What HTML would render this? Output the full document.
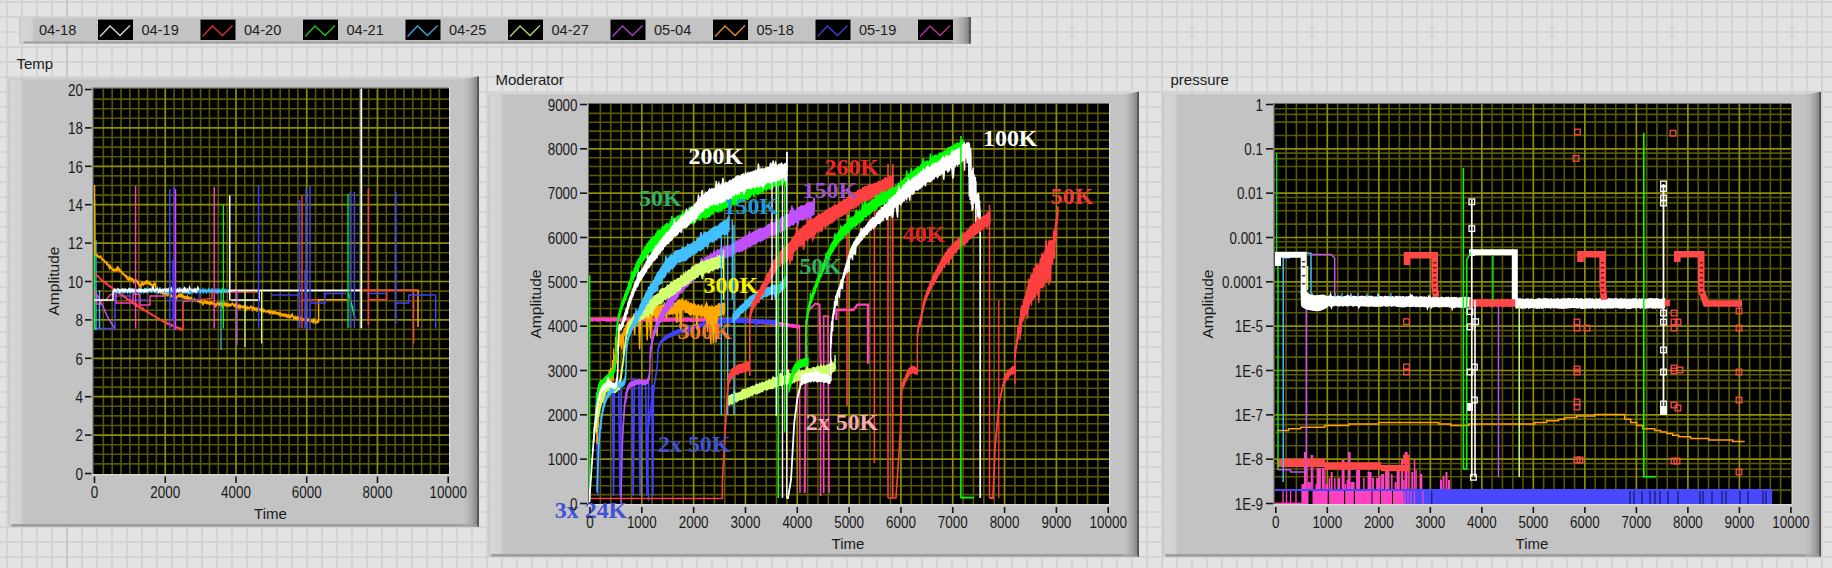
<!DOCTYPE html>
<html><head><meta charset="utf-8"><style>
html,body{margin:0;padding:0;}
body{width:1832px;height:568px;overflow:hidden;position:relative;
background-color:#e3e3e3;
background-image:linear-gradient(to right, #d4d4d4 0, #d4d4d4 2px, transparent 2px),
 linear-gradient(to bottom, #d4d4d4 0, #d4d4d4 2px, transparent 2px);
background-size:15px 15px;background-position:6px 1px;}
.dk{position:absolute;left:66px;top:0;width:2px;height:568px;background:#c9c9c9;}
svg{position:absolute;left:0;top:0;}
text{white-space:pre;}
</style></head><body><div class="dk"></div>
<svg width="1832" height="568" viewBox="0 0 1832 568"><defs>
<clipPath id="clipT"><rect x="93.5" y="88.5" width="355.5" height="385.5"/></clipPath>
<clipPath id="clipM"><rect x="589" y="104" width="520" height="400"/></clipPath>
<clipPath id="clipP"><rect x="1274.5" y="104" width="517" height="400"/></clipPath>
<linearGradient id="gl" x1="0" x2="1" y1="0" y2="0">
  <stop offset="0" stop-color="#c9c9c9"/><stop offset="0.2" stop-color="#d5d5d5"/><stop offset="0.85" stop-color="#d1d1d1"/><stop offset="1" stop-color="#c3c3c3"/>
</linearGradient>
<linearGradient id="gr" x1="0" x2="1" y1="0" y2="0">
  <stop offset="0" stop-color="#c3c3c3"/><stop offset="0.3" stop-color="#b9b9b9"/><stop offset="0.6" stop-color="#a3a3a3"/><stop offset="0.85" stop-color="#888888"/><stop offset="1" stop-color="#6a6a6a"/>
</linearGradient>
</defs>
<rect x="19.40" y="17.40" width="951.60" height="26.10" fill="#c3c3c3" />
<rect x="19.40" y="17.40" width="15.00" height="26.10" fill="url(#gl)" />
<rect x="19.40" y="17.40" width="951.60" height="1.20" fill="#cdcdcd" />
<rect x="23.40" y="41.50" width="947.60" height="2.00" fill="#9d9d9d" />
<polygon points="953,18.0 959,17.599999999999998 967,17.0 971,17.0 971,43.5 953,43.5" fill="url(#gr)"/>
<rect x="968.80" y="17.00" width="2.20" height="26.50" fill="#5a5a5a" />
<text transform="translate(39.00 35.3) scale(0.94 1)" font-family="Liberation Sans" font-size="15.5" fill="#202020">04-18</text>
<rect x="98.00" y="19.60" width="35.00" height="20.40" fill="#000" />
<polyline points="100.0,36.5 110.0,26 120.0,35.5 130.0,25.5" fill="none" stroke="#d8d8d8" stroke-width="1.3"/>
<text transform="translate(141.50 35.3) scale(0.94 1)" font-family="Liberation Sans" font-size="15.5" fill="#202020">04-19</text>
<rect x="200.50" y="19.60" width="35.00" height="20.40" fill="#000" />
<polyline points="202.5,36.5 212.5,26 222.5,35.5 232.5,25.5" fill="none" stroke="#e03030" stroke-width="1.3"/>
<text transform="translate(244.00 35.3) scale(0.94 1)" font-family="Liberation Sans" font-size="15.5" fill="#202020">04-20</text>
<rect x="303.00" y="19.60" width="35.00" height="20.40" fill="#000" />
<polyline points="305.0,36.5 315.0,26 325.0,35.5 335.0,25.5" fill="none" stroke="#20c020" stroke-width="1.3"/>
<text transform="translate(346.50 35.3) scale(0.94 1)" font-family="Liberation Sans" font-size="15.5" fill="#202020">04-21</text>
<rect x="405.50" y="19.60" width="35.00" height="20.40" fill="#000" />
<polyline points="407.5,36.5 417.5,26 427.5,35.5 437.5,25.5" fill="none" stroke="#40a8e0" stroke-width="1.3"/>
<text transform="translate(449.00 35.3) scale(0.94 1)" font-family="Liberation Sans" font-size="15.5" fill="#202020">04-25</text>
<rect x="508.00" y="19.60" width="35.00" height="20.40" fill="#000" />
<polyline points="510.0,36.5 520.0,26 530.0,35.5 540.0,25.5" fill="none" stroke="#b0d870" stroke-width="1.3"/>
<text transform="translate(551.50 35.3) scale(0.94 1)" font-family="Liberation Sans" font-size="15.5" fill="#202020">04-27</text>
<rect x="610.50" y="19.60" width="35.00" height="20.40" fill="#000" />
<polyline points="612.5,36.5 622.5,26 632.5,35.5 642.5,25.5" fill="none" stroke="#b040d0" stroke-width="1.3"/>
<text transform="translate(654.00 35.3) scale(0.94 1)" font-family="Liberation Sans" font-size="15.5" fill="#202020">05-04</text>
<rect x="713.00" y="19.60" width="35.00" height="20.40" fill="#000" />
<polyline points="715.0,36.5 725.0,26 735.0,35.5 745.0,25.5" fill="none" stroke="#e09020" stroke-width="1.3"/>
<text transform="translate(756.50 35.3) scale(0.94 1)" font-family="Liberation Sans" font-size="15.5" fill="#202020">05-18</text>
<rect x="815.50" y="19.60" width="35.00" height="20.40" fill="#000" />
<polyline points="817.5,36.5 827.5,26 837.5,35.5 847.5,25.5" fill="none" stroke="#4040d0" stroke-width="1.3"/>
<text transform="translate(859.00 35.3) scale(0.94 1)" font-family="Liberation Sans" font-size="15.5" fill="#202020">05-19</text>
<rect x="918.00" y="19.60" width="35.00" height="20.40" fill="#000" />
<polyline points="920.0,36.5 930.0,26 940.0,35.5 950.0,25.5" fill="none" stroke="#c0309a" stroke-width="1.3"/>
<text transform="translate(16.50 69.00) scale(1.0 1)" font-family="Liberation Sans" font-size="15" font-weight="normal" text-anchor="start" fill="#202020">Temp</text>
<rect x="8.30" y="78.50" width="470.70" height="448.00" fill="#c3c3c3" />
<rect x="8.30" y="78.50" width="15.00" height="448.00" fill="url(#gl)" />
<rect x="8.30" y="78.50" width="470.70" height="1.00" fill="#cccccc" />
<rect x="11.30" y="524.00" width="467.70" height="2.50" fill="#9d9d9d" />
<polygon points="463,78.5 469,78.5 475,77.1 478,76.5 479,76.5 479,526.5 463,526.5" fill="url(#gr)"/>
<rect x="477.40" y="76.70" width="1.60" height="449.80" fill="#505050" />
<rect x="11.30" y="524.00" width="466.10" height="2.50" fill="#9d9d9d" opacity="0.6"/>
<rect x="92.50" y="87.50" width="356.50" height="1.00" fill="#6a6a6a" />
<rect x="92.50" y="87.50" width="1.00" height="386.50" fill="#6a6a6a" />
<rect x="92.50" y="474.00" width="357.50" height="1.30" fill="#dadada" />
<rect x="449.00" y="87.50" width="1.30" height="387.50" fill="#dadada" />
<rect x="93.50" y="88.50" width="355.50" height="385.50" fill="#000" />
<line x1="103.34" y1="88.50" x2="103.34" y2="474.00" stroke="#585800" stroke-width="1.6" />
<line x1="112.19" y1="88.50" x2="112.19" y2="474.00" stroke="#585800" stroke-width="1.6" />
<line x1="121.03" y1="88.50" x2="121.03" y2="474.00" stroke="#585800" stroke-width="1.6" />
<line x1="129.87" y1="88.50" x2="129.87" y2="474.00" stroke="#585800" stroke-width="1.6" />
<line x1="138.71" y1="88.50" x2="138.71" y2="474.00" stroke="#585800" stroke-width="1.6" />
<line x1="147.56" y1="88.50" x2="147.56" y2="474.00" stroke="#585800" stroke-width="1.6" />
<line x1="156.40" y1="88.50" x2="156.40" y2="474.00" stroke="#585800" stroke-width="1.6" />
<line x1="174.08" y1="88.50" x2="174.08" y2="474.00" stroke="#585800" stroke-width="1.6" />
<line x1="182.93" y1="88.50" x2="182.93" y2="474.00" stroke="#585800" stroke-width="1.6" />
<line x1="191.77" y1="88.50" x2="191.77" y2="474.00" stroke="#585800" stroke-width="1.6" />
<line x1="200.61" y1="88.50" x2="200.61" y2="474.00" stroke="#585800" stroke-width="1.6" />
<line x1="209.45" y1="88.50" x2="209.45" y2="474.00" stroke="#585800" stroke-width="1.6" />
<line x1="218.29" y1="88.50" x2="218.29" y2="474.00" stroke="#585800" stroke-width="1.6" />
<line x1="227.14" y1="88.50" x2="227.14" y2="474.00" stroke="#585800" stroke-width="1.6" />
<line x1="244.82" y1="88.50" x2="244.82" y2="474.00" stroke="#585800" stroke-width="1.6" />
<line x1="253.66" y1="88.50" x2="253.66" y2="474.00" stroke="#585800" stroke-width="1.6" />
<line x1="262.51" y1="88.50" x2="262.51" y2="474.00" stroke="#585800" stroke-width="1.6" />
<line x1="271.35" y1="88.50" x2="271.35" y2="474.00" stroke="#585800" stroke-width="1.6" />
<line x1="280.19" y1="88.50" x2="280.19" y2="474.00" stroke="#585800" stroke-width="1.6" />
<line x1="289.03" y1="88.50" x2="289.03" y2="474.00" stroke="#585800" stroke-width="1.6" />
<line x1="297.88" y1="88.50" x2="297.88" y2="474.00" stroke="#585800" stroke-width="1.6" />
<line x1="315.56" y1="88.50" x2="315.56" y2="474.00" stroke="#585800" stroke-width="1.6" />
<line x1="324.40" y1="88.50" x2="324.40" y2="474.00" stroke="#585800" stroke-width="1.6" />
<line x1="333.25" y1="88.50" x2="333.25" y2="474.00" stroke="#585800" stroke-width="1.6" />
<line x1="342.09" y1="88.50" x2="342.09" y2="474.00" stroke="#585800" stroke-width="1.6" />
<line x1="350.93" y1="88.50" x2="350.93" y2="474.00" stroke="#585800" stroke-width="1.6" />
<line x1="359.77" y1="88.50" x2="359.77" y2="474.00" stroke="#585800" stroke-width="1.6" />
<line x1="368.62" y1="88.50" x2="368.62" y2="474.00" stroke="#585800" stroke-width="1.6" />
<line x1="386.30" y1="88.50" x2="386.30" y2="474.00" stroke="#585800" stroke-width="1.6" />
<line x1="395.14" y1="88.50" x2="395.14" y2="474.00" stroke="#585800" stroke-width="1.6" />
<line x1="403.99" y1="88.50" x2="403.99" y2="474.00" stroke="#585800" stroke-width="1.6" />
<line x1="412.83" y1="88.50" x2="412.83" y2="474.00" stroke="#585800" stroke-width="1.6" />
<line x1="421.67" y1="88.50" x2="421.67" y2="474.00" stroke="#585800" stroke-width="1.6" />
<line x1="430.51" y1="88.50" x2="430.51" y2="474.00" stroke="#585800" stroke-width="1.6" />
<line x1="439.36" y1="88.50" x2="439.36" y2="474.00" stroke="#585800" stroke-width="1.6" />
<line x1="93.50" y1="463.90" x2="449.00" y2="463.90" stroke="#585800" stroke-width="1.6" />
<line x1="93.50" y1="454.30" x2="449.00" y2="454.30" stroke="#585800" stroke-width="1.6" />
<line x1="93.50" y1="444.70" x2="449.00" y2="444.70" stroke="#585800" stroke-width="1.6" />
<line x1="93.50" y1="425.50" x2="449.00" y2="425.50" stroke="#585800" stroke-width="1.6" />
<line x1="93.50" y1="415.90" x2="449.00" y2="415.90" stroke="#585800" stroke-width="1.6" />
<line x1="93.50" y1="406.30" x2="449.00" y2="406.30" stroke="#585800" stroke-width="1.6" />
<line x1="93.50" y1="387.10" x2="449.00" y2="387.10" stroke="#585800" stroke-width="1.6" />
<line x1="93.50" y1="377.50" x2="449.00" y2="377.50" stroke="#585800" stroke-width="1.6" />
<line x1="93.50" y1="367.90" x2="449.00" y2="367.90" stroke="#585800" stroke-width="1.6" />
<line x1="93.50" y1="348.70" x2="449.00" y2="348.70" stroke="#585800" stroke-width="1.6" />
<line x1="93.50" y1="339.10" x2="449.00" y2="339.10" stroke="#585800" stroke-width="1.6" />
<line x1="93.50" y1="329.50" x2="449.00" y2="329.50" stroke="#585800" stroke-width="1.6" />
<line x1="93.50" y1="310.30" x2="449.00" y2="310.30" stroke="#585800" stroke-width="1.6" />
<line x1="93.50" y1="300.70" x2="449.00" y2="300.70" stroke="#585800" stroke-width="1.6" />
<line x1="93.50" y1="291.10" x2="449.00" y2="291.10" stroke="#585800" stroke-width="1.6" />
<line x1="93.50" y1="271.90" x2="449.00" y2="271.90" stroke="#585800" stroke-width="1.6" />
<line x1="93.50" y1="262.30" x2="449.00" y2="262.30" stroke="#585800" stroke-width="1.6" />
<line x1="93.50" y1="252.70" x2="449.00" y2="252.70" stroke="#585800" stroke-width="1.6" />
<line x1="93.50" y1="233.50" x2="449.00" y2="233.50" stroke="#585800" stroke-width="1.6" />
<line x1="93.50" y1="223.90" x2="449.00" y2="223.90" stroke="#585800" stroke-width="1.6" />
<line x1="93.50" y1="214.30" x2="449.00" y2="214.30" stroke="#585800" stroke-width="1.6" />
<line x1="93.50" y1="195.10" x2="449.00" y2="195.10" stroke="#585800" stroke-width="1.6" />
<line x1="93.50" y1="185.50" x2="449.00" y2="185.50" stroke="#585800" stroke-width="1.6" />
<line x1="93.50" y1="175.90" x2="449.00" y2="175.90" stroke="#585800" stroke-width="1.6" />
<line x1="93.50" y1="156.70" x2="449.00" y2="156.70" stroke="#585800" stroke-width="1.6" />
<line x1="93.50" y1="147.10" x2="449.00" y2="147.10" stroke="#585800" stroke-width="1.6" />
<line x1="93.50" y1="137.50" x2="449.00" y2="137.50" stroke="#585800" stroke-width="1.6" />
<line x1="93.50" y1="118.30" x2="449.00" y2="118.30" stroke="#585800" stroke-width="1.6" />
<line x1="93.50" y1="108.70" x2="449.00" y2="108.70" stroke="#585800" stroke-width="1.6" />
<line x1="93.50" y1="99.10" x2="449.00" y2="99.10" stroke="#585800" stroke-width="1.6" />
<line x1="165.24" y1="88.50" x2="165.24" y2="474.00" stroke="#8e8e00" stroke-width="1.7" />
<line x1="235.98" y1="88.50" x2="235.98" y2="474.00" stroke="#8e8e00" stroke-width="1.7" />
<line x1="306.72" y1="88.50" x2="306.72" y2="474.00" stroke="#8e8e00" stroke-width="1.7" />
<line x1="377.46" y1="88.50" x2="377.46" y2="474.00" stroke="#8e8e00" stroke-width="1.7" />
<line x1="93.50" y1="435.10" x2="449.00" y2="435.10" stroke="#8e8e00" stroke-width="1.7" />
<line x1="93.50" y1="396.70" x2="449.00" y2="396.70" stroke="#8e8e00" stroke-width="1.7" />
<line x1="93.50" y1="358.30" x2="449.00" y2="358.30" stroke="#8e8e00" stroke-width="1.7" />
<line x1="93.50" y1="319.90" x2="449.00" y2="319.90" stroke="#8e8e00" stroke-width="1.7" />
<line x1="93.50" y1="281.50" x2="449.00" y2="281.50" stroke="#8e8e00" stroke-width="1.7" />
<line x1="93.50" y1="243.10" x2="449.00" y2="243.10" stroke="#8e8e00" stroke-width="1.7" />
<line x1="93.50" y1="204.70" x2="449.00" y2="204.70" stroke="#8e8e00" stroke-width="1.7" />
<line x1="93.50" y1="166.30" x2="449.00" y2="166.30" stroke="#8e8e00" stroke-width="1.7" />
<line x1="93.50" y1="127.90" x2="449.00" y2="127.90" stroke="#8e8e00" stroke-width="1.7" />
<g clip-path="url(#clipT)">
<polyline points="94.3,290.5 100.0,300.0 108.0,318.0 115.0,328.5" fill="none" stroke="#c050ff" stroke-width="1.5" stroke-linejoin="miter" />
<polyline points="94.3,328.5 115.0,328.5 115.0,296.0 130.0,296.0 130.0,300.0 150.0,300.0" fill="none" stroke="#4040ff" stroke-width="1.5" stroke-linejoin="miter" />
<line x1="94.5" y1="200.0" x2="94.5" y2="330.0" stroke="#00ff00" stroke-width="1.5"/>
<line x1="96.0" y1="240.0" x2="96.0" y2="330.0" stroke="#40c0ff" stroke-width="1.3"/>
<polyline points="94.5,185.0 95.0,254.0" fill="none" stroke="#ffa800" stroke-width="1.5" stroke-linejoin="miter" />
<polyline points="95.0,253.1 96.3,255.5 97.0,254.7 97.8,256.5 98.5,256.0 99.2,257.7 99.9,256.8 100.7,256.1 101.4,258.2 102.1,259.7 102.8,259.2 103.6,260.8 104.3,260.5 105.0,262.3 105.8,261.7 106.5,263.9 107.2,263.0 108.0,265.5 108.7,265.0 109.4,268.1 110.1,266.0 110.9,268.0 111.6,267.6 112.3,269.9 113.1,269.2 113.8,271.1 114.6,269.6 115.4,270.5 116.2,269.1 116.9,270.3 117.7,266.2 118.5,269.9 119.2,269.0 120.0,271.2 120.7,270.6 121.4,272.5 122.2,272.2 122.9,274.0 123.6,273.7 124.3,275.5 125.1,275.2 125.8,277.0 126.5,276.1 127.3,278.9 128.0,277.6 128.7,279.6 129.5,277.9 130.2,279.4 130.9,278.3 131.6,279.9 132.4,278.8 133.1,279.9 133.8,282.2 134.5,280.3 135.3,279.3 136.0,280.8 136.8,280.5 137.6,283.1 138.3,282.5 139.1,285.2 139.9,284.5 140.7,287.4 141.4,285.4 142.1,281.7 142.8,284.3 143.5,284.9 144.2,283.1 144.9,283.7 145.6,282.2 146.3,283.1 147.0,280.1 147.7,282.9 148.5,282.3 149.2,284.0 149.9,282.8 150.6,284.8 151.4,284.2 152.1,285.6 152.8,284.8 153.5,286.9 154.3,283.1 155.0,283.4 155.8,287.2 156.5,289.9 157.2,289.4 158.0,291.8 158.7,290.3 159.4,292.0 160.1,290.9 160.8,292.7 161.5,291.6 162.2,293.1 162.9,290.4 163.6,293.5 164.3,292.4 165.0,294.4 165.7,292.3 166.4,294.5 167.2,293.4 167.9,295.5 168.6,294.0 169.3,293.6 170.0,294.9 170.7,296.6 171.4,295.4 172.1,296.8 172.8,296.0 173.5,297.2 174.2,296.5 174.9,297.9 175.6,297.0 176.3,299.0 177.1,296.1 177.8,296.7 178.5,295.0 179.3,296.2 180.0,294.0 180.7,296.3 181.4,294.8 182.1,297.0 182.9,295.6 183.6,297.4 184.3,296.7 185.0,298.5 185.7,297.2 186.4,298.4 187.2,296.2 187.9,299.0 188.6,297.6 189.3,299.2 190.0,297.8 190.8,299.6 191.5,298.2 192.2,300.0 192.9,301.1 193.6,300.1 194.3,299.1 195.1,300.6 195.8,299.6 196.5,300.7 197.2,299.9 197.9,301.4 198.7,300.3 199.4,301.9 200.1,300.6 200.8,302.1 201.5,300.6 202.2,302.4 203.0,304.5 203.7,302.9 204.4,301.2 205.1,302.7 205.8,301.8 206.6,303.2 207.3,301.9 208.0,303.4 208.7,302.4 209.4,304.0 210.2,302.2 210.9,303.7 211.6,302.4 212.3,303.8 213.0,302.6 213.8,304.2 214.5,303.0 215.2,304.2 215.9,306.2 216.6,304.3 217.3,302.9 218.1,304.3 218.8,303.1 219.5,304.7 220.2,303.2 220.9,304.9 221.7,303.3 222.4,306.2 223.1,303.8 223.8,305.0 224.5,303.4 225.2,305.2 226.0,303.6 226.7,305.5 227.4,304.1 228.1,305.6 228.8,304.3 229.6,305.8 230.3,304.4 231.0,305.5 231.7,304.2 232.4,303.3 233.1,304.7 233.9,305.9 234.6,304.6 235.3,306.1 236.0,305.1 236.7,306.9 237.4,305.7 238.1,307.1 238.9,305.4 239.6,309.1 240.3,306.0 241.0,307.4 241.7,306.3 242.4,307.3 243.1,306.3 243.9,307.8 244.6,306.7 245.3,305.7 246.0,309.8 246.7,308.4 247.4,307.1 248.1,308.5 248.9,307.6 249.6,308.6 250.3,307.2 251.0,306.3 251.7,307.7 252.4,309.5 253.1,307.3 253.9,309.2 254.6,308.2 255.3,309.7 256.0,308.4 256.7,310.3 257.4,308.7 258.1,310.3 258.9,308.6 259.6,310.1 260.3,309.3 261.0,310.5 261.7,309.7 262.4,310.9 263.1,309.7 263.8,311.5 264.5,310.3 265.2,311.5 265.9,312.2 266.6,311.5 267.3,310.9 268.0,312.0 268.7,311.0 269.4,312.8 270.1,311.0 270.9,312.7 271.6,311.6 272.3,313.1 273.0,311.6 273.7,313.2 274.4,312.1 275.1,313.4 275.8,312.1 276.5,313.6 277.2,312.9 277.9,314.0 278.6,312.9 279.3,314.7 280.0,313.2 280.7,315.1 281.4,314.0 282.2,315.5 282.9,314.3 283.6,315.6 284.3,314.5 285.0,316.1 285.8,314.5 286.5,316.5 287.2,315.3 287.9,316.9 288.6,315.4 289.4,317.2 290.1,315.6 290.8,317.2 291.5,315.9 292.2,314.3 293.0,316.6 293.7,318.2 294.4,317.1 295.1,318.6 295.8,317.0 296.6,318.9 297.3,317.4 298.0,319.4 298.7,317.8 299.4,319.7 300.1,318.0 300.8,319.9 301.6,318.4 302.3,320.2 303.0,318.9 303.7,319.9 304.4,319.2 305.1,320.6 305.8,319.1 306.5,320.7 307.2,319.5 307.9,320.7 308.7,319.3 309.4,320.9 310.1,319.9 310.8,321.4 311.5,320.2 312.2,321.8 312.9,320.1 313.6,321.8 314.3,318.3 315.0,322.0 315.8,323.1 316.5,322.2 317.2,321.3 317.9,322.4 318.6,322.0" fill="none" stroke="#ffa800" stroke-width="1.6" stroke-linejoin="miter" />
<polyline points="96.0,304.0 101.0,304.0 101.0,300.0 106.0,300.0 110.6,294.4 116.0,294.4 116.0,303.0 133.0,303.0 133.0,294.4 140.0,294.4 140.0,305.0 150.0,305.0 150.0,296.0 165.0,296.0" fill="none" stroke="#ff40c0" stroke-width="1.4" stroke-linejoin="miter" />
<polyline points="94.5,290.0 96.0,294.0 97.0,300.0 96.0,304.0" fill="none" stroke="#ff40c0" stroke-width="1.6" stroke-linejoin="miter" />
<line x1="99.5" y1="290.0" x2="99.5" y2="328.4" stroke="#40c0ff" stroke-width="1.4"/>
<polyline points="318.6,322.0 318.6,299.8 347.0,299.8" fill="none" stroke="#ffa800" stroke-width="1.5" stroke-linejoin="miter" />
<polyline points="364.0,290.3 418.0,290.3 418.0,327.0" fill="none" stroke="#ffa800" stroke-width="1.5" stroke-linejoin="miter" />
<polyline points="95.0,272.7 95.7,274.5 96.4,274.2 97.1,276.1 97.8,275.7 98.6,277.5 99.3,277.4 100.0,278.9 100.7,278.7 101.4,280.4 102.1,280.2 102.8,281.6 103.5,281.1 104.2,282.6 104.9,282.0 105.6,283.6 106.3,282.8 107.0,284.7 107.7,284.2 108.4,285.8 109.1,285.3 109.8,286.7 110.6,286.4 111.3,287.8 112.0,287.4 112.7,288.9 113.4,288.5 114.1,289.8 114.8,289.5 115.5,290.7 116.2,290.4 116.9,291.9 117.6,291.3 118.3,293.2 119.0,292.5 119.7,293.9 120.4,293.7 121.1,295.3 121.9,294.7 122.6,296.2 123.3,295.6 124.0,297.2 124.8,296.6 125.5,297.9 126.2,297.6 126.9,299.3 127.7,298.8 128.4,300.2 129.1,299.8 129.8,301.0 130.5,300.6 131.3,302.0 132.0,301.4 132.7,303.2 133.4,302.6 134.2,304.4 134.9,303.4 135.6,305.4 136.3,304.4 137.0,306.4 137.8,305.3 138.5,306.8 139.2,306.4 139.9,307.9 140.6,307.0 141.3,308.7 142.1,308.0 142.8,309.8 143.5,308.8 144.2,310.4 144.9,310.1 145.7,311.4 146.4,310.7 147.1,312.2 147.8,311.5 148.5,312.9 149.2,312.6 150.0,313.8 150.7,313.5 151.4,314.9 152.1,314.4 152.9,315.6 153.6,315.2 154.4,316.5 155.1,316.1 155.8,317.5 156.6,317.2 157.3,318.5 158.1,318.0 158.8,319.4 159.6,318.7 160.3,320.1 161.0,319.7 161.8,321.1 162.5,320.7 163.3,322.0 164.0,321.5 164.7,322.6 165.4,322.0 166.1,323.4 166.8,322.4 167.5,324.1 168.2,323.2 168.9,324.5 169.6,323.8 170.3,325.4 171.0,324.2 171.7,326.0 172.4,325.1 173.1,326.2 173.9,325.7 174.6,326.9 175.3,326.2 176.0,327.5 176.7,326.9 177.4,328.1 178.1,327.4 178.8,328.7 179.5,328.2 180.2,329.6 180.9,328.3 181.6,329.8 182.3,329.3 183.0,330.0" fill="none" stroke="#ff4040" stroke-width="1.5" stroke-linejoin="miter" />
<polyline points="183.0,330.0 183.0,301.6 212.0,298.4 212.0,292.0 259.0,292.0" fill="none" stroke="#ff4040" stroke-width="1.5" stroke-linejoin="miter" />
<polyline points="302.7,299.8 318.6,299.8" fill="none" stroke="#ff4040" stroke-width="1.4" stroke-linejoin="miter" />
<polyline points="345.0,290.3 418.0,290.3" fill="none" stroke="#ff4040" stroke-width="1.4" stroke-linejoin="miter" />
<polyline points="369.0,299.8 386.7,299.8 386.7,290.3" fill="none" stroke="#ff4040" stroke-width="1.4" stroke-linejoin="miter" />
<polyline points="113.0,289.9 113.7,292.4 114.4,290.4 115.1,292.2 115.8,290.1 116.5,292.5 117.2,290.4 117.9,292.4 118.6,290.4 119.3,292.3 120.0,290.1 120.7,292.0 121.4,289.8 122.1,292.5 122.8,289.8 123.5,291.8 124.2,289.5 124.9,292.4 125.6,290.2 126.3,291.8 127.0,290.2 127.7,292.3 128.4,289.7 129.1,292.0 129.8,290.1 130.5,292.0 131.2,289.8 131.9,292.2 132.6,289.9 133.3,292.0 134.0,289.6 134.7,292.3 135.4,289.9 136.1,292.0 136.8,290.0 137.5,291.6 138.2,289.9 138.9,292.5 139.6,290.2 140.3,291.9 141.0,289.5 141.8,292.0 142.5,290.3 143.2,292.5 143.9,289.7 144.6,288.7 145.3,289.6 146.0,291.8 146.7,289.4 147.4,291.7 148.1,289.2 148.8,291.6 149.5,289.7 150.2,291.7 150.9,290.2 151.6,292.4 152.3,285.9 153.0,292.2 153.7,289.9 154.4,291.8 155.1,290.4 155.8,291.6 156.5,290.3 157.2,292.5 157.9,290.1 158.6,292.6 159.3,290.4 160.0,287.5 160.7,290.4 161.4,292.0 162.1,290.1 162.8,292.6 163.5,289.5 164.2,292.4 164.9,290.3 165.6,291.6 166.3,289.7 167.0,293.9 167.7,290.2 168.4,291.9 169.1,289.4 169.8,292.0 170.5,289.5 171.2,292.1 171.9,289.7 172.6,291.6 173.3,290.1 174.0,292.1 174.7,290.1 175.4,292.6 176.1,289.7 176.8,291.9 177.5,290.3 178.2,291.6 178.9,290.0 179.6,287.1 180.3,289.8 181.0,291.7 181.7,289.6 182.4,292.0 183.1,290.3 183.8,292.0 184.5,290.3 185.2,292.5 185.9,289.7 186.6,291.8 187.3,289.8 188.0,292.6 188.7,290.4 189.4,294.3 190.1,290.4 190.8,292.4 191.5,289.6 192.2,292.3 192.9,289.8 193.6,291.7 194.3,290.3 195.0,292.3 195.7,290.3 196.4,292.3 197.1,289.4 197.8,291.7 198.5,290.2 199.2,291.9 200.0,289.7 200.7,292.3 201.4,290.3 202.1,291.9 202.8,289.4 203.5,291.9 204.2,289.7 204.9,291.7 205.6,290.0 206.3,292.4 207.0,290.2 207.7,291.6 208.4,289.4 209.1,291.8 209.8,289.7 210.5,291.6 211.2,289.7 211.9,291.9 212.6,289.6 213.3,291.6 214.0,290.4 214.7,292.2 215.4,290.0 216.1,292.4 216.8,289.8 217.5,292.2 218.2,289.5 218.9,291.8 219.6,290.0 220.3,291.8 221.0,289.8 221.7,291.8 222.4,289.4 223.1,292.5 223.8,288.8 224.5,292.5 225.2,289.9 225.9,291.9 226.6,290.3 227.3,291.6 228.0,291.0" fill="none" stroke="#40c0ff" stroke-width="1.3" stroke-linejoin="miter" />
<polyline points="113.0,289.4 113.7,290.9 114.4,289.6 115.1,291.3 115.8,289.8 116.5,291.2 117.2,289.6 117.9,288.6 118.6,289.5 119.3,291.7 120.0,289.9 120.7,291.5 121.4,289.9 122.1,291.1 122.8,289.3 123.5,291.2 124.2,289.7 124.9,291.3 125.6,289.5 126.3,291.0 127.0,289.9 127.7,291.6 128.4,289.6 129.1,291.0 129.8,287.9 130.5,291.2 131.2,289.7 131.9,291.2 132.6,289.6 133.3,291.5 134.0,289.7 134.8,291.1 135.5,289.3 136.2,291.0 136.9,290.0 137.6,291.1 138.3,289.7 139.0,291.4 139.7,289.3 140.4,291.2 141.1,289.5 141.8,291.4 142.5,289.9 143.2,291.1 143.9,290.0 144.6,291.7 145.3,289.7 146.0,291.6 146.7,289.8 147.4,291.2 148.1,289.7 148.8,290.9 149.5,289.9 150.2,288.6 150.9,289.4 151.6,291.1 152.3,289.6 153.0,286.3 153.7,289.9 154.4,291.1 155.1,289.3 155.8,291.3 156.5,289.7 157.2,288.2 157.9,289.9 158.6,291.5 159.3,289.6 160.0,291.5 160.7,289.9 161.4,291.1 162.1,289.5 162.8,291.5 163.5,289.7 164.2,288.8 164.9,289.2 165.6,291.2 166.3,289.4 167.0,291.0 167.7,289.5 168.4,291.6 169.1,287.7 169.8,291.7 170.5,289.8 171.2,287.9 171.9,289.7 172.6,291.4 173.3,289.6 174.0,291.5 174.7,289.4 175.4,291.2 176.1,289.9 176.8,291.6 177.5,289.3 178.2,291.4 179.0,289.5 179.7,291.2 180.4,289.7 181.1,290.9 181.8,289.9 182.5,291.7 183.2,289.5 183.9,291.4 184.6,286.9 185.3,291.0 186.0,289.5 186.7,291.7 187.4,289.6 188.1,291.5 188.8,289.4 189.5,287.1 190.2,289.5 190.9,289.3 191.6,289.6 192.3,291.0 193.0,289.7 193.7,291.3 194.4,289.3 195.1,291.5 195.8,289.4 196.5,291.5 197.2,289.9 197.9,287.1 198.6,288.9 199.3,291.4 200.0,290.5" fill="none" stroke="#ffffff" stroke-width="1.3" stroke-linejoin="miter" />
<polyline points="94.3,300.0 113.0,300.0 113.0,291.0" fill="none" stroke="#ffffff" stroke-width="1.5" stroke-linejoin="miter" />
<polyline points="228.0,290.5 361.3,290.3" fill="none" stroke="#ffffff" stroke-width="1.8" stroke-linejoin="miter" />
<polyline points="230.7,300.0 259.2,300.0 259.2,290.5" fill="none" stroke="#ffffff" stroke-width="1.5" stroke-linejoin="miter" />
<line x1="229.7" y1="195.4" x2="229.7" y2="300.0" stroke="#ffffff" stroke-width="1.6"/>
<line x1="361.3" y1="88.5" x2="361.3" y2="328.3" stroke="#ffffff" stroke-width="1.8"/>
<line x1="223.4" y1="204.9" x2="223.4" y2="328.5" stroke="#00ff00" stroke-width="1.3"/>
<line x1="348.0" y1="193.7" x2="348.0" y2="328.3" stroke="#00ff00" stroke-width="1.3"/>
<polyline points="348.7,293.5 352.0,306.0 355.0,318.8" fill="none" stroke="#00ff00" stroke-width="1.6" stroke-linejoin="miter" />
<line x1="261.6" y1="290.0" x2="261.6" y2="343.5" stroke="#d0ff70" stroke-width="1.3"/>
<line x1="221.0" y1="290.0" x2="221.0" y2="350.0" stroke="#40c0ff" stroke-width="1.2"/>
<line x1="245.0" y1="290.0" x2="245.0" y2="347.0" stroke="#d0ff70" stroke-width="1.2"/>
<line x1="135.6" y1="185.9" x2="135.6" y2="328.5" stroke="#ff40c0" stroke-width="1.4"/>
<line x1="175.5" y1="189.0" x2="175.5" y2="330.0" stroke="#ff40c0" stroke-width="1.5"/>
<line x1="214.2" y1="187.0" x2="214.2" y2="328.5" stroke="#ff40c0" stroke-width="1.5"/>
<line x1="237.0" y1="290.0" x2="237.0" y2="345.0" stroke="#c050ff" stroke-width="1.2"/>
<line x1="302.0" y1="195.3" x2="302.0" y2="328.3" stroke="#ff4040" stroke-width="1.4"/>
<line x1="368.3" y1="188.4" x2="368.3" y2="325.0" stroke="#ff4040" stroke-width="1.5"/>
<line x1="413.6" y1="290.0" x2="413.6" y2="343.5" stroke="#ff4040" stroke-width="1.4"/>
<line x1="169.8" y1="189.0" x2="169.8" y2="328.5" stroke="#4040ff" stroke-width="1.5"/>
<line x1="174.2" y1="185.9" x2="174.2" y2="330.0" stroke="#4040ff" stroke-width="1.5"/>
<line x1="258.6" y1="185.9" x2="258.6" y2="328.5" stroke="#4040ff" stroke-width="1.5"/>
<line x1="299.6" y1="200.0" x2="299.6" y2="328.3" stroke="#4040ff" stroke-width="1.5"/>
<line x1="306.0" y1="189.0" x2="306.0" y2="330.0" stroke="#4040ff" stroke-width="1.5"/>
<line x1="310.0" y1="185.8" x2="310.0" y2="330.0" stroke="#4040ff" stroke-width="1.5"/>
<line x1="350.2" y1="192.0" x2="350.2" y2="328.0" stroke="#4040ff" stroke-width="1.5"/>
<line x1="354.4" y1="192.0" x2="354.4" y2="328.0" stroke="#4040ff" stroke-width="1.5"/>
<line x1="396.0" y1="192.0" x2="396.0" y2="323.6" stroke="#4040ff" stroke-width="1.5"/>
<line x1="435.7" y1="295.0" x2="435.7" y2="328.3" stroke="#4040ff" stroke-width="1.5"/>
<line x1="173.0" y1="260.0" x2="173.0" y2="320.0" stroke="#4040ff" stroke-width="1.5"/>
<line x1="305.0" y1="270.0" x2="305.0" y2="328.0" stroke="#4040ff" stroke-width="1.5"/>
<polyline points="271.0,295.0 299.6,295.0" fill="none" stroke="#4040ff" stroke-width="1.4" stroke-linejoin="miter" />
<polyline points="310.7,303.0 325.0,303.0 325.0,293.5 346.0,293.5" fill="none" stroke="#4040ff" stroke-width="1.4" stroke-linejoin="miter" />
<polyline points="369.0,293.5 386.7,293.5" fill="none" stroke="#4040ff" stroke-width="1.4" stroke-linejoin="miter" />
<polyline points="396.0,303.0 408.8,303.0 408.8,295.0 435.7,295.0" fill="none" stroke="#4040ff" stroke-width="1.4" stroke-linejoin="miter" />
<polyline points="165.0,300.0 199.0,300.0 199.0,290.0" fill="none" stroke="#4040ff" stroke-width="1.2" stroke-linejoin="miter" />
</g>
<text transform="translate(83.00 479.70) scale(0.86 1)" font-family="Liberation Sans" font-size="15.6" font-weight="normal" text-anchor="end" fill="#1a1a1a">0</text>
<line x1="85.00" y1="473.50" x2="91.50" y2="473.50" stroke="#141414" stroke-width="1.6" />
<text transform="translate(83.00 441.30) scale(0.86 1)" font-family="Liberation Sans" font-size="15.6" font-weight="normal" text-anchor="end" fill="#1a1a1a">2</text>
<line x1="85.00" y1="435.10" x2="91.50" y2="435.10" stroke="#141414" stroke-width="1.6" />
<text transform="translate(83.00 402.90) scale(0.86 1)" font-family="Liberation Sans" font-size="15.6" font-weight="normal" text-anchor="end" fill="#1a1a1a">4</text>
<line x1="85.00" y1="396.70" x2="91.50" y2="396.70" stroke="#141414" stroke-width="1.6" />
<text transform="translate(83.00 364.50) scale(0.86 1)" font-family="Liberation Sans" font-size="15.6" font-weight="normal" text-anchor="end" fill="#1a1a1a">6</text>
<line x1="85.00" y1="358.30" x2="91.50" y2="358.30" stroke="#141414" stroke-width="1.6" />
<text transform="translate(83.00 326.10) scale(0.86 1)" font-family="Liberation Sans" font-size="15.6" font-weight="normal" text-anchor="end" fill="#1a1a1a">8</text>
<line x1="85.00" y1="319.90" x2="91.50" y2="319.90" stroke="#141414" stroke-width="1.6" />
<text transform="translate(83.00 287.70) scale(0.86 1)" font-family="Liberation Sans" font-size="15.6" font-weight="normal" text-anchor="end" fill="#1a1a1a">10</text>
<line x1="85.00" y1="281.50" x2="91.50" y2="281.50" stroke="#141414" stroke-width="1.6" />
<text transform="translate(83.00 249.30) scale(0.86 1)" font-family="Liberation Sans" font-size="15.6" font-weight="normal" text-anchor="end" fill="#1a1a1a">12</text>
<line x1="85.00" y1="243.10" x2="91.50" y2="243.10" stroke="#141414" stroke-width="1.6" />
<text transform="translate(83.00 210.90) scale(0.86 1)" font-family="Liberation Sans" font-size="15.6" font-weight="normal" text-anchor="end" fill="#1a1a1a">14</text>
<line x1="85.00" y1="204.70" x2="91.50" y2="204.70" stroke="#141414" stroke-width="1.6" />
<text transform="translate(83.00 172.50) scale(0.86 1)" font-family="Liberation Sans" font-size="15.6" font-weight="normal" text-anchor="end" fill="#1a1a1a">16</text>
<line x1="85.00" y1="166.30" x2="91.50" y2="166.30" stroke="#141414" stroke-width="1.6" />
<text transform="translate(83.00 134.10) scale(0.86 1)" font-family="Liberation Sans" font-size="15.6" font-weight="normal" text-anchor="end" fill="#1a1a1a">18</text>
<line x1="85.00" y1="127.90" x2="91.50" y2="127.90" stroke="#141414" stroke-width="1.6" />
<text transform="translate(83.00 95.70) scale(0.86 1)" font-family="Liberation Sans" font-size="15.6" font-weight="normal" text-anchor="end" fill="#1a1a1a">20</text>
<line x1="85.00" y1="89.50" x2="91.50" y2="89.50" stroke="#141414" stroke-width="1.6" />
<line x1="94.50" y1="476.50" x2="94.50" y2="483.00" stroke="#141414" stroke-width="1.6" />
<text transform="translate(94.50 497.80) scale(0.86 1)" font-family="Liberation Sans" font-size="15.6" font-weight="normal" text-anchor="middle" fill="#1a1a1a">0</text>
<line x1="165.24" y1="476.50" x2="165.24" y2="483.00" stroke="#141414" stroke-width="1.6" />
<text transform="translate(165.24 497.80) scale(0.86 1)" font-family="Liberation Sans" font-size="15.6" font-weight="normal" text-anchor="middle" fill="#1a1a1a">2000</text>
<line x1="235.98" y1="476.50" x2="235.98" y2="483.00" stroke="#141414" stroke-width="1.6" />
<text transform="translate(235.98 497.80) scale(0.86 1)" font-family="Liberation Sans" font-size="15.6" font-weight="normal" text-anchor="middle" fill="#1a1a1a">4000</text>
<line x1="306.72" y1="476.50" x2="306.72" y2="483.00" stroke="#141414" stroke-width="1.6" />
<text transform="translate(306.72 497.80) scale(0.86 1)" font-family="Liberation Sans" font-size="15.6" font-weight="normal" text-anchor="middle" fill="#1a1a1a">6000</text>
<line x1="377.46" y1="476.50" x2="377.46" y2="483.00" stroke="#141414" stroke-width="1.6" />
<text transform="translate(377.46 497.80) scale(0.86 1)" font-family="Liberation Sans" font-size="15.6" font-weight="normal" text-anchor="middle" fill="#1a1a1a">8000</text>
<line x1="448.20" y1="476.50" x2="448.20" y2="483.00" stroke="#141414" stroke-width="1.6" />
<text transform="translate(448.20 497.80) scale(0.86 1)" font-family="Liberation Sans" font-size="15.6" font-weight="normal" text-anchor="middle" fill="#1a1a1a">10000</text>
<text transform="translate(270.50 519.00) scale(1.0 1)" font-family="Liberation Sans" font-size="15" font-weight="normal" text-anchor="middle" fill="#1a1a1a">Time</text>
<text x="58.50" y="281.00" font-family="Liberation Sans" font-size="15.5" font-weight="normal" text-anchor="middle" fill="#1a1a1a" transform="rotate(-90 58.5 281)">Amplitude</text>
<text transform="translate(495.50 84.50) scale(1.0 1)" font-family="Liberation Sans" font-size="15" font-weight="normal" text-anchor="start" fill="#202020">Moderator</text>
<rect x="488.30" y="93.80" width="650.70" height="462.70" fill="#c3c3c3" />
<rect x="488.30" y="93.80" width="15.00" height="462.70" fill="url(#gl)" />
<rect x="488.30" y="93.80" width="650.70" height="1.00" fill="#cccccc" />
<rect x="491.30" y="554.00" width="647.70" height="2.50" fill="#9d9d9d" />
<polygon points="1123,93.8 1129,93.8 1135,92.39999999999999 1138,91.8 1139,91.8 1139,556.5 1123,556.5" fill="url(#gr)"/>
<rect x="1137.40" y="92.00" width="1.60" height="464.50" fill="#505050" />
<rect x="491.30" y="554.00" width="646.10" height="2.50" fill="#9d9d9d" opacity="0.6"/>
<rect x="588.00" y="103.00" width="521.00" height="1.00" fill="#6a6a6a" />
<rect x="588.00" y="103.00" width="1.00" height="401.00" fill="#6a6a6a" />
<rect x="588.00" y="504.00" width="522.00" height="1.30" fill="#dadada" />
<rect x="1109.00" y="103.00" width="1.30" height="402.00" fill="#dadada" />
<rect x="589.00" y="104.00" width="520.00" height="400.00" fill="#000" />
<line x1="600.36" y1="104.00" x2="600.36" y2="504.00" stroke="#585800" stroke-width="1.6" />
<line x1="610.73" y1="104.00" x2="610.73" y2="504.00" stroke="#585800" stroke-width="1.6" />
<line x1="621.09" y1="104.00" x2="621.09" y2="504.00" stroke="#585800" stroke-width="1.6" />
<line x1="631.46" y1="104.00" x2="631.46" y2="504.00" stroke="#585800" stroke-width="1.6" />
<line x1="652.18" y1="104.00" x2="652.18" y2="504.00" stroke="#585800" stroke-width="1.6" />
<line x1="662.55" y1="104.00" x2="662.55" y2="504.00" stroke="#585800" stroke-width="1.6" />
<line x1="672.91" y1="104.00" x2="672.91" y2="504.00" stroke="#585800" stroke-width="1.6" />
<line x1="683.28" y1="104.00" x2="683.28" y2="504.00" stroke="#585800" stroke-width="1.6" />
<line x1="704.00" y1="104.00" x2="704.00" y2="504.00" stroke="#585800" stroke-width="1.6" />
<line x1="714.37" y1="104.00" x2="714.37" y2="504.00" stroke="#585800" stroke-width="1.6" />
<line x1="724.73" y1="104.00" x2="724.73" y2="504.00" stroke="#585800" stroke-width="1.6" />
<line x1="735.10" y1="104.00" x2="735.10" y2="504.00" stroke="#585800" stroke-width="1.6" />
<line x1="755.82" y1="104.00" x2="755.82" y2="504.00" stroke="#585800" stroke-width="1.6" />
<line x1="766.19" y1="104.00" x2="766.19" y2="504.00" stroke="#585800" stroke-width="1.6" />
<line x1="776.55" y1="104.00" x2="776.55" y2="504.00" stroke="#585800" stroke-width="1.6" />
<line x1="786.92" y1="104.00" x2="786.92" y2="504.00" stroke="#585800" stroke-width="1.6" />
<line x1="807.64" y1="104.00" x2="807.64" y2="504.00" stroke="#585800" stroke-width="1.6" />
<line x1="818.01" y1="104.00" x2="818.01" y2="504.00" stroke="#585800" stroke-width="1.6" />
<line x1="828.37" y1="104.00" x2="828.37" y2="504.00" stroke="#585800" stroke-width="1.6" />
<line x1="838.74" y1="104.00" x2="838.74" y2="504.00" stroke="#585800" stroke-width="1.6" />
<line x1="859.46" y1="104.00" x2="859.46" y2="504.00" stroke="#585800" stroke-width="1.6" />
<line x1="869.83" y1="104.00" x2="869.83" y2="504.00" stroke="#585800" stroke-width="1.6" />
<line x1="880.19" y1="104.00" x2="880.19" y2="504.00" stroke="#585800" stroke-width="1.6" />
<line x1="890.56" y1="104.00" x2="890.56" y2="504.00" stroke="#585800" stroke-width="1.6" />
<line x1="911.28" y1="104.00" x2="911.28" y2="504.00" stroke="#585800" stroke-width="1.6" />
<line x1="921.65" y1="104.00" x2="921.65" y2="504.00" stroke="#585800" stroke-width="1.6" />
<line x1="932.01" y1="104.00" x2="932.01" y2="504.00" stroke="#585800" stroke-width="1.6" />
<line x1="942.38" y1="104.00" x2="942.38" y2="504.00" stroke="#585800" stroke-width="1.6" />
<line x1="963.10" y1="104.00" x2="963.10" y2="504.00" stroke="#585800" stroke-width="1.6" />
<line x1="973.47" y1="104.00" x2="973.47" y2="504.00" stroke="#585800" stroke-width="1.6" />
<line x1="983.83" y1="104.00" x2="983.83" y2="504.00" stroke="#585800" stroke-width="1.6" />
<line x1="994.20" y1="104.00" x2="994.20" y2="504.00" stroke="#585800" stroke-width="1.6" />
<line x1="1014.92" y1="104.00" x2="1014.92" y2="504.00" stroke="#585800" stroke-width="1.6" />
<line x1="1025.29" y1="104.00" x2="1025.29" y2="504.00" stroke="#585800" stroke-width="1.6" />
<line x1="1035.65" y1="104.00" x2="1035.65" y2="504.00" stroke="#585800" stroke-width="1.6" />
<line x1="1046.02" y1="104.00" x2="1046.02" y2="504.00" stroke="#585800" stroke-width="1.6" />
<line x1="1066.74" y1="104.00" x2="1066.74" y2="504.00" stroke="#585800" stroke-width="1.6" />
<line x1="1077.11" y1="104.00" x2="1077.11" y2="504.00" stroke="#585800" stroke-width="1.6" />
<line x1="1087.47" y1="104.00" x2="1087.47" y2="504.00" stroke="#585800" stroke-width="1.6" />
<line x1="1097.84" y1="104.00" x2="1097.84" y2="504.00" stroke="#585800" stroke-width="1.6" />
<line x1="589.00" y1="494.63" x2="1109.00" y2="494.63" stroke="#585800" stroke-width="1.6" />
<line x1="589.00" y1="485.77" x2="1109.00" y2="485.77" stroke="#585800" stroke-width="1.6" />
<line x1="589.00" y1="476.90" x2="1109.00" y2="476.90" stroke="#585800" stroke-width="1.6" />
<line x1="589.00" y1="468.03" x2="1109.00" y2="468.03" stroke="#585800" stroke-width="1.6" />
<line x1="589.00" y1="450.30" x2="1109.00" y2="450.30" stroke="#585800" stroke-width="1.6" />
<line x1="589.00" y1="441.43" x2="1109.00" y2="441.43" stroke="#585800" stroke-width="1.6" />
<line x1="589.00" y1="432.57" x2="1109.00" y2="432.57" stroke="#585800" stroke-width="1.6" />
<line x1="589.00" y1="423.70" x2="1109.00" y2="423.70" stroke="#585800" stroke-width="1.6" />
<line x1="589.00" y1="405.97" x2="1109.00" y2="405.97" stroke="#585800" stroke-width="1.6" />
<line x1="589.00" y1="397.10" x2="1109.00" y2="397.10" stroke="#585800" stroke-width="1.6" />
<line x1="589.00" y1="388.23" x2="1109.00" y2="388.23" stroke="#585800" stroke-width="1.6" />
<line x1="589.00" y1="379.37" x2="1109.00" y2="379.37" stroke="#585800" stroke-width="1.6" />
<line x1="589.00" y1="361.63" x2="1109.00" y2="361.63" stroke="#585800" stroke-width="1.6" />
<line x1="589.00" y1="352.77" x2="1109.00" y2="352.77" stroke="#585800" stroke-width="1.6" />
<line x1="589.00" y1="343.90" x2="1109.00" y2="343.90" stroke="#585800" stroke-width="1.6" />
<line x1="589.00" y1="335.03" x2="1109.00" y2="335.03" stroke="#585800" stroke-width="1.6" />
<line x1="589.00" y1="317.30" x2="1109.00" y2="317.30" stroke="#585800" stroke-width="1.6" />
<line x1="589.00" y1="308.43" x2="1109.00" y2="308.43" stroke="#585800" stroke-width="1.6" />
<line x1="589.00" y1="299.57" x2="1109.00" y2="299.57" stroke="#585800" stroke-width="1.6" />
<line x1="589.00" y1="290.70" x2="1109.00" y2="290.70" stroke="#585800" stroke-width="1.6" />
<line x1="589.00" y1="272.97" x2="1109.00" y2="272.97" stroke="#585800" stroke-width="1.6" />
<line x1="589.00" y1="264.10" x2="1109.00" y2="264.10" stroke="#585800" stroke-width="1.6" />
<line x1="589.00" y1="255.23" x2="1109.00" y2="255.23" stroke="#585800" stroke-width="1.6" />
<line x1="589.00" y1="246.37" x2="1109.00" y2="246.37" stroke="#585800" stroke-width="1.6" />
<line x1="589.00" y1="228.63" x2="1109.00" y2="228.63" stroke="#585800" stroke-width="1.6" />
<line x1="589.00" y1="219.77" x2="1109.00" y2="219.77" stroke="#585800" stroke-width="1.6" />
<line x1="589.00" y1="210.90" x2="1109.00" y2="210.90" stroke="#585800" stroke-width="1.6" />
<line x1="589.00" y1="202.03" x2="1109.00" y2="202.03" stroke="#585800" stroke-width="1.6" />
<line x1="589.00" y1="184.30" x2="1109.00" y2="184.30" stroke="#585800" stroke-width="1.6" />
<line x1="589.00" y1="175.43" x2="1109.00" y2="175.43" stroke="#585800" stroke-width="1.6" />
<line x1="589.00" y1="166.57" x2="1109.00" y2="166.57" stroke="#585800" stroke-width="1.6" />
<line x1="589.00" y1="157.70" x2="1109.00" y2="157.70" stroke="#585800" stroke-width="1.6" />
<line x1="589.00" y1="139.97" x2="1109.00" y2="139.97" stroke="#585800" stroke-width="1.6" />
<line x1="589.00" y1="131.10" x2="1109.00" y2="131.10" stroke="#585800" stroke-width="1.6" />
<line x1="589.00" y1="122.23" x2="1109.00" y2="122.23" stroke="#585800" stroke-width="1.6" />
<line x1="589.00" y1="113.37" x2="1109.00" y2="113.37" stroke="#585800" stroke-width="1.6" />
<line x1="641.82" y1="104.00" x2="641.82" y2="504.00" stroke="#8e8e00" stroke-width="1.7" />
<line x1="693.64" y1="104.00" x2="693.64" y2="504.00" stroke="#8e8e00" stroke-width="1.7" />
<line x1="745.46" y1="104.00" x2="745.46" y2="504.00" stroke="#8e8e00" stroke-width="1.7" />
<line x1="797.28" y1="104.00" x2="797.28" y2="504.00" stroke="#8e8e00" stroke-width="1.7" />
<line x1="849.10" y1="104.00" x2="849.10" y2="504.00" stroke="#8e8e00" stroke-width="1.7" />
<line x1="900.92" y1="104.00" x2="900.92" y2="504.00" stroke="#8e8e00" stroke-width="1.7" />
<line x1="952.74" y1="104.00" x2="952.74" y2="504.00" stroke="#8e8e00" stroke-width="1.7" />
<line x1="1004.56" y1="104.00" x2="1004.56" y2="504.00" stroke="#8e8e00" stroke-width="1.7" />
<line x1="1056.38" y1="104.00" x2="1056.38" y2="504.00" stroke="#8e8e00" stroke-width="1.7" />
<line x1="589.00" y1="459.17" x2="1109.00" y2="459.17" stroke="#8e8e00" stroke-width="1.7" />
<line x1="589.00" y1="414.83" x2="1109.00" y2="414.83" stroke="#8e8e00" stroke-width="1.7" />
<line x1="589.00" y1="370.50" x2="1109.00" y2="370.50" stroke="#8e8e00" stroke-width="1.7" />
<line x1="589.00" y1="326.17" x2="1109.00" y2="326.17" stroke="#8e8e00" stroke-width="1.7" />
<line x1="589.00" y1="281.83" x2="1109.00" y2="281.83" stroke="#8e8e00" stroke-width="1.7" />
<line x1="589.00" y1="237.50" x2="1109.00" y2="237.50" stroke="#8e8e00" stroke-width="1.7" />
<line x1="589.00" y1="193.17" x2="1109.00" y2="193.17" stroke="#8e8e00" stroke-width="1.7" />
<line x1="589.00" y1="148.83" x2="1109.00" y2="148.83" stroke="#8e8e00" stroke-width="1.7" />
<g clip-path="url(#clipM)">
<polygon points="590.0,318.2 590.8,318.1 591.6,318.4 592.4,318.1 593.2,318.6 594.0,318.5 594.8,318.2 595.6,318.6 596.4,318.7 597.2,318.4 598.0,318.4 598.8,317.9 599.6,318.6 600.4,318.7 601.2,318.1 602.0,318.0 602.8,318.2 603.6,318.0 604.5,318.0 605.3,318.6 606.1,318.4 606.9,318.2 607.7,318.3 608.5,318.5 609.3,318.2 610.1,318.7 610.9,318.7 611.7,318.0 612.5,318.6 613.3,318.1 614.1,318.1 614.9,318.3 615.7,318.3 616.5,318.4 617.3,318.0 618.1,318.3 618.9,318.3 619.7,318.6 620.5,318.5 621.3,318.6 622.1,318.6 622.9,318.4 623.7,318.7 624.5,318.8 625.3,318.2 626.1,318.5 626.9,318.2 627.7,318.4 628.5,318.4 629.3,318.5 630.1,318.6 630.9,318.3 631.8,318.2 632.6,318.6 633.4,318.5 634.2,318.4 635.0,318.7 635.8,318.1 636.6,318.8 637.4,318.3 638.2,318.2 639.0,318.4 639.8,318.3 640.6,318.8 641.4,318.3 642.2,318.7 643.0,318.2 643.8,318.3 644.6,318.7 645.4,318.4 646.2,318.1 647.0,318.4 647.8,318.3 648.6,318.8 649.4,318.5 650.2,318.5 651.0,318.8 651.8,318.6 652.6,318.7 653.4,318.4 654.2,318.7 655.0,318.4 655.8,318.1 656.6,318.2 657.4,318.2 658.2,318.5 659.1,318.3 659.9,318.1 660.7,318.8 661.5,318.4 662.3,318.5 663.1,318.1 663.9,318.9 664.7,318.5 665.5,318.7 666.3,318.6 667.1,318.2 667.9,318.4 668.7,318.5 669.5,318.2 670.3,318.6 671.1,318.7 671.9,318.4 672.7,318.8 673.5,318.5 674.3,318.4 675.1,318.8 675.9,318.5 676.7,318.8 677.5,318.4 678.3,318.3 679.1,318.3 679.9,318.4 680.7,318.4 681.5,318.4 682.3,318.8 683.1,318.9 683.9,318.2 684.7,318.2 685.5,318.9 686.4,319.0 687.2,318.4 688.0,318.4 688.8,318.6 689.6,318.6 690.4,318.9 691.2,318.7 692.0,318.5 692.8,318.7 693.6,318.3 694.4,318.7 695.2,318.9 696.0,318.9 696.8,318.6 697.6,318.5 698.4,318.6 699.2,318.2 700.0,318.8 700.8,318.4 701.6,318.4 702.4,318.6 703.2,318.6 704.0,318.9 704.8,318.8 705.6,318.9 706.4,318.6 707.2,318.5 708.0,319.0 708.8,318.5 709.6,319.0 710.4,319.1 711.2,319.0 712.1,319.1 712.9,318.8 713.7,318.9 714.5,318.7 715.3,318.6 716.1,319.0 716.9,319.0 717.7,318.6 718.5,318.9 719.3,318.6 720.1,318.8 720.9,319.0 721.7,319.0 722.5,318.6 723.3,319.0 724.1,318.7 724.9,318.7 725.7,319.3 726.5,319.0 727.3,318.8 728.1,318.7 728.9,319.3 729.7,318.9 730.5,318.9 731.3,319.0 732.1,319.2 732.9,319.2 733.8,319.2 734.6,319.1 735.4,318.9 736.2,319.5 737.0,319.5 737.8,319.0 738.6,319.0 739.4,319.5 740.2,319.2 741.0,319.4 741.8,319.4 742.6,319.3 743.4,319.4 744.2,319.5 745.0,319.6 745.8,319.8 746.6,319.2 747.4,319.4 748.2,319.3 749.0,320.1 749.8,319.8 750.6,319.6 751.4,319.8 752.2,320.3 753.0,319.7 753.8,320.0 754.6,320.1 755.4,320.0 756.2,320.5 757.0,320.8 757.8,320.4 758.6,320.8 759.4,321.0 760.2,321.1 761.0,320.7 761.8,321.1 762.6,321.0 763.4,321.1 764.2,321.0 765.0,321.5 765.8,321.5 766.6,321.5 767.4,321.6 768.2,321.5 769.0,321.8 769.8,321.5 770.6,322.2 771.4,321.8 772.2,321.7 773.0,321.7 773.8,321.9 774.6,322.1 775.4,322.0 776.2,322.2 777.0,322.4 777.8,322.4 778.6,322.9 779.4,322.4 780.2,322.6 781.0,323.0 781.8,322.9 782.6,323.4 783.4,323.8 784.2,323.3 785.0,323.7 785.8,323.9 786.6,323.9 787.4,323.8 788.2,323.9 789.0,324.2 789.8,324.2 790.6,324.6 791.4,324.8 792.2,324.5 793.0,324.6 793.8,325.1 794.6,324.8 795.4,325.2 796.2,325.2 797.0,325.3 797.8,325.3 798.6,325.9 799.4,325.5 799.4,327.8 798.6,327.9 797.8,327.9 797.0,328.0 796.2,327.2 795.4,327.5 794.6,327.1 793.8,327.1 793.0,327.4 792.2,326.6 791.4,327.0 790.6,326.8 789.8,326.4 789.0,326.5 788.2,326.6 787.4,326.1 786.6,326.0 785.8,325.8 785.0,326.2 784.2,325.8 783.4,325.5 782.6,325.4 781.8,325.4 781.0,325.8 780.2,325.4 779.4,325.0 778.6,325.0 777.8,325.2 777.0,325.2 776.2,324.8 775.4,325.1 774.6,324.5 773.8,324.7 773.0,324.2 772.2,324.7 771.4,324.3 770.6,324.1 769.8,324.3 769.0,323.7 768.2,324.0 767.4,324.0 766.6,323.5 765.8,323.5 765.0,324.0 764.2,323.4 763.4,323.8 762.6,323.4 761.8,323.6 761.0,323.5 760.2,322.9 759.4,323.4 758.6,323.1 757.8,323.3 757.0,322.7 756.2,322.9 755.4,322.4 754.6,322.5 753.8,322.5 753.0,322.5 752.2,322.2 751.4,322.7 750.6,322.1 749.8,322.2 749.0,322.3 748.2,322.1 747.4,322.3 746.6,321.7 745.8,321.6 745.0,321.9 744.2,321.7 743.4,321.6 742.6,321.4 741.8,321.3 741.0,321.3 740.2,321.6 739.4,321.4 738.6,321.2 737.8,321.7 737.0,321.5 736.2,321.2 735.4,321.7 734.6,321.7 733.8,321.8 732.9,321.4 732.1,321.2 731.3,321.2 730.5,321.7 729.7,321.5 728.9,321.2 728.1,321.6 727.3,321.2 726.5,321.1 725.7,321.6 724.9,321.4 724.1,321.3 723.3,321.2 722.5,321.7 721.7,321.5 720.9,321.7 720.1,321.7 719.3,321.6 718.5,321.5 717.7,321.4 716.9,321.6 716.1,321.4 715.3,321.6 714.5,321.0 713.7,320.8 712.9,321.6 712.1,321.3 711.2,321.6 710.4,321.5 709.6,321.5 708.8,321.2 708.0,321.1 707.2,320.8 706.4,321.5 705.6,320.8 704.8,320.7 704.0,321.4 703.2,321.4 702.4,320.7 701.6,320.7 700.8,321.3 700.0,320.7 699.2,321.3 698.4,321.0 697.6,321.0 696.8,321.0 696.0,321.2 695.2,320.8 694.4,320.7 693.6,320.8 692.8,321.3 692.0,321.3 691.2,321.3 690.4,321.3 689.6,320.7 688.8,320.7 688.0,320.7 687.2,321.2 686.4,321.0 685.5,320.9 684.7,321.1 683.9,321.0 683.1,321.0 682.3,321.1 681.5,320.6 680.7,321.1 679.9,321.3 679.1,321.3 678.3,320.9 677.5,321.0 676.7,320.8 675.9,321.1 675.1,320.6 674.3,320.9 673.5,320.9 672.7,321.1 671.9,320.9 671.1,320.6 670.3,321.0 669.5,320.8 668.7,321.2 667.9,321.3 667.1,320.9 666.3,320.9 665.5,321.2 664.7,321.1 663.9,320.8 663.1,321.0 662.3,321.1 661.5,321.0 660.7,321.1 659.9,321.0 659.1,321.2 658.2,321.1 657.4,320.9 656.6,320.6 655.8,320.5 655.0,321.2 654.2,321.0 653.4,320.6 652.6,321.2 651.8,320.8 651.0,320.6 650.2,321.1 649.4,321.1 648.6,320.9 647.8,321.2 647.0,321.1 646.2,320.6 645.4,321.2 644.6,320.5 643.8,320.6 643.0,321.2 642.2,320.5 641.4,321.0 640.6,321.0 639.8,320.5 639.0,321.0 638.2,320.6 637.4,321.1 636.6,321.0 635.8,320.6 635.0,320.4 634.2,321.0 633.4,320.5 632.6,321.0 631.8,321.0 630.9,321.1 630.1,320.4 629.3,320.4 628.5,320.9 627.7,320.9 626.9,320.8 626.1,320.4 625.3,321.0 624.5,321.0 623.7,320.5 622.9,320.9 622.1,320.6 621.3,320.7 620.5,321.1 619.7,320.5 618.9,321.0 618.1,320.7 617.3,321.1 616.5,320.5 615.7,320.5 614.9,321.1 614.1,320.7 613.3,320.4 612.5,320.9 611.7,321.0 610.9,320.9 610.1,320.4 609.3,320.9 608.5,320.8 607.7,321.0 606.9,321.0 606.1,321.0 605.3,320.7 604.5,320.4 603.6,320.5 602.8,320.4 602.0,320.4 601.2,320.6 600.4,320.5 599.6,320.6 598.8,320.9 598.0,320.7 597.2,321.1 596.4,320.4 595.6,320.5 594.8,320.4 594.0,320.5 593.2,320.5 592.4,321.1 591.6,320.4 590.8,321.0 590.0,320.6" fill="#ff40c0" stroke="#ff40c0" stroke-width="1.4"/>
<polyline points="799.4,326.8 800.0,493.0" fill="none" stroke="#ff40c0" stroke-width="1.5" stroke-linejoin="miter" />
<polyline points="804.7,493.0 806.0,322.6 809.0,310.0 815.3,303.6 819.5,304.6 820.6,362.8" fill="none" stroke="#ff40c0" stroke-width="2.0" stroke-linejoin="miter" />
<polyline points="823.7,493.0 823.7,316.0 828.0,316.0 829.0,493.0" fill="none" stroke="#ff40c0" stroke-width="1.6" stroke-linejoin="miter" />
<polyline points="836.4,320.0 836.4,310.0 853.3,310.0 857.5,304.6 868.0,304.6 868.1,363.8" fill="none" stroke="#ff40c0" stroke-width="2.4" stroke-linejoin="miter" />
<line x1="820.6" y1="360.0" x2="820.6" y2="496.0" stroke="#ff40c0" stroke-width="1.5"/>
<polyline points="596.5,392.0 597.8,496.0 599.0,392.0" fill="none" stroke="#4040ff" stroke-width="1.7" stroke-linejoin="miter" />
<polyline points="612.5,385.0 613.5,496.0 614.5,385.0" fill="none" stroke="#4040ff" stroke-width="1.7" stroke-linejoin="miter" />
<polyline points="618.5,380.0 620.0,496.0 621.5,380.0" fill="none" stroke="#4040ff" stroke-width="1.7" stroke-linejoin="miter" />
<polyline points="632.0,378.0 633.2,496.0 634.5,378.0" fill="none" stroke="#4040ff" stroke-width="1.7" stroke-linejoin="miter" />
<polyline points="638.8,380.0 640.1,496.0 641.4,380.0" fill="none" stroke="#4040ff" stroke-width="1.7" stroke-linejoin="miter" />
<polyline points="645.5,383.0 647.1,496.0 648.7,383.0" fill="none" stroke="#4040ff" stroke-width="1.7" stroke-linejoin="miter" />
<polyline points="652.0,385.0 652.8,496.0 653.5,385.0" fill="none" stroke="#4040ff" stroke-width="1.7" stroke-linejoin="miter" />
<polygon points="648.4,499.3 648.4,498.4 648.4,497.5 648.4,496.2 648.4,495.7 648.4,494.4 648.3,493.7 648.3,492.8 648.3,491.7 648.3,491.4 648.3,490.2 648.3,489.5 648.2,488.8 648.2,488.0 648.2,487.1 648.2,486.4 648.2,485.5 648.2,484.5 648.2,483.7 648.1,482.7 648.1,481.7 648.1,481.0 648.1,480.1 648.1,479.5 648.0,478.6 648.0,477.7 648.0,476.9 648.0,476.0 648.0,475.0 648.0,474.1 648.0,473.8 648.0,472.9 647.9,471.9 647.9,470.9 647.9,470.6 647.9,469.6 647.9,468.5 647.9,467.7 647.9,466.8 647.9,466.4 647.9,465.2 647.8,464.6 647.8,463.5 647.8,463.1 647.8,462.2 647.8,461.4 647.8,460.3 647.8,459.5 647.8,458.7 647.8,457.9 647.8,456.9 647.8,456.3 647.8,455.3 647.8,454.4 647.8,453.6 647.8,452.6 647.8,451.9 647.8,450.9 647.8,450.2 647.8,449.3 647.8,448.3 647.8,447.4 647.8,446.7 647.8,446.0 647.9,445.3 647.9,444.4 647.9,443.9 647.9,442.9 647.9,442.2 647.9,440.8 648.0,440.2 648.0,439.5 648.0,438.8 648.0,437.9 648.0,437.2 648.1,436.2 648.1,435.7 648.1,434.4 648.2,434.1 648.2,432.9 648.3,432.0 648.3,431.5 648.3,430.8 648.4,429.7 648.4,428.9 648.5,428.5 648.5,427.4 648.6,426.7 648.7,425.7 648.7,424.9 648.8,424.0 648.9,423.4 649.0,422.2 649.0,421.7 649.1,420.7 649.2,420.1 649.3,419.0 649.4,418.0 649.5,417.5 649.6,416.5 649.7,415.7 649.8,414.7 649.9,414.1 650.0,413.3 650.1,412.0 650.2,411.5 650.3,410.5 650.4,409.7 650.5,409.1 650.6,408.1 650.7,407.5 650.9,406.2 651.0,405.3 651.1,404.9 651.2,404.0 651.3,403.2 651.5,402.1 651.6,401.5 651.7,400.5 651.8,399.5 652.0,398.7 652.1,398.2 652.2,397.2 652.3,396.3 652.5,395.5 652.6,394.7 652.7,393.8 652.9,393.1 653.0,391.9 653.2,391.4 653.3,390.2 653.5,389.8 653.6,388.5 653.7,387.6 653.9,387.2 654.0,386.4 654.1,385.5 654.3,384.5 654.4,383.7 654.5,382.9 654.7,382.3 654.8,381.3 654.9,380.7 655.1,379.7 655.2,379.0 655.3,377.8 655.5,377.4 655.6,376.2 655.7,375.4 655.9,374.8 656.0,373.6 656.1,373.2 656.2,372.2 656.3,371.1 656.5,370.3 656.6,369.8 656.7,368.7 656.8,368.1 656.9,367.0 657.0,366.7 657.1,365.5 657.1,364.8 657.2,364.3 657.3,363.3 657.4,362.6 657.5,361.1 657.5,360.1 657.6,359.5 657.6,358.6 657.7,357.4 657.7,356.7 657.7,356.3 657.7,355.0 657.8,354.1 657.8,353.2 657.8,352.5 657.8,351.1 657.9,349.7 658.0,348.9 658.2,347.8 658.4,347.1 658.7,346.2 659.0,345.1 659.4,344.2 659.8,342.8 660.3,342.5 660.8,340.9 661.3,340.8 661.9,340.0 662.5,339.2 663.1,338.8 663.7,338.1 664.4,337.1 665.2,336.4 665.9,336.0 666.8,335.3 667.6,334.8 668.6,334.4 669.5,333.7 670.6,333.6 671.6,332.8 672.4,332.2 673.2,331.5 674.0,331.5 674.9,331.1 675.8,331.1 676.6,330.3 677.5,330.6 678.5,329.6 679.4,329.6 680.3,329.0 681.3,329.4 682.2,329.2 683.2,328.2 684.1,328.5 685.1,328.3 686.0,327.3 686.9,326.9 687.9,327.3 688.8,327.0 689.7,326.9 690.6,326.4 691.5,326.4 692.4,326.4 693.2,325.3 694.1,325.5 695.0,324.7 695.8,325.3 696.7,324.3 697.6,324.3 698.5,324.4 699.3,323.4 700.2,323.4 701.1,323.4 701.9,323.3 702.8,322.9 703.7,322.7 704.6,322.1 705.5,322.7 706.4,321.9 707.3,321.7 708.2,321.8 709.1,321.6 710.0,321.4 710.9,320.9 711.8,320.7 712.7,320.7 713.6,320.6 714.5,321.1 715.3,320.6 716.2,320.1 717.0,319.9 717.9,320.4 718.7,319.9 719.5,319.6 720.4,319.6 721.2,319.3 722.1,319.1 723.0,319.1 723.9,319.3 724.8,319.5 725.8,318.7 726.8,319.6 727.8,319.5 728.7,319.0 729.5,319.5 730.3,319.1 731.2,319.1 732.1,319.0 733.1,319.3 734.0,319.0 735.0,318.9 735.9,318.8 736.9,319.0 737.8,318.9 738.7,318.7 739.6,319.1 740.6,319.1 741.5,318.6 742.4,318.5 743.3,318.8 744.2,319.1 745.2,319.0 746.0,319.2 746.9,319.2 747.8,319.5 748.6,318.8 749.5,319.3 750.4,319.6 751.2,319.8 752.1,319.9 753.0,319.9 753.9,319.5 754.8,319.9 755.7,320.2 756.6,319.9 757.5,320.0 758.3,319.8 759.2,320.3 760.0,320.0 760.9,319.9 761.8,320.2 762.6,319.6 763.5,320.3 764.4,320.4 765.3,320.2 766.3,319.9 767.2,320.7 768.1,320.2 769.0,320.3 769.9,320.0 770.9,320.1 771.8,320.8 772.7,320.4 773.6,320.9 774.5,320.4 775.3,320.3 776.2,320.5 777.0,321.4 777.0,324.7 776.2,323.6 775.3,323.6 774.5,324.5 773.6,324.5 772.7,323.8 771.8,323.4 770.9,323.7 769.9,323.9 769.0,323.2 768.1,323.3 767.2,323.2 766.3,323.7 765.3,323.5 764.4,323.1 763.5,322.9 762.6,323.1 761.8,323.0 760.9,323.2 760.0,322.9 759.2,323.1 758.3,322.9 757.5,322.5 756.6,327.4 755.7,322.9 754.8,323.2 753.9,322.4 753.0,322.5 752.1,323.2 751.2,322.5 750.4,322.4 749.5,322.4 748.6,322.6 747.8,322.5 746.9,322.6 746.0,322.5 745.2,322.8 744.2,322.6 743.3,322.8 742.4,322.1 741.5,322.1 740.6,322.6 739.6,322.3 738.7,322.5 737.8,322.7 736.9,322.0 735.9,321.8 735.0,322.3 734.0,322.7 733.1,322.0 732.1,321.9 731.2,322.5 730.3,321.7 729.5,322.5 728.7,321.9 727.8,322.8 726.8,322.9 725.8,322.4 724.8,322.4 723.9,322.8 723.0,322.4 722.1,325.0 721.2,323.0 720.4,323.3 719.5,327.2 718.7,322.7 717.9,323.3 717.0,323.2 716.2,323.3 715.3,323.9 714.5,323.8 713.6,323.6 712.7,324.0 711.8,324.0 710.9,324.1 710.0,325.0 709.1,324.4 708.2,325.0 707.3,325.2 706.4,325.8 705.5,325.6 704.6,331.7 703.7,326.1 702.8,326.4 701.9,326.7 701.1,326.3 700.2,326.7 699.3,327.5 698.5,327.5 697.6,328.0 696.7,328.2 695.8,327.8 695.0,327.8 694.1,328.1 693.2,328.4 692.4,329.0 691.5,328.9 690.6,329.8 689.7,329.4 688.8,333.0 687.9,330.5 686.9,330.7 686.0,330.7 685.1,331.1 684.1,331.9 683.2,331.8 682.2,332.4 681.3,332.2 680.3,332.8 679.4,332.5 678.5,333.3 677.5,333.6 676.6,333.9 675.8,334.2 674.9,334.5 674.0,334.6 673.2,335.7 672.4,336.0 671.6,336.1 670.6,336.7 669.5,337.4 668.6,337.4 667.6,337.7 666.8,338.8 665.9,339.3 665.2,339.3 664.4,339.9 663.7,340.7 663.1,341.0 662.5,341.8 661.9,342.3 661.3,342.5 660.8,343.3 660.3,344.2 659.8,345.5 659.4,346.3 659.0,347.1 658.7,348.2 658.4,348.9 658.2,350.1 658.0,351.0 657.9,356.6 657.8,352.8 657.8,354.1 657.8,355.1 657.8,356.2 657.7,357.3 657.7,357.7 657.7,359.1 657.7,359.6 657.6,360.5 657.6,361.3 657.5,362.0 657.5,363.5 657.4,364.4 657.3,365.5 657.2,365.7 657.1,366.7 657.1,367.5 657.0,368.3 656.9,368.9 656.8,370.2 656.7,370.5 656.6,371.4 656.5,372.5 656.3,373.2 656.2,373.8 656.1,374.6 656.0,375.7 655.9,376.2 655.7,377.0 655.6,378.3 655.5,379.2 655.3,379.8 655.2,380.5 655.1,381.7 654.9,382.2 654.8,382.9 654.7,383.9 654.5,384.8 654.4,385.7 654.3,386.3 654.1,387.0 654.0,388.2 653.9,389.0 653.7,389.6 653.6,390.2 653.5,391.3 653.3,392.3 653.2,393.1 653.0,393.8 652.9,394.8 652.7,396.0 652.6,396.6 652.5,397.6 652.3,398.0 652.2,399.1 652.1,400.0 652.0,400.5 651.8,401.6 651.7,402.5 651.6,403.1 651.5,403.9 651.3,404.9 651.2,406.0 651.1,406.8 651.0,407.5 650.9,408.3 650.7,408.8 650.6,410.1 650.5,410.7 650.4,411.6 650.3,412.5 650.2,413.0 650.1,414.2 650.0,414.8 649.9,415.9 649.8,416.4 649.7,417.4 649.6,418.6 649.5,419.4 649.4,420.2 649.3,420.8 649.2,422.0 649.1,426.0 649.0,423.7 649.0,424.1 648.9,425.0 648.8,425.9 648.7,426.5 648.7,427.7 648.6,428.7 648.5,429.3 648.5,430.1 648.4,430.7 648.4,431.7 648.3,432.8 648.3,433.4 648.3,434.0 648.2,434.7 648.2,436.0 648.1,436.2 648.1,437.1 648.1,438.4 648.0,439.1 648.0,439.8 648.0,440.5 648.0,441.1 648.0,442.1 647.9,442.9 647.9,443.9 647.9,444.6 647.9,445.6 647.9,446.0 647.9,446.9 647.8,447.9 647.8,448.6 647.8,449.6 647.8,450.2 647.8,451.0 647.8,452.1 647.8,452.8 647.8,453.7 647.8,454.8 647.8,455.3 647.8,456.3 647.8,456.8 647.8,457.7 647.8,458.7 647.8,459.3 647.8,460.4 647.8,461.3 647.8,461.9 647.8,462.9 647.8,464.0 647.8,464.8 647.8,465.6 647.8,466.5 647.9,467.1 647.9,468.2 647.9,469.1 647.9,469.8 647.9,470.3 647.9,471.5 647.9,472.3 647.9,472.9 647.9,473.7 648.0,474.4 648.0,475.6 648.0,476.0 648.0,476.7 648.0,477.6 648.0,478.8 648.0,479.1 648.0,480.1 648.1,481.0 648.1,481.7 648.1,482.7 648.1,483.6 648.1,484.4 648.2,485.7 648.2,486.6 648.2,487.4 648.2,488.1 648.2,488.8 648.2,489.6 648.2,490.3 648.3,491.2 648.3,492.0 648.3,493.7 648.3,494.1 648.3,494.9 648.3,495.5 648.4,496.6 648.4,497.5 648.4,498.1 648.4,499.3 648.4,499.9 648.4,501.2" fill="#4040ff" stroke="#4040ff" stroke-width="1.4"/>
<polygon points="597.0,436.3 597.0,436.5 597.1,425.6 597.1,434.6 597.2,431.2 597.2,430.6 597.3,430.0 597.3,430.0 597.4,416.8 597.4,426.5 597.4,426.0 597.5,412.8 597.5,415.7 597.6,424.2 597.6,424.3 597.6,421.3 597.7,422.1 597.7,409.9 597.8,418.7 597.8,418.7 597.8,418.7 597.9,412.6 597.9,417.4 598.0,407.4 598.0,414.9 598.1,407.1 598.1,412.6 598.2,410.9 598.2,401.1 598.3,409.7 598.3,410.8 598.4,410.0 598.4,406.3 598.5,407.3 598.6,405.3 598.6,394.9 598.7,404.0 598.8,403.3 598.9,402.1 599.0,402.9 599.1,401.9 599.3,385.8 599.4,398.5 599.6,390.2 599.8,396.8 600.1,396.2 600.3,395.0 600.8,379.9 601.3,392.6 601.9,391.2 602.4,384.5 603.0,381.2 603.6,387.2 604.2,387.6 604.8,385.4 605.5,384.2 606.2,383.2 606.8,383.0 607.4,383.4 608.0,381.0 608.5,380.4 609.1,369.9 609.6,373.2 610.1,376.6 610.5,367.9 611.0,374.7 611.3,374.4 611.5,373.5 611.8,371.7 612.0,367.8 612.2,371.1 612.5,360.1 612.6,369.3 612.8,367.6 613.0,367.6 613.1,366.6 613.3,364.7 613.4,364.3 613.5,363.7 613.6,348.5 613.8,359.6 613.9,360.2 614.0,355.5 614.1,358.1 614.2,357.3 614.4,358.3 614.5,355.1 614.7,354.6 614.9,353.9 615.0,353.2 615.2,352.3 615.4,337.2 615.6,351.0 615.8,336.9 616.0,348.5 616.3,346.3 616.7,346.4 617.1,345.7 617.5,343.9 617.9,342.0 618.4,334.5 618.8,341.2 619.2,332.4 619.7,339.5 620.1,334.2 620.5,338.5 620.9,335.5 621.5,334.7 622.0,334.9 622.0,342.9 621.5,348.8 620.9,343.9 620.5,344.2 620.1,345.6 619.7,345.7 619.2,346.8 618.8,346.8 618.4,350.0 617.9,351.3 617.5,351.0 617.1,351.1 616.7,353.1 616.3,363.4 616.0,354.4 615.8,357.7 615.6,360.0 615.4,357.9 615.2,357.8 615.0,359.9 614.9,361.0 614.7,363.0 614.5,365.7 614.4,368.0 614.2,366.1 614.1,364.2 614.0,365.6 613.9,366.1 613.8,366.9 613.6,368.5 613.5,369.8 613.4,369.2 613.3,371.2 613.1,381.7 613.0,372.6 612.8,375.2 612.6,374.4 612.5,377.1 612.2,377.0 612.0,379.4 611.8,379.9 611.5,380.8 611.3,381.6 611.0,390.4 610.5,382.0 610.1,383.2 609.6,385.7 609.1,386.3 608.5,387.3 608.0,388.9 607.4,388.6 606.8,389.6 606.2,392.0 605.5,393.3 604.8,400.6 604.2,392.1 603.6,403.3 603.0,396.0 602.4,398.1 601.9,396.7 601.3,401.3 600.8,400.3 600.3,403.0 600.1,404.0 599.8,402.8 599.6,405.7 599.4,407.3 599.3,406.7 599.1,407.3 599.0,407.9 598.9,416.5 598.8,411.3 598.7,411.5 598.6,410.6 598.6,413.1 598.5,417.6 598.4,415.6 598.4,414.8 598.3,415.2 598.3,416.6 598.2,419.1 598.2,427.5 598.1,421.1 598.1,419.3 598.0,422.3 598.0,421.7 597.9,422.7 597.9,423.5 597.8,425.8 597.8,427.2 597.8,427.1 597.7,428.7 597.7,429.1 597.6,429.1 597.6,430.7 597.6,430.7 597.5,432.9 597.5,431.5 597.4,441.9 597.4,433.7 597.4,435.6 597.3,437.2 597.3,437.5 597.2,438.1 597.2,438.4 597.1,439.1 597.1,441.3 597.0,442.7 597.0,444.2" fill="#ffa800" stroke="#ffa800" stroke-width="1.0"/>
<polygon points="622.0,334.7 622.4,334.2 622.8,333.9 623.4,332.1 623.7,331.8 624.0,329.7 624.3,328.9 624.7,329.0 625.1,328.6 625.5,327.7 625.9,325.7 626.4,324.8 626.8,324.0 627.3,324.6 627.8,322.1 628.3,321.2 628.9,320.7 629.4,320.2 630.0,320.3 630.6,319.4 631.2,318.4 631.8,318.5 632.5,317.3 633.1,317.5 633.9,314.3 634.6,315.3 635.4,313.4 636.1,313.6 637.0,313.6 637.8,311.4 638.7,311.1 639.6,311.7 640.6,310.7 641.7,311.1 642.7,310.8 643.8,310.0 644.9,310.2 646.1,309.5 647.2,310.1 648.3,307.9 649.5,307.2 650.6,306.5 651.7,306.8 652.9,306.5 653.9,306.4 655.0,307.0 656.0,305.5 657.1,305.4 658.1,306.7 659.2,306.1 660.3,305.8 661.3,305.8 662.3,305.7 663.4,305.5 664.4,303.3 665.4,305.2 666.4,304.3 667.4,303.3 668.3,302.5 669.2,305.1 670.1,302.7 671.0,302.7 671.8,304.6 672.6,303.1 674.1,303.1 675.6,303.4 676.9,301.7 678.2,300.8 679.5,300.0 680.8,302.0 682.0,299.0 683.2,302.0 684.3,300.8 685.4,301.5 686.4,300.6 687.5,302.8 688.6,302.0 689.7,305.5 691.0,303.2 692.4,305.7 693.9,303.5 695.4,305.3 696.2,306.4 697.0,306.6 697.8,305.0 698.6,305.0 700.1,308.0 701.6,305.0 703.0,308.1 704.3,307.9 705.4,305.9 706.6,302.7 707.6,306.5 708.7,308.0 709.8,306.6 710.8,308.6 712.0,305.9 713.3,308.0 714.6,307.4 716.0,305.9 717.4,305.8 718.8,303.7 720.0,304.2 721.1,305.3 722.0,303.3 722.7,303.6 723.2,304.3 723.6,303.6 723.9,304.6 724.1,302.8 724.2,304.3 724.4,304.7 724.5,304.6 724.5,312.1 724.4,312.3 724.2,313.9 724.1,313.0 723.9,313.5 723.6,312.8 723.2,314.3 722.7,312.5 722.0,313.9 721.1,315.6 720.0,314.7 718.8,316.1 717.4,315.0 716.0,342.4 714.6,315.2 713.3,343.3 712.0,315.5 710.8,344.1 709.8,317.2 708.7,317.9 707.6,332.5 706.6,317.5 705.4,318.3 704.3,316.3 703.0,315.1 701.6,316.7 700.1,315.3 698.6,314.1 697.8,315.8 697.0,329.7 696.2,316.2 695.4,314.1 693.9,315.0 692.4,313.0 691.0,315.3 689.7,314.4 688.6,313.8 687.5,312.1 686.4,312.4 685.4,312.3 684.3,309.3 683.2,308.9 682.0,310.3 680.8,329.5 679.5,310.6 678.2,310.8 676.9,323.0 675.6,311.3 674.1,313.6 672.6,313.7 671.8,312.3 671.0,313.9 670.1,313.8 669.2,314.5 668.3,312.2 667.4,312.5 666.4,319.2 665.4,313.1 664.4,313.1 663.4,315.3 662.3,313.5 661.3,315.0 660.3,315.2 659.2,315.2 658.1,316.1 657.1,336.2 656.0,314.5 655.0,316.6 653.9,314.4 652.9,315.4 651.7,316.9 650.6,338.4 649.5,317.4 648.3,316.7 647.2,340.5 646.1,316.4 644.9,318.0 643.8,318.7 642.7,319.0 641.7,316.8 640.6,318.5 639.6,349.4 638.7,318.9 637.8,320.0 637.0,319.5 636.1,320.8 635.4,322.0 634.6,334.9 633.9,321.1 633.1,322.1 632.5,322.8 631.8,323.7 631.2,324.3 630.6,324.8 630.0,327.0 629.4,328.1 628.9,327.4 628.3,329.3 627.8,329.9 627.3,330.4 626.8,331.9 626.4,330.9 625.9,332.3 625.5,333.0 625.1,333.5 624.7,335.5 624.3,335.9 624.0,335.5 623.7,336.6 623.4,355.0 622.8,339.8 622.4,339.7 622.0,341.6" fill="#ffa800" stroke="#ffa800" stroke-width="1.4"/>
<polygon points="621.0,497.5 621.0,497.1 621.0,496.3 621.1,495.3 621.1,494.4 621.1,493.6 621.1,492.8 621.1,492.5 621.2,491.9 621.2,490.9 621.2,490.3 621.2,488.8 621.2,487.7 621.2,486.7 621.3,482.8 621.3,485.6 621.3,484.9 621.3,483.7 621.3,482.9 621.4,482.6 621.4,481.3 621.4,481.0 621.4,480.0 621.4,478.8 621.4,478.1 621.5,477.7 621.5,476.1 621.5,476.0 621.5,474.3 621.5,474.3 621.6,472.9 621.6,472.4 621.6,471.6 621.6,470.4 621.6,469.7 621.7,468.4 621.7,468.3 621.7,467.5 621.7,466.6 621.7,465.8 621.8,464.4 621.8,464.2 621.8,463.0 621.8,459.5 621.8,461.3 621.9,460.2 621.9,459.6 621.9,458.5 621.9,457.9 621.9,457.0 622.0,455.7 622.0,454.9 622.0,454.7 622.0,453.9 622.1,449.0 622.1,452.2 622.1,450.6 622.1,449.7 622.2,449.3 622.2,448.7 622.2,447.9 622.2,447.2 622.3,445.9 622.3,445.0 622.3,444.5 622.4,443.8 622.4,442.3 622.4,442.0 622.4,440.4 622.5,440.4 622.5,439.5 622.5,438.8 622.6,438.0 622.6,436.7 622.6,435.3 622.7,434.5 622.7,434.4 622.8,433.5 622.8,432.0 622.8,431.9 622.9,430.4 622.9,429.4 623.0,429.2 623.0,428.4 623.0,426.7 623.1,425.9 623.1,425.7 623.2,424.4 623.2,424.1 623.3,422.9 623.3,422.4 623.4,421.3 623.4,420.9 623.5,419.2 623.5,418.6 623.6,417.6 623.7,416.9 623.7,415.5 623.8,415.2 623.8,414.5 623.9,413.0 623.9,412.9 624.0,412.1 624.1,410.8 624.1,410.2 624.2,409.1 624.2,408.6 624.3,407.3 624.4,407.2 624.5,403.1 624.5,404.6 624.6,404.1 624.7,403.4 624.8,402.5 624.9,401.4 625.0,401.1 625.0,400.3 625.1,399.8 625.3,398.7 625.4,397.4 625.5,396.3 625.6,395.4 625.7,395.2 625.9,394.0 626.1,392.7 626.3,392.6 626.5,391.0 626.7,390.8 626.9,389.7 627.1,388.8 627.3,387.8 627.6,387.3 628.0,386.0 628.3,385.1 628.9,384.5 629.5,383.1 630.1,383.2 630.8,382.5 632.2,381.7 633.6,381.6 635.0,380.5 636.4,380.7 637.8,380.0 639.2,379.6 640.6,380.0 642.1,380.3 643.6,380.7 645.0,380.6 646.3,380.6 647.5,379.4 647.9,378.5 648.4,378.3 648.7,377.3 649.1,375.5 649.2,374.7 649.3,373.4 649.5,373.1 649.5,371.3 649.6,371.1 649.7,370.1 649.7,369.3 649.8,368.4 649.8,366.7 649.8,366.2 649.9,365.2 649.9,364.5 649.9,363.3 649.9,362.9 649.9,361.7 649.9,361.6 650.0,360.5 650.0,359.3 650.0,358.5 650.0,358.3 650.0,356.7 650.1,355.7 650.1,355.1 650.2,354.1 650.2,353.1 650.3,352.0 650.3,351.5 650.4,345.9 650.5,349.4 650.6,348.4 650.8,347.4 650.9,347.1 651.0,346.0 651.1,345.4 651.3,344.3 651.4,342.8 651.5,342.4 651.7,341.2 651.8,340.4 651.9,339.7 652.1,338.2 652.3,338.3 652.4,337.0 652.6,336.6 652.8,335.2 653.0,334.9 653.2,333.2 653.4,332.5 653.6,331.2 653.9,331.5 654.1,330.7 654.4,329.8 654.7,327.8 655.0,327.5 655.3,327.0 655.7,325.7 656.0,324.3 656.4,323.4 656.7,322.3 657.1,322.0 657.5,320.7 657.9,319.2 658.3,319.6 658.8,318.5 659.2,317.1 659.6,315.4 660.1,314.9 660.5,314.6 661.0,312.8 661.5,312.0 662.0,311.4 662.4,311.0 662.9,308.5 663.4,309.0 664.0,307.3 664.5,306.8 665.0,304.6 665.5,304.2 666.1,304.2 666.6,302.4 667.1,302.6 667.7,300.4 668.2,299.7 668.7,298.2 669.1,297.1 669.5,296.6 669.9,296.3 670.4,296.3 670.8,294.6 671.3,294.1 671.7,292.6 672.2,293.7 672.6,291.7 673.1,292.2 673.6,291.6 674.1,288.3 674.6,289.7 675.1,289.8 675.6,288.4 676.1,287.4 676.6,287.3 677.2,287.4 677.7,285.9 678.3,285.8 678.9,284.7 679.4,283.9 680.0,282.1 680.6,281.5 681.3,281.1 681.9,280.4 682.6,279.1 683.1,280.2 683.7,279.7 684.3,277.1 684.8,276.9 685.4,277.3 686.0,277.2 686.6,276.7 687.3,275.4 687.9,275.2 688.5,274.5 689.1,273.3 689.7,272.9 690.4,271.8 691.0,271.8 691.6,266.7 692.3,270.8 692.9,270.1 693.5,268.1 694.1,269.2 694.8,269.3 695.4,267.2 696.0,267.7 696.6,267.0 697.2,265.0 697.8,266.2 698.5,263.6 699.2,264.4 699.9,263.7 700.5,264.2 701.2,257.8 701.8,261.4 702.4,260.3 703.0,262.1 703.7,260.8 704.4,258.9 705.0,258.4 705.9,257.2 706.8,258.3 707.5,256.3 708.3,257.1 708.9,257.3 709.6,255.8 710.3,255.1 711.0,253.7 711.7,255.4 712.4,254.4 713.2,253.6 714.1,251.1 715.0,253.5 716.0,252.6 716.7,250.8 717.5,249.8 718.2,251.1 719.1,250.4 719.9,249.7 720.7,248.4 721.6,249.5 722.4,249.8 723.3,247.1 724.2,247.1 725.1,246.4 726.0,246.0 726.9,245.9 727.8,246.3 728.8,246.3 729.7,245.7 730.6,246.0 731.6,244.4 732.5,245.0 733.4,244.2 734.3,242.9 735.2,243.0 736.1,241.1 737.0,242.8 737.9,241.5 738.8,239.6 739.7,240.2 740.5,240.1 741.4,239.6 742.3,237.7 743.2,237.6 744.1,237.0 745.1,236.4 746.0,235.9 746.9,237.4 747.8,235.0 748.6,234.8 749.5,231.1 750.4,235.7 751.3,234.0 752.2,233.0 753.0,232.8 753.9,231.8 754.7,231.1 755.6,231.1 756.4,230.3 757.2,231.5 758.0,230.0 758.8,231.4 759.5,228.8 760.3,228.3 761.3,228.9 762.4,229.0 763.4,228.4 764.4,228.0 765.4,227.2 766.4,226.4 767.4,226.0 768.4,224.5 769.4,225.0 770.4,223.8 771.2,221.8 771.9,225.1 772.6,223.4 773.4,223.6 774.2,222.8 775.0,221.9 775.9,222.8 776.8,222.6 777.6,219.4 778.3,219.8 779.1,221.0 779.8,219.8 780.5,220.2 781.2,217.7 782.0,217.1 782.7,216.8 783.5,218.1 784.3,217.8 785.0,214.8 785.8,216.1 786.6,215.5 787.3,215.1 788.1,214.6 788.9,214.6 789.6,213.0 790.4,211.6 791.1,212.7 791.9,205.6 792.6,212.8 793.3,209.9 794.0,212.0 794.7,211.8 795.4,210.9 796.3,210.5 797.1,208.9 798.0,207.8 798.8,207.6 799.6,207.5 800.4,206.5 801.3,205.9 802.1,207.8 802.9,205.9 803.7,207.0 804.4,207.0 805.2,205.0 806.0,205.9 806.7,203.6 807.4,203.0 808.5,202.3 809.5,203.0 810.4,202.7 811.3,202.4 812.1,202.3 812.8,202.1 814.0,201.6 814.0,214.1 812.8,215.2 812.1,215.3 811.3,214.1 810.4,221.5 809.5,216.8 808.5,217.2 807.4,216.3 806.7,217.8 806.0,216.9 805.2,218.3 804.4,217.4 803.7,219.2 802.9,218.9 802.1,220.0 801.3,218.9 800.4,219.3 799.6,219.1 798.8,220.5 798.0,224.4 797.1,222.4 796.3,221.8 795.4,222.1 794.7,221.5 794.0,223.9 793.3,225.0 792.6,224.5 791.9,224.3 791.1,223.5 790.4,225.3 789.6,226.3 788.9,225.5 788.1,226.4 787.3,226.6 786.6,226.0 785.8,228.9 785.0,229.6 784.3,229.7 783.5,230.4 782.7,230.6 782.0,230.8 781.2,229.4 780.5,232.4 779.8,231.0 779.1,231.4 778.3,231.1 777.6,232.4 776.8,234.4 775.9,232.9 775.0,233.9 774.2,235.6 773.4,233.8 772.6,234.9 771.9,234.1 771.2,234.6 770.4,235.3 769.4,235.9 768.4,236.9 767.4,237.6 766.4,238.0 765.4,237.0 764.4,239.2 763.4,238.8 762.4,240.5 761.3,239.3 760.3,241.5 759.5,240.0 758.8,240.7 758.0,241.6 757.2,241.6 756.4,243.3 755.6,242.7 754.7,244.0 753.9,244.0 753.0,244.5 752.2,244.9 751.3,244.8 750.4,246.3 749.5,247.1 748.6,245.1 747.8,245.5 746.9,248.4 746.0,247.3 745.1,249.2 744.1,248.8 743.2,249.7 742.3,251.1 741.4,250.5 740.5,250.6 739.7,251.8 738.8,250.8 737.9,251.1 737.0,251.3 736.1,252.3 735.2,252.9 734.3,252.3 733.4,252.8 732.5,254.6 731.6,253.7 730.6,256.2 729.7,255.3 728.8,255.6 727.8,256.8 726.9,256.6 726.0,257.3 725.1,257.4 724.2,258.1 723.3,258.9 722.4,258.1 721.6,260.6 720.7,260.7 719.9,259.5 719.1,260.0 718.2,262.1 717.5,261.6 716.7,260.8 716.0,261.9 715.0,263.3 714.1,263.4 713.2,265.0 712.4,263.5 711.7,264.3 711.0,266.2 710.3,265.9 709.6,266.1 708.9,265.6 708.3,268.2 707.5,267.6 706.8,267.5 705.9,268.8 705.0,269.0 704.4,270.6 703.7,270.4 703.0,271.0 702.4,272.5 701.8,273.4 701.2,272.8 700.5,274.3 699.9,273.6 699.2,273.4 698.5,275.3 697.8,274.9 697.2,276.8 696.6,275.7 696.0,277.0 695.4,278.2 694.8,277.7 694.1,278.0 693.5,278.6 692.9,281.2 692.3,279.7 691.6,282.6 691.0,283.2 690.4,282.5 689.7,283.3 689.1,283.6 688.5,283.8 687.9,285.6 687.3,286.5 686.6,286.3 686.0,285.7 685.4,287.7 684.8,286.9 684.3,287.8 683.7,290.0 683.1,290.5 682.6,291.5 681.9,292.2 681.3,292.9 680.6,292.8 680.0,292.2 679.4,293.2 678.9,293.8 678.3,295.9 677.7,297.2 677.2,297.5 676.6,297.4 676.1,299.3 675.6,297.5 675.1,298.9 674.6,300.9 674.1,300.7 673.6,301.1 673.1,302.5 672.6,306.9 672.2,304.2 671.7,304.4 671.3,304.2 670.8,306.0 670.4,306.8 669.9,306.1 669.5,308.4 669.1,308.3 668.7,309.5 668.2,310.7 667.7,310.5 667.1,310.5 666.6,312.4 666.1,312.7 665.5,313.8 665.0,314.3 664.5,315.0 664.0,316.7 663.4,317.8 662.9,317.0 662.4,317.6 662.0,319.0 661.5,319.2 661.0,320.7 660.5,322.0 660.1,321.6 659.6,322.5 659.2,323.2 658.8,324.7 658.3,325.9 657.9,326.2 657.5,326.9 657.1,327.9 656.7,329.4 656.4,329.0 656.0,330.5 655.7,330.8 655.3,332.5 655.0,332.3 654.7,334.2 654.4,335.2 654.1,335.8 653.9,335.9 653.6,337.1 653.4,338.1 653.2,338.0 653.0,338.9 652.8,340.6 652.6,341.1 652.4,342.2 652.3,342.2 652.1,343.3 651.9,344.8 651.8,345.0 651.7,346.3 651.5,346.4 651.4,348.1 651.3,348.4 651.1,349.7 651.0,350.6 650.9,351.3 650.8,352.2 650.6,353.5 650.5,354.0 650.4,355.4 650.3,355.6 650.3,356.5 650.2,357.6 650.2,358.1 650.1,359.2 650.1,360.2 650.0,361.0 650.0,362.0 650.0,362.6 650.0,366.2 650.0,364.8 649.9,365.1 649.9,365.6 649.9,366.8 649.9,367.4 649.9,367.9 649.9,369.4 649.8,370.5 649.8,371.5 649.8,372.1 649.7,373.4 649.7,373.7 649.6,374.5 649.5,375.3 649.5,376.7 649.3,377.4 649.2,378.3 649.1,379.3 648.7,381.1 648.4,382.2 647.9,383.2 647.5,383.0 646.3,384.0 645.0,384.2 643.6,384.7 642.1,383.7 640.6,383.4 639.2,383.8 637.8,383.7 636.4,384.4 635.0,385.1 633.6,385.5 632.2,385.7 630.8,386.7 630.1,387.0 629.5,387.4 628.9,388.8 628.3,389.8 628.0,390.4 627.6,390.8 627.3,391.9 627.1,392.5 626.9,393.4 626.7,398.9 626.5,395.0 626.3,397.5 626.1,397.6 625.9,402.1 625.7,399.2 625.6,399.9 625.5,401.1 625.4,401.4 625.3,402.3 625.1,403.6 625.0,404.2 625.0,404.8 624.9,405.9 624.8,406.1 624.7,407.5 624.6,407.6 624.5,409.1 624.5,409.8 624.4,410.5 624.3,411.6 624.2,412.7 624.2,413.5 624.1,414.4 624.1,415.1 624.0,415.7 623.9,418.8 623.9,417.5 623.8,418.2 623.8,419.3 623.7,420.1 623.7,420.9 623.6,421.9 623.5,422.6 623.5,423.6 623.4,424.4 623.4,425.1 623.3,425.8 623.3,427.1 623.2,427.8 623.2,429.0 623.1,429.0 623.1,430.5 623.0,431.4 623.0,431.8 623.0,433.2 622.9,433.9 622.9,434.9 622.8,435.5 622.8,436.1 622.8,437.3 622.7,438.3 622.7,439.0 622.6,440.2 622.6,440.4 622.6,441.5 622.5,442.1 622.5,442.9 622.5,444.3 622.4,444.9 622.4,445.3 622.4,446.7 622.4,446.9 622.3,447.8 622.3,448.9 622.3,449.6 622.2,450.6 622.2,451.2 622.2,452.3 622.2,453.0 622.1,454.3 622.1,454.7 622.1,455.8 622.1,457.0 622.0,457.0 622.0,457.9 622.0,459.5 622.0,459.7 621.9,460.8 621.9,461.7 621.9,462.2 621.9,463.1 621.9,464.0 621.8,468.4 621.8,466.2 621.8,467.3 621.8,468.0 621.8,469.0 621.7,469.5 621.7,470.0 621.7,471.3 621.7,472.3 621.7,473.0 621.6,474.0 621.6,474.9 621.6,475.7 621.6,476.1 621.6,477.5 621.5,478.1 621.5,479.2 621.5,479.1 621.5,480.7 621.5,481.6 621.4,481.8 621.4,483.2 621.4,483.7 621.4,484.7 621.4,485.1 621.4,486.0 621.3,487.1 621.3,487.9 621.3,488.6 621.3,489.4 621.3,490.6 621.2,490.8 621.2,492.1 621.2,493.2 621.2,493.7 621.2,495.0 621.2,495.5 621.1,496.4 621.1,497.3 621.1,502.7 621.1,498.7 621.1,499.5 621.0,500.1 621.0,500.8 621.0,502.0" fill="#c050ff" stroke="#c050ff" stroke-width="1.4"/>
<line x1="814.0" y1="198.0" x2="814.0" y2="210.0" stroke="#c050ff" stroke-width="2"/>
<polygon points="596.0,428.4 596.1,426.5 596.2,426.0 596.3,424.5 596.3,424.2 596.4,422.6 596.5,422.4 596.6,420.7 596.7,419.6 596.9,419.3 597.0,417.5 597.2,416.3 597.4,415.7 597.6,415.1 597.8,413.4 598.0,412.7 598.2,411.7 598.5,410.9 598.7,410.5 598.9,409.4 599.1,409.1 599.3,407.9 599.5,406.9 599.7,406.1 599.9,405.0 600.1,404.2 600.3,403.8 600.6,402.4 600.8,397.0 601.1,400.9 601.3,399.6 601.6,398.5 601.9,397.9 602.1,397.3 602.4,395.9 602.7,395.4 603.0,394.9 603.2,394.0 603.5,393.2 603.9,392.5 604.3,391.4 604.7,389.7 605.2,389.5 605.6,389.0 606.0,388.1 606.7,387.0 607.4,387.1 609.0,387.1 609.8,387.5 610.6,386.9 611.5,387.7 612.4,387.7 613.2,387.7 614.1,388.7 614.9,388.5 615.8,388.6 616.6,387.4 617.4,387.1 617.8,385.5 618.3,384.9 618.8,384.5 619.0,383.5 619.2,382.5 619.4,382.0 619.7,380.7 619.9,380.1 620.1,378.8 620.2,378.2 620.4,377.3 620.5,376.6 620.7,375.9 620.8,375.0 621.0,374.5 621.1,373.7 621.3,372.3 621.4,371.8 621.5,370.8 621.6,370.1 621.8,369.3 621.9,368.6 622.0,368.0 622.1,366.3 622.3,365.8 622.4,365.0 622.5,364.4 622.6,363.2 622.7,362.9 622.8,362.3 622.9,360.8 623.0,360.4 623.1,359.0 623.2,358.5 623.3,358.0 623.4,357.4 623.5,356.3 623.6,354.8 623.7,354.3 623.8,353.2 623.9,352.4 624.0,351.7 624.1,351.0 624.2,350.2 624.3,349.1 624.4,348.4 624.5,347.8 624.6,347.2 624.8,345.8 624.9,345.0 625.0,344.7 625.1,343.0 625.2,342.2 625.3,341.4 625.4,341.3 625.5,340.0 625.6,338.8 625.8,337.9 625.9,337.5 626.0,336.4 626.1,336.3 626.2,334.7 626.4,333.7 626.5,333.5 626.7,332.5 626.8,331.2 627.0,330.3 627.1,330.0 627.3,329.3 627.5,328.6 627.8,327.1 628.0,326.0 628.2,325.1 628.5,324.4 628.8,323.6 629.1,322.7 629.5,322.4 629.9,321.7 630.7,320.3 631.5,319.4 632.3,319.2 633.1,318.1 634.0,316.6 634.9,316.4 635.7,314.9 636.5,314.3 637.3,314.5 638.2,314.3 639.3,313.6 640.5,313.1 641.3,311.2 642.0,311.0 642.6,309.9 643.2,308.9 643.8,309.4 644.5,306.9 645.2,308.1 645.9,307.3 646.4,304.8 647.0,305.7 647.6,305.2 648.1,302.3 648.8,302.8 649.4,299.1 650.0,302.1 650.6,302.0 651.2,299.3 651.8,298.6 652.4,298.5 653.0,299.2 653.6,297.0 654.3,296.0 654.9,296.3 655.5,295.7 656.1,295.7 656.7,295.1 657.2,294.2 657.8,294.3 658.6,294.0 659.3,293.1 660.0,290.6 660.7,289.6 661.3,289.0 662.0,289.4 662.9,288.5 663.8,288.9 664.7,288.6 665.6,287.6 666.5,287.4 667.4,285.3 668.3,286.8 669.1,285.1 670.1,284.2 671.0,282.7 671.9,283.0 672.9,282.7 673.6,281.1 674.3,281.2 675.0,280.1 675.8,281.5 676.5,280.6 677.3,278.7 678.1,279.0 679.0,278.8 679.8,278.8 680.4,277.0 681.1,275.6 681.7,277.4 682.4,276.0 683.1,275.8 683.7,273.4 684.4,274.8 685.1,274.8 685.7,271.9 686.4,272.5 687.1,273.5 687.7,271.1 688.4,270.7 689.0,270.1 689.7,271.3 690.3,270.2 691.1,269.3 691.9,268.3 692.8,266.7 693.5,268.3 694.3,266.7 695.0,265.8 696.0,264.4 697.0,264.5 698.0,264.5 698.9,265.4 699.8,263.9 700.7,262.0 701.5,262.4 702.4,261.3 703.2,262.9 704.0,262.7 704.8,261.3 705.6,261.6 706.5,260.5 707.3,261.7 708.1,259.9 709.0,260.9 709.9,260.0 710.8,258.7 711.8,259.4 712.8,258.4 713.8,259.5 714.9,257.8 715.9,257.8 716.9,258.3 717.8,255.9 718.8,257.8 719.6,255.8 720.5,256.3 721.9,256.9 723.0,255.7 723.0,266.3 721.9,268.2 720.5,267.4 719.6,267.4 718.8,266.8 717.8,269.0 716.9,268.2 715.9,267.7 714.9,269.3 713.8,268.5 712.8,270.9 711.8,270.4 710.8,269.9 709.9,272.1 709.0,272.0 708.1,272.7 707.3,271.3 706.5,271.0 705.6,272.4 704.8,271.7 704.0,273.2 703.2,274.8 702.4,279.2 701.5,274.7 700.7,274.5 699.8,274.3 698.9,274.3 698.0,276.7 697.0,277.2 696.0,276.0 695.0,278.6 694.3,278.1 693.5,279.1 692.8,278.1 691.9,279.7 691.1,280.6 690.3,280.3 689.7,282.1 689.0,280.7 688.4,283.2 687.7,282.0 687.1,283.6 686.4,284.4 685.7,285.0 685.1,284.2 684.4,285.3 683.7,284.8 683.1,286.1 682.4,286.3 681.7,286.4 681.1,286.9 680.4,289.5 679.8,289.3 679.0,290.6 678.1,291.3 677.3,289.9 676.5,291.1 675.8,293.2 675.0,292.4 674.3,293.8 673.6,294.0 672.9,295.2 671.9,294.7 671.0,295.8 670.1,296.1 669.1,297.6 668.3,297.8 667.4,297.9 666.5,296.7 665.6,299.6 664.7,298.7 663.8,298.5 662.9,301.7 662.0,300.0 661.3,303.1 660.7,301.4 660.0,303.8 659.3,303.2 658.6,304.4 657.8,304.6 657.2,305.8 656.7,304.8 656.1,305.1 655.5,305.7 654.9,307.4 654.3,308.3 653.6,309.1 653.0,308.7 652.4,314.9 651.8,309.9 651.2,312.6 650.6,311.7 650.0,313.0 649.4,312.2 648.8,313.2 648.1,317.9 647.6,314.6 647.0,314.9 646.4,315.7 645.9,315.7 645.2,315.5 644.5,317.7 643.8,318.1 643.2,318.7 642.6,319.2 642.0,318.3 641.3,318.9 640.5,320.4 639.3,320.4 638.2,321.0 637.3,320.9 636.5,321.8 635.7,321.6 634.9,322.0 634.0,322.5 633.1,322.9 632.3,323.5 631.5,324.4 630.7,324.0 629.9,325.4 629.5,326.3 629.1,327.3 628.8,328.3 628.5,328.3 628.2,330.0 628.0,333.3 627.8,331.6 627.5,332.4 627.3,333.4 627.1,334.1 627.0,334.3 626.8,335.4 626.7,336.3 626.5,337.5 626.4,338.2 626.2,338.7 626.1,339.4 626.0,341.1 625.9,341.4 625.8,342.4 625.6,342.8 625.5,344.3 625.4,345.1 625.3,345.3 625.2,346.4 625.1,347.2 625.0,348.2 624.9,349.6 624.8,350.5 624.6,350.8 624.5,351.4 624.4,352.8 624.3,353.2 624.2,354.1 624.1,355.0 624.0,355.5 623.9,356.6 623.8,357.6 623.7,360.5 623.6,359.3 623.5,360.4 623.4,360.6 623.3,361.4 623.2,362.7 623.1,363.9 623.0,364.5 622.9,365.3 622.8,365.7 622.7,366.8 622.6,367.2 622.5,368.1 622.4,368.7 622.3,369.7 622.1,370.9 622.0,372.0 621.9,372.7 621.8,373.2 621.6,374.4 621.5,375.5 621.4,376.4 621.3,378.4 621.1,377.6 621.0,378.7 620.8,379.0 620.7,380.1 620.5,380.5 620.4,381.4 620.2,382.8 620.1,383.5 619.9,384.3 619.7,385.3 619.4,390.0 619.2,386.1 619.0,387.0 618.8,388.4 618.3,389.1 617.8,389.6 617.4,390.4 616.6,391.1 615.8,392.2 614.9,392.5 614.1,391.8 613.2,392.0 612.4,391.4 611.5,391.8 610.6,391.4 609.8,391.3 609.0,390.5 607.4,391.0 606.7,391.2 606.0,391.6 605.6,393.0 605.2,393.7 604.7,394.0 604.3,395.6 603.9,395.7 603.5,397.1 603.2,398.1 603.0,399.1 602.7,402.7 602.4,400.2 602.1,401.4 601.9,401.8 601.6,402.9 601.3,404.3 601.1,404.5 600.8,405.3 600.6,407.0 600.3,407.8 600.1,407.8 599.9,409.6 599.7,410.6 599.5,410.7 599.3,411.6 599.1,412.9 598.9,413.9 598.7,413.9 598.5,415.6 598.2,415.6 598.0,417.2 597.8,418.1 597.6,418.2 597.4,419.1 597.2,420.4 597.0,421.9 596.9,423.2 596.7,424.0 596.6,425.2 596.5,426.0 596.4,426.7 596.3,427.7 596.3,431.5 596.2,429.7 596.1,431.0 596.0,432.5" fill="#d0ff70" stroke="#d0ff70" stroke-width="1.4"/>
<line x1="723.5" y1="250.0" x2="723.5" y2="300.0" stroke="#d0ff70" stroke-width="1.5"/>
<polygon points="727.7,397.8 729.2,396.1 730.1,395.4 731.1,395.1 731.8,394.5 732.6,394.9 733.3,395.2 734.2,391.2 735.0,393.1 735.9,394.2 736.8,393.4 737.7,393.2 738.6,393.0 739.5,392.7 740.4,392.2 741.4,391.8 742.3,389.9 743.2,389.8 744.1,389.5 745.0,390.2 745.8,389.3 746.7,389.9 747.5,388.8 748.4,387.8 749.2,388.3 750.1,388.2 751.0,386.7 751.8,386.9 752.7,386.1 753.6,386.9 754.5,386.7 755.3,385.4 756.2,384.6 757.1,384.1 758.0,385.3 758.9,384.6 759.8,383.3 760.7,383.9 761.6,383.1 762.5,382.2 763.4,383.0 764.3,382.9 765.1,382.2 766.0,381.1 766.9,381.4 767.8,381.3 768.7,380.3 769.6,379.7 770.4,380.2 771.3,380.5 772.2,379.4 773.1,377.0 774.0,378.5 774.9,377.9 775.8,377.8 776.6,377.6 777.5,377.7 778.4,377.0 779.3,378.1 780.2,372.9 781.1,377.1 781.9,374.0 782.8,377.3 783.7,376.3 784.6,376.2 785.5,375.5 786.4,376.6 787.2,375.8 788.1,369.4 789.0,374.0 789.9,373.9 790.7,374.4 791.6,374.9 792.5,374.5 793.4,373.7 794.2,374.0 795.1,373.4 795.9,373.9 796.8,372.2 797.7,372.8 798.5,366.2 799.4,371.2 800.3,372.0 801.1,371.6 802.0,370.5 802.9,370.4 803.7,371.1 804.6,371.4 805.5,370.0 806.4,369.7 807.3,367.1 808.2,370.1 809.1,368.9 810.0,369.0 811.0,369.4 811.9,368.7 812.9,367.5 813.7,367.9 814.5,367.7 815.3,367.9 816.1,368.6 816.9,367.1 817.8,366.0 818.6,367.3 819.4,367.1 820.2,367.4 821.0,365.0 821.9,367.3 822.7,366.9 823.7,365.5 824.8,366.7 825.8,366.1 826.8,365.0 827.7,365.0 828.7,365.8 829.5,365.1 830.3,363.4 831.1,360.5 832.1,364.2 833.0,363.0 834.3,363.3 835.0,362.2 835.4,360.2 835.4,360.6 835.3,359.2 835.1,357.9 835.0,356.8 835.0,355.1 835.0,365.0 835.0,365.2 835.1,366.2 835.3,366.1 835.4,367.0 835.4,368.6 835.0,369.3 834.3,370.9 833.0,371.2 832.1,372.1 831.1,373.6 830.3,373.7 829.5,373.1 828.7,373.8 827.7,372.9 826.8,373.7 825.8,373.9 824.8,373.3 823.7,375.3 822.7,375.0 821.9,374.9 821.0,375.5 820.2,374.9 819.4,374.7 818.6,375.1 817.8,376.2 816.9,374.9 816.1,376.2 815.3,375.0 814.5,376.7 813.7,376.3 812.9,377.2 811.9,376.4 811.0,377.3 810.0,376.1 809.1,377.6 808.2,377.2 807.3,378.1 806.4,377.0 805.5,379.1 804.6,378.8 803.7,379.3 802.9,379.0 802.0,380.1 801.1,378.5 800.3,380.6 799.4,379.3 798.5,379.7 797.7,380.9 796.8,380.5 795.9,380.3 795.1,381.2 794.2,382.3 793.4,381.1 792.5,382.9 791.6,383.2 790.7,381.6 789.9,382.7 789.0,383.3 788.1,383.7 787.2,384.0 786.4,383.6 785.5,383.2 784.6,384.8 783.7,383.6 782.8,384.0 781.9,384.4 781.1,385.6 780.2,384.7 779.3,385.0 778.4,386.7 777.5,386.1 776.6,386.2 775.8,386.9 774.9,385.9 774.0,387.2 773.1,388.3 772.2,388.3 771.3,388.8 770.4,388.2 769.6,388.5 768.7,388.9 767.8,389.1 766.9,389.8 766.0,389.3 765.1,389.1 764.3,389.9 763.4,389.9 762.5,391.7 761.6,390.9 760.7,391.5 759.8,392.6 758.9,392.8 758.0,392.9 757.1,393.8 756.2,392.3 755.3,393.4 754.5,393.2 753.6,393.5 752.7,395.2 751.8,394.2 751.0,395.4 750.1,395.5 749.2,396.6 748.4,396.2 747.5,397.4 746.7,396.1 745.8,397.4 745.0,398.3 744.1,398.2 743.2,398.6 742.3,399.4 741.4,399.7 740.4,399.2 739.5,399.2 738.6,400.5 737.7,400.0 736.8,401.7 735.9,400.7 735.0,401.3 734.2,402.4 733.3,402.3 732.6,403.6 731.8,402.5 731.1,403.9 730.1,403.6 729.2,404.9 727.7,404.4" fill="#d0ff70" stroke="#d0ff70" stroke-width="1.4"/>
<polygon points="597.0,487.6 597.0,487.3 597.1,486.5 597.1,485.3 597.1,484.7 597.2,483.7 597.2,483.4 597.2,481.9 597.3,481.9 597.3,474.4 597.3,479.7 597.4,479.2 597.4,477.9 597.4,477.0 597.5,476.2 597.5,475.6 597.5,474.9 597.6,473.7 597.6,472.5 597.6,471.9 597.7,471.3 597.7,470.3 597.7,469.7 597.8,468.3 597.8,467.7 597.8,466.8 597.9,466.2 597.9,465.3 597.9,463.9 598.0,463.5 598.0,462.3 598.1,461.9 598.1,460.4 598.1,460.4 598.2,459.5 598.2,458.3 598.2,457.3 598.3,456.3 598.3,455.8 598.3,454.6 598.4,453.8 598.4,453.3 598.5,452.3 598.5,451.5 598.5,450.6 598.6,450.6 598.6,449.0 598.7,447.9 598.7,447.1 598.7,446.8 598.8,446.0 598.8,445.4 598.9,444.5 598.9,443.6 599.0,442.3 599.0,441.1 599.1,441.1 599.1,440.2 599.2,438.5 599.2,437.6 599.3,437.0 599.4,436.6 599.4,435.0 599.5,434.2 599.5,434.0 599.6,432.5 599.7,432.4 599.7,431.3 599.8,430.4 599.9,429.8 599.9,429.3 600.0,428.4 600.1,426.6 600.2,426.3 600.3,424.9 600.4,424.6 600.5,423.9 600.6,422.7 600.7,421.7 600.8,421.3 600.9,420.6 601.0,419.8 601.1,418.2 601.2,417.5 601.3,417.1 601.4,416.0 601.6,415.1 601.7,414.2 601.8,413.5 602.0,412.7 602.2,411.8 602.3,410.8 602.5,409.8 602.7,408.4 602.9,407.5 603.1,407.2 603.3,405.7 603.5,404.9 603.7,404.8 603.9,403.8 604.1,403.0 604.4,401.5 604.7,401.2 605.0,399.6 605.3,399.3 605.7,398.1 606.0,396.8 606.4,396.3 606.8,395.0 607.1,394.8 607.6,393.3 608.0,392.6 608.4,392.0 609.1,391.9 609.8,390.5 610.5,389.5 611.2,388.8 611.9,385.9 612.7,388.0 613.4,387.4 614.1,386.0 614.8,385.4 615.4,384.8 616.1,384.7 616.7,384.0 617.9,382.9 619.1,383.0 620.3,382.6 621.4,382.2 622.4,382.4 623.4,381.1 623.8,380.4 624.3,380.4 624.6,378.7 625.0,377.8 625.1,377.4 625.3,375.8 625.4,375.7 625.5,374.9 625.6,374.1 625.7,372.7 625.7,372.5 625.8,371.7 625.8,370.8 625.9,369.1 625.9,368.2 625.9,368.2 626.0,367.3 626.0,362.8 626.0,365.2 626.0,365.0 626.1,364.0 626.1,362.3 626.1,361.5 626.1,360.5 626.1,360.5 626.1,358.8 626.2,358.0 626.2,357.6 626.2,356.5 626.2,355.5 626.2,354.9 626.3,353.4 626.3,352.8 626.3,351.8 626.4,351.5 626.4,349.8 626.4,348.7 626.5,348.5 626.5,347.2 626.6,347.1 626.6,346.1 626.7,344.6 626.7,344.4 626.9,343.5 627.0,342.3 627.1,341.2 627.2,340.5 627.3,339.8 627.5,338.9 627.7,338.2 627.9,337.5 628.0,336.7 628.3,335.5 628.5,335.2 628.7,334.4 628.9,333.3 629.2,332.4 629.5,331.4 629.9,329.9 630.2,329.4 630.6,328.8 630.9,327.8 631.3,326.2 631.7,326.0 632.1,324.0 632.5,324.1 632.9,322.7 633.3,321.5 633.7,320.3 634.2,320.1 634.6,318.7 635.0,317.8 635.3,312.9 635.7,315.8 636.0,308.7 636.4,315.0 636.7,313.2 637.1,312.3 637.5,312.0 637.8,311.1 638.2,310.7 638.6,310.6 639.0,309.0 639.4,308.7 639.8,306.5 640.2,305.5 640.6,304.6 641.0,303.8 641.4,302.7 641.9,301.8 642.3,301.3 642.7,301.3 643.2,299.0 643.6,298.0 644.1,298.1 644.5,297.7 645.0,295.7 645.5,294.2 646.0,295.2 646.4,293.0 646.9,291.7 647.4,291.2 647.9,291.4 648.3,288.7 648.8,290.0 649.2,287.2 649.6,286.7 650.0,286.6 650.4,287.1 650.9,284.0 651.3,285.1 651.8,285.1 652.2,283.7 652.7,283.0 653.1,282.9 653.6,279.9 654.1,281.6 654.6,280.3 655.0,277.7 655.5,276.8 656.0,277.0 656.5,275.0 657.0,274.9 657.4,273.5 657.9,274.6 658.3,272.6 658.7,273.3 659.1,272.0 659.6,270.6 660.1,269.8 660.6,269.0 661.1,267.6 661.6,268.6 662.2,268.3 662.7,265.4 663.2,264.2 663.7,264.0 664.3,264.8 664.8,262.7 665.3,263.2 665.8,256.1 666.4,259.9 666.9,259.4 667.4,260.5 668.1,258.2 668.7,258.0 669.4,257.3 670.0,256.2 670.6,257.0 671.3,254.9 671.9,256.5 672.6,255.6 673.3,255.4 673.9,253.1 674.6,253.3 675.2,251.2 676.1,251.0 677.0,251.2 677.9,250.4 678.8,251.1 679.7,250.0 680.6,249.7 681.5,249.7 682.4,247.3 683.3,247.5 684.2,248.0 685.1,247.8 685.9,247.6 686.8,247.4 687.7,244.7 688.5,246.4 689.3,244.4 690.2,244.8 691.0,244.1 691.8,244.1 692.6,242.9 693.4,242.2 694.2,241.8 694.9,242.5 695.7,241.7 696.5,241.1 697.2,238.5 698.0,238.6 698.7,238.6 699.4,239.3 700.2,236.5 700.9,232.1 701.7,235.5 702.4,236.9 703.1,236.5 703.8,233.3 704.6,232.9 705.3,234.8 706.0,232.1 706.8,232.6 707.5,232.9 708.3,232.5 709.0,231.0 709.8,231.7 710.6,229.6 711.4,230.0 712.2,228.7 713.0,227.8 713.9,227.5 714.7,228.9 715.6,226.6 716.5,227.6 717.3,226.3 718.2,226.1 719.0,225.4 719.8,224.0 720.6,223.4 721.4,223.0 722.2,222.4 722.9,223.6 723.6,221.2 724.6,222.4 725.5,220.4 726.3,220.5 727.0,221.3 728.0,217.7 728.7,218.4 729.0,218.9 729.1,217.2 729.1,217.4 729.0,214.5 729.0,215.6 729.0,214.2 729.0,226.3 729.0,227.9 729.0,226.8 729.1,227.7 729.1,228.4 729.0,228.8 728.7,230.9 728.0,230.0 727.0,233.1 726.3,233.9 725.5,234.6 724.6,234.9 723.6,233.7 722.9,233.7 722.2,234.4 721.4,234.8 720.6,235.0 719.8,237.5 719.0,237.0 718.2,237.8 717.3,238.0 716.5,239.9 715.6,239.3 714.7,239.9 713.9,241.2 713.0,241.6 712.2,242.2 711.4,240.2 710.6,241.0 709.8,242.0 709.0,241.5 708.3,244.0 707.5,247.2 706.8,244.6 706.0,244.6 705.3,246.5 704.6,246.4 703.8,245.3 703.1,248.3 702.4,248.7 701.7,249.6 700.9,248.4 700.2,250.6 699.4,248.9 698.7,250.5 698.0,250.7 697.2,250.8 696.5,252.9 695.7,252.9 694.9,253.4 694.2,254.3 693.4,252.9 692.6,254.2 691.8,255.5 691.0,255.9 690.2,256.7 689.3,256.5 688.5,257.7 687.7,256.9 686.8,259.4 685.9,259.7 685.1,260.7 684.2,259.1 683.3,260.5 682.4,260.7 681.5,260.7 680.6,261.8 679.7,262.2 678.8,262.0 677.9,261.4 677.0,262.2 676.1,264.0 675.2,265.1 674.6,266.1 673.9,266.8 673.3,267.1 672.6,268.4 671.9,268.3 671.3,267.5 670.6,269.3 670.0,268.5 669.4,271.1 668.7,272.0 668.1,271.0 667.4,270.8 666.9,271.7 666.4,273.0 665.8,275.0 665.3,275.8 664.8,274.4 664.3,277.3 663.7,276.9 663.2,277.8 662.7,277.8 662.2,279.3 661.6,284.0 661.1,279.5 660.6,282.4 660.1,283.5 659.6,282.0 659.1,284.3 658.7,284.0 658.3,283.9 657.9,286.0 657.4,291.8 657.0,286.1 656.5,288.7 656.0,289.8 655.5,291.1 655.0,289.7 654.6,290.2 654.1,292.0 653.6,293.0 653.1,293.4 652.7,293.7 652.2,294.0 651.8,297.1 651.3,296.4 650.9,297.5 650.4,297.3 650.0,298.3 649.6,298.8 649.2,299.2 648.8,299.6 648.3,302.6 647.9,303.3 647.4,302.0 646.9,303.2 646.4,303.2 646.0,304.8 645.5,305.3 645.0,307.2 644.5,308.2 644.1,306.9 643.6,309.9 643.2,310.3 642.7,310.8 642.3,312.0 641.9,311.0 641.4,313.3 641.0,312.2 640.6,314.4 640.2,313.7 639.8,315.5 639.4,315.2 639.0,315.8 638.6,318.5 638.2,317.6 637.8,319.7 637.5,319.2 637.1,326.1 636.7,321.4 636.4,321.7 636.0,321.8 635.7,323.6 635.3,323.7 635.0,323.7 634.6,324.8 634.2,326.2 633.7,327.1 633.3,326.9 632.9,327.9 632.5,329.4 632.1,329.5 631.7,330.8 631.3,331.6 630.9,332.3 630.6,333.7 630.2,333.6 629.9,334.9 629.5,335.6 629.2,336.5 628.9,337.3 628.7,338.4 628.5,339.4 628.3,339.5 628.0,340.6 627.9,341.5 627.7,342.1 627.5,343.1 627.3,343.8 627.2,344.5 627.1,345.7 627.0,347.0 626.9,347.3 626.7,348.8 626.7,349.5 626.6,349.5 626.6,350.6 626.5,351.1 626.5,352.4 626.4,353.6 626.4,354.5 626.4,354.9 626.3,355.9 626.3,357.2 626.3,357.8 626.2,358.2 626.2,359.5 626.2,360.6 626.2,361.0 626.2,361.9 626.1,362.7 626.1,363.6 626.1,365.2 626.1,366.0 626.1,367.2 626.1,367.4 626.0,368.1 626.0,369.0 626.0,370.0 626.0,371.0 625.9,372.2 625.9,372.5 625.9,373.7 625.8,374.2 625.8,375.3 625.7,376.6 625.7,377.2 625.6,377.6 625.5,379.1 625.4,379.8 625.3,380.2 625.1,381.2 625.0,382.0 624.6,383.2 624.3,384.7 623.8,384.8 623.4,385.5 622.4,386.4 621.4,386.6 620.3,386.6 619.1,386.4 617.9,386.9 616.7,387.8 616.1,388.7 615.4,389.6 614.8,389.9 614.1,390.3 613.4,391.2 612.7,391.7 611.9,392.1 611.2,392.8 610.5,394.1 609.8,394.9 609.1,395.7 608.4,396.3 608.0,397.5 607.6,397.6 607.1,398.3 606.8,399.1 606.4,399.8 606.0,400.9 605.7,401.5 605.3,403.3 605.0,403.4 604.7,405.0 604.4,405.8 604.1,406.8 603.9,407.7 603.7,408.3 603.5,409.7 603.3,409.9 603.1,411.1 602.9,411.5 602.7,412.4 602.5,413.5 602.3,414.1 602.2,415.7 602.0,416.6 601.8,417.2 601.7,418.3 601.6,419.5 601.4,420.3 601.3,420.7 601.2,422.1 601.1,422.2 601.0,429.4 600.9,424.5 600.8,425.3 600.7,425.7 600.6,426.5 600.5,427.3 600.4,428.2 600.3,429.7 600.2,430.0 600.1,431.1 600.0,431.8 599.9,432.7 599.9,433.8 599.8,434.5 599.7,435.1 599.7,436.3 599.6,436.5 599.5,437.9 599.5,438.2 599.4,439.2 599.4,440.6 599.3,441.2 599.2,441.8 599.2,443.2 599.1,444.1 599.1,444.3 599.0,445.1 599.0,446.1 598.9,447.2 598.9,447.8 598.8,449.1 598.8,449.6 598.7,451.0 598.7,452.0 598.7,452.8 598.6,453.1 598.6,454.4 598.5,454.5 598.5,456.2 598.5,456.5 598.4,457.8 598.4,457.8 598.3,459.4 598.3,460.3 598.3,460.5 598.2,461.6 598.2,462.0 598.2,463.0 598.1,464.1 598.1,464.9 598.1,465.4 598.0,466.4 598.0,467.7 597.9,468.5 597.9,469.2 597.9,470.2 597.8,470.5 597.8,471.8 597.8,472.3 597.7,473.6 597.7,474.8 597.7,474.9 597.6,476.5 597.6,477.1 597.6,478.0 597.5,479.2 597.5,479.4 597.5,480.8 597.4,481.2 597.4,482.7 597.4,483.2 597.3,483.6 597.3,485.1 597.3,485.1 597.2,486.2 597.2,487.0 597.2,487.9 597.1,489.2 597.1,490.0 597.1,490.8 597.0,491.6 597.0,492.4" fill="#40c0ff" stroke="#40c0ff" stroke-width="1.4"/>
<line x1="721.3" y1="225.0" x2="721.3" y2="415.0" stroke="#40c0ff" stroke-width="1.4"/>
<line x1="727.7" y1="220.0" x2="727.7" y2="415.0" stroke="#40c0ff" stroke-width="1.4"/>
<line x1="732.3" y1="220.0" x2="732.3" y2="300.0" stroke="#40c0ff" stroke-width="1.4"/>
<line x1="734.0" y1="225.0" x2="734.0" y2="415.0" stroke="#40c0ff" stroke-width="1.4"/>
<polygon points="733.0,314.2 733.9,314.0 734.6,312.3 735.2,311.5 735.9,311.7 736.7,310.4 737.5,309.0 738.3,309.3 738.9,308.0 739.5,308.2 740.0,306.6 740.6,307.1 741.2,305.9 741.8,305.2 742.6,304.2 743.5,304.4 744.2,303.4 745.0,301.3 745.7,302.0 746.4,299.9 747.1,300.1 747.8,300.2 748.4,298.9 749.1,299.2 749.7,297.2 750.4,297.9 751.0,296.3 751.7,297.0 752.4,295.6 753.1,294.9 753.8,295.2 754.5,295.0 755.2,293.7 756.0,292.5 756.8,292.2 757.6,291.7 758.5,292.3 759.4,291.5 760.3,290.2 761.2,289.9 762.1,289.2 763.1,290.5 764.0,290.1 764.9,289.5 765.8,289.6 766.7,288.4 767.6,287.5 768.4,287.7 769.2,288.0 770.0,287.5 771.5,286.2 772.9,285.6 774.2,285.1 775.5,285.6 776.7,285.7 777.9,285.9 779.0,284.3 780.0,284.2 781.0,282.6 781.9,283.0 782.7,282.4 783.5,280.5 784.2,279.0 784.8,277.6 785.3,277.4 785.7,277.9 785.7,284.2 785.3,285.6 784.8,286.9 784.2,286.8 783.5,288.2 782.7,289.7 781.9,290.8 781.0,290.6 780.0,292.6 779.0,293.2 777.9,293.1 776.7,292.3 775.5,299.4 774.2,292.9 772.9,293.9 771.5,293.8 770.0,294.2 769.2,294.8 768.4,294.5 767.6,296.1 766.7,295.6 765.8,296.3 764.9,296.0 764.0,296.5 763.1,297.3 762.1,298.4 761.2,297.9 760.3,299.0 759.4,298.9 758.5,300.2 757.6,299.0 756.8,300.6 756.0,301.0 755.2,302.0 754.5,301.6 753.8,302.8 753.1,303.0 752.4,302.7 751.7,303.0 751.0,303.9 750.4,305.2 749.7,306.3 749.1,305.5 748.4,306.8 747.8,306.4 747.1,307.9 746.4,308.7 745.7,310.1 745.0,309.4 744.2,310.0 743.5,311.5 742.6,312.9 741.8,312.1 741.2,312.8 740.6,313.7 740.0,314.1 739.5,316.1 738.9,316.5 738.3,316.4 737.5,318.1 736.7,318.2 735.9,318.8 735.2,319.9 734.6,320.1 733.9,321.7 733.0,321.8" fill="#40c0ff" stroke="#40c0ff" stroke-width="1.4"/>
<polyline points="589.0,498.5 722.4,498.5 722.4,480.0 727.7,387.5" fill="none" stroke="#ff4040" stroke-width="1.6" stroke-linejoin="miter" />
<polygon points="727.7,383.9 727.8,382.6 728.0,381.5 728.2,380.1 728.4,377.8 728.6,377.3 728.9,375.5 729.3,374.1 729.8,373.6 730.3,372.4 730.9,372.0 731.5,370.2 732.2,368.9 733.0,368.4 733.9,368.9 734.9,366.9 736.0,367.5 737.4,365.3 738.2,365.8 739.0,364.6 740.0,364.7 740.9,365.1 741.8,364.2 742.8,363.5 743.7,364.2 744.6,363.2 745.5,363.9 746.3,362.1 747.8,362.1 748.8,363.2 748.8,370.1 747.8,370.4 746.3,371.2 745.5,370.5 744.6,371.7 743.7,370.9 742.8,372.3 741.8,372.8 740.9,372.2 740.0,372.8 739.0,372.5 738.2,374.3 737.4,373.4 736.0,374.3 734.9,374.3 733.9,376.3 733.0,376.1 732.2,378.2 731.5,377.8 730.9,378.4 730.3,380.4 729.8,381.4 729.3,382.1 728.9,382.9 728.6,385.2 728.4,387.5 728.2,387.8 728.0,389.5 727.8,390.2 727.7,392.3" fill="#ff4040" stroke="#ff4040" stroke-width="1.4"/>
<line x1="749.8" y1="318.0" x2="749.8" y2="376.0" stroke="#ff4040" stroke-width="1.6"/>
<polygon points="749.8,315.0 750.0,314.4 750.2,313.1 750.4,312.0 750.7,309.5 751.0,309.2 751.3,307.3 751.7,305.8 752.0,304.4 752.3,304.2 752.6,302.7 752.8,302.3 753.1,301.7 753.5,300.9 753.9,300.4 754.4,299.6 755.0,299.1 755.4,298.0 755.8,297.2 756.3,295.6 756.7,295.7 757.3,294.6 757.8,289.8 758.4,293.0 758.9,291.1 759.5,289.7 760.1,289.8 760.6,288.6 761.2,286.3 761.7,285.4 762.2,286.4 762.6,284.2 763.0,283.9 763.7,283.1 764.2,281.6 764.7,281.3 765.1,279.7 765.5,278.1 765.9,278.1 766.4,275.8 767.0,274.4 767.4,275.3 767.7,274.6 768.2,273.0 768.6,272.7 769.0,272.2 769.5,271.2 770.0,269.5 770.4,269.0 770.9,268.4 771.4,266.3 771.9,266.0 772.3,264.8 772.8,264.6 773.2,263.6 774.0,260.6 774.7,259.9 775.2,260.7 775.8,259.5 776.2,258.6 776.8,256.7 777.4,256.7 778.1,255.7 779.0,255.3 780.1,251.8 780.8,251.5 781.4,250.9 782.1,250.1 782.8,249.5 783.6,245.4 784.3,249.2 785.1,248.8 785.8,246.6 786.6,246.4 787.3,246.1 788.0,244.8 788.7,243.8 789.4,244.8 790.0,242.1 790.5,242.3 791.1,242.3 792.0,239.0 792.8,238.5 793.6,236.8 794.5,238.0 795.0,236.5 795.4,234.1 796.0,234.3 796.6,226.2 797.3,233.4 798.0,230.9 798.8,232.0 799.7,230.6 800.3,229.7 801.0,228.8 801.6,230.3 802.3,229.4 803.0,226.9 803.7,228.6 804.5,226.1 805.2,225.1 806.0,225.0 806.7,225.5 807.5,218.0 808.3,222.9 809.0,221.2 809.8,223.1 810.6,220.1 811.3,220.6 812.1,220.0 812.8,218.8 813.6,220.1 814.3,219.0 815.0,220.2 815.7,217.4 816.4,216.5 817.0,216.7 818.0,215.6 819.0,214.1 819.9,216.3 820.9,214.5 821.8,213.4 822.8,212.9 823.8,214.2 824.7,212.1 825.5,211.0 826.2,210.2 826.9,212.1 827.6,211.6 828.4,209.4 829.2,208.0 830.0,210.3 830.9,208.5 831.7,207.8 832.4,206.7 833.2,208.6 833.9,206.9 834.6,204.5 835.5,205.6 836.3,205.5 837.1,205.0 837.9,205.2 838.6,204.0 839.4,201.7 840.1,202.0 840.8,203.5 841.5,202.3 842.2,201.4 843.0,202.4 843.7,199.7 844.4,201.3 845.1,199.8 845.9,199.8 846.6,199.4 847.3,198.2 848.0,197.3 848.8,196.4 849.5,197.3 850.1,196.9 850.8,195.5 851.5,195.5 852.2,196.2 853.0,193.5 853.8,194.9 854.5,194.6 855.3,192.7 856.2,192.2 857.1,192.2 858.0,190.3 858.7,190.7 859.4,191.1 860.2,190.8 861.0,189.8 861.9,190.4 862.7,187.6 863.4,187.9 864.7,186.9 865.9,186.8 867.1,186.7 868.5,185.3 869.2,184.6 870.0,186.1 870.9,184.7 871.8,184.5 872.7,184.9 873.7,183.9 874.7,183.8 875.7,183.0 876.7,183.6 877.8,182.4 878.8,181.2 879.8,182.3 880.7,181.8 881.7,181.3 882.6,180.0 883.4,180.4 884.2,179.8 885.0,177.9 886.4,178.2 887.7,179.5 888.9,179.2 889.9,176.1 890.9,177.3 891.7,176.6 892.4,177.0 893.0,176.2 893.0,188.1 892.4,188.8 891.7,189.1 890.9,188.2 889.9,190.0 888.9,189.8 887.7,189.6 886.4,189.7 885.0,192.8 884.2,192.4 883.4,191.4 882.6,191.5 881.7,193.1 880.7,192.3 879.8,195.3 878.8,195.0 877.8,195.5 876.7,194.6 875.7,195.1 874.7,197.5 873.7,196.8 872.7,197.0 871.8,197.6 870.9,199.1 870.0,196.7 869.2,197.7 868.5,200.1 867.1,200.2 865.9,200.9 864.7,199.2 863.4,201.3 862.7,200.8 861.9,201.7 861.0,203.3 860.2,202.2 859.4,203.5 858.7,203.5 858.0,205.3 857.1,204.6 856.2,207.2 855.3,206.9 854.5,206.1 853.8,208.6 853.0,207.9 852.2,208.0 851.5,209.1 850.8,209.1 850.1,208.6 849.5,208.6 848.8,210.3 848.0,209.9 847.3,212.0 846.6,212.7 845.9,212.2 845.1,213.6 844.4,212.0 843.7,214.8 843.0,214.6 842.2,215.4 841.5,215.8 840.8,216.2 840.1,215.7 839.4,216.6 838.6,216.4 837.9,218.4 837.1,216.8 836.3,217.4 835.5,219.6 834.6,219.6 833.9,221.1 833.2,221.4 832.4,222.5 831.7,221.3 830.9,222.9 830.0,223.5 829.2,223.9 828.4,224.1 827.6,223.7 826.9,225.6 826.2,225.6 825.5,227.6 824.7,226.2 823.8,225.6 822.8,226.7 821.8,231.3 820.9,230.7 819.9,229.6 819.0,232.1 818.0,231.0 817.0,230.6 816.4,231.1 815.7,234.0 815.0,233.1 814.3,234.6 813.6,238.3 812.8,240.2 812.1,233.9 811.3,237.9 810.6,235.6 809.8,236.7 809.0,238.3 808.3,238.2 807.5,240.5 806.7,239.9 806.0,239.5 805.2,239.1 804.5,242.4 803.7,249.8 803.0,244.3 802.3,243.9 801.6,244.7 801.0,243.3 800.3,245.6 799.7,245.1 798.8,244.8 798.0,246.3 797.3,249.3 796.6,249.1 796.0,248.6 795.4,248.2 795.0,250.4 794.5,249.2 793.6,252.6 792.8,254.4 792.0,260.8 791.1,255.6 790.5,257.3 790.0,264.1 789.4,257.0 788.7,257.3 788.0,258.6 787.3,260.5 786.6,258.8 785.8,258.8 785.1,261.7 784.3,260.9 783.6,261.1 782.8,263.9 782.1,263.8 781.4,262.4 780.8,263.3 780.1,265.9 779.0,266.4 778.1,267.6 777.4,268.7 776.8,269.1 776.2,268.0 775.8,270.4 775.2,269.6 774.7,272.1 774.0,271.4 773.2,274.7 772.8,273.7 772.3,275.2 771.9,277.0 771.4,276.8 770.9,276.3 770.4,278.6 770.0,280.2 769.5,280.2 769.0,281.9 768.6,281.1 768.2,282.8 767.7,284.3 767.4,283.3 767.0,283.5 766.4,284.9 765.9,286.8 765.5,288.3 765.1,287.6 764.7,288.4 764.2,289.6 763.7,295.5 763.0,291.2 762.6,293.4 762.2,293.0 761.7,293.9 761.2,296.0 760.6,297.1 760.1,296.8 759.5,298.6 758.9,302.8 758.4,300.6 757.8,301.7 757.3,302.2 756.7,302.6 756.3,303.4 755.8,304.8 755.4,304.3 755.0,304.9 754.4,306.3 753.9,306.7 753.5,308.7 753.1,309.1 752.8,308.6 752.6,310.2 752.3,311.0 752.0,311.3 751.7,313.0 751.3,312.9 751.0,315.2 750.7,316.0 750.4,317.3 750.2,319.8 750.0,320.2 749.8,321.1" fill="#ff4040" stroke="#ff4040" stroke-width="1.4"/>
<line x1="847.0" y1="205.0" x2="847.0" y2="406.0" stroke="#ff4040" stroke-width="1.6"/>
<line x1="874.4" y1="188.0" x2="874.4" y2="463.0" stroke="#ff4040" stroke-width="1.6"/>
<line x1="888.0" y1="164.0" x2="888.0" y2="498.0" stroke="#ff4040" stroke-width="1.6"/>
<line x1="892.8" y1="164.0" x2="892.8" y2="498.0" stroke="#ff4040" stroke-width="1.6"/>
<line x1="589.6" y1="275.0" x2="589.6" y2="502.0" stroke="#00ff00" stroke-width="1.6"/>
<polygon points="594.0,437.8 594.1,436.7 594.1,435.3 594.2,434.3 594.3,434.2 594.3,429.9 594.4,431.8 594.4,430.8 594.5,429.5 594.5,428.7 594.6,428.4 594.7,426.9 594.7,427.0 594.8,425.7 594.8,424.4 594.9,423.5 594.9,423.5 595.0,422.5 595.0,421.3 595.1,421.1 595.1,419.4 595.2,419.3 595.2,418.3 595.3,416.9 595.3,416.9 595.4,416.0 595.4,414.5 595.5,413.7 595.5,413.1 595.6,412.4 595.6,411.6 595.7,411.6 595.7,410.2 595.8,409.8 595.8,408.8 595.9,407.4 596.0,406.8 596.0,405.8 596.1,404.8 596.2,404.5 596.2,404.1 596.3,402.3 596.4,401.6 596.4,400.7 596.5,400.1 596.6,393.7 596.7,398.1 596.8,397.8 596.8,397.1 596.9,396.0 597.0,395.0 597.1,394.1 597.2,392.9 597.3,392.6 597.5,392.0 597.6,391.0 597.7,389.2 597.9,388.6 598.1,388.1 598.3,387.0 598.7,385.7 599.0,383.9 599.7,382.6 600.4,381.4 601.2,381.4 602.1,380.7 603.0,380.3 604.0,378.9 604.6,377.5 605.2,377.5 605.9,376.3 606.5,376.6 607.3,375.0 608.0,375.3 608.8,374.4 609.6,373.4 610.3,373.5 611.1,372.1 611.8,371.1 612.4,370.8 612.8,370.3 613.3,368.9 613.7,368.6 614.0,367.7 614.3,366.4 614.6,365.9 614.8,364.4 614.9,363.3 615.1,362.3 615.3,361.7 615.3,361.7 615.4,360.6 615.5,359.3 615.6,358.3 615.7,358.0 615.7,356.5 615.8,356.1 615.8,355.6 615.9,354.1 615.9,353.9 616.0,353.2 616.0,351.4 616.0,351.3 616.0,350.2 616.1,348.9 616.1,348.2 616.1,347.9 616.1,347.1 616.1,345.6 616.2,345.4 616.2,344.2 616.2,343.4 616.2,341.8 616.2,341.1 616.2,336.6 616.3,339.8 616.3,339.4 616.3,336.4 616.3,337.2 616.3,336.4 616.4,334.8 616.4,334.6 616.4,332.9 616.4,332.4 616.5,331.9 616.6,330.4 616.6,330.0 616.7,328.6 616.8,328.1 616.9,327.5 616.9,325.7 617.0,325.6 617.1,324.2 617.2,323.0 617.3,323.1 617.4,321.2 617.5,321.4 617.6,319.7 617.8,319.1 618.0,318.3 618.2,316.7 618.3,315.6 618.6,314.4 618.8,314.4 619.0,312.8 619.3,311.6 619.6,310.8 619.9,309.3 620.1,308.7 620.4,308.2 620.6,307.0 620.9,306.9 621.1,305.7 621.4,305.0 621.7,303.3 621.9,302.8 622.2,302.5 622.5,301.3 622.8,300.0 623.1,299.7 623.5,299.3 623.8,297.5 624.1,296.9 624.5,296.6 624.8,293.6 625.1,295.2 625.5,293.5 625.8,292.2 626.2,292.0 626.6,290.3 626.9,289.4 627.3,289.4 627.6,287.5 627.9,287.7 628.2,286.3 628.4,285.7 628.7,282.1 629.0,283.6 629.3,283.5 629.6,281.6 629.9,281.7 630.2,279.9 630.5,279.4 630.8,278.1 631.1,278.1 631.5,271.4 631.8,275.2 632.1,275.1 632.4,274.0 632.7,272.5 633.1,271.6 633.4,271.4 633.8,271.4 634.1,269.1 634.5,268.7 634.8,268.1 635.2,266.6 635.5,266.7 635.9,264.8 636.3,264.2 636.6,263.9 637.0,261.9 637.4,261.4 637.8,261.3 638.2,260.0 638.6,259.8 639.0,258.6 639.4,258.5 639.9,257.5 640.3,256.6 640.7,255.7 641.1,255.1 641.6,254.9 642.0,252.8 642.5,252.3 642.9,250.9 643.4,250.8 643.9,250.8 644.3,248.4 644.8,249.3 645.3,248.1 645.8,247.1 646.2,246.3 646.7,244.9 647.2,243.9 647.7,244.0 648.2,242.9 648.7,242.6 649.3,241.0 650.0,241.6 650.6,240.0 651.3,238.5 651.9,239.5 652.6,238.3 653.3,236.9 653.9,236.7 654.6,236.6 655.3,235.4 655.9,233.8 656.6,234.0 657.3,231.2 657.9,232.6 658.6,231.2 659.3,230.0 660.0,231.2 660.7,230.9 661.4,230.2 662.1,227.1 662.8,226.6 663.5,227.9 664.3,226.6 665.0,225.0 665.7,225.1 666.5,223.5 667.2,223.7 668.0,225.3 668.7,224.3 669.5,223.5 670.3,221.8 671.1,221.1 671.9,216.1 672.8,220.6 673.6,218.7 674.4,220.4 675.3,218.6 676.2,217.8 677.1,217.1 677.9,216.0 678.8,217.2 679.7,215.5 680.6,215.3 681.5,215.5 682.4,212.3 683.2,211.3 684.1,212.8 685.0,213.0 685.9,212.1 686.7,210.4 687.6,211.9 688.4,210.0 689.2,208.0 690.0,207.4 690.8,209.0 691.6,208.9 692.4,209.1 693.1,206.6 693.9,208.1 694.7,208.3 695.4,204.4 696.2,207.0 696.9,206.3 698.0,203.7 699.1,203.9 700.2,199.7 701.3,204.0 702.3,202.7 703.4,204.4 704.4,203.2 705.5,200.4 706.5,200.1 707.5,202.8 708.5,200.8 709.5,200.4 710.4,200.2 711.3,200.8 712.2,197.9 713.1,199.3 714.0,197.7 714.9,195.9 715.8,198.9 716.7,196.2 717.5,197.6 718.4,196.9 719.3,195.8 720.2,196.2 721.1,194.8 722.0,191.8 722.9,193.1 723.8,194.3 724.8,192.3 725.7,193.9 726.6,191.3 727.5,193.3 728.5,192.6 729.4,192.1 730.3,192.9 731.3,191.4 732.2,189.4 733.2,192.6 734.1,190.2 735.1,190.2 736.0,190.3 737.0,190.9 737.9,188.2 738.9,189.4 739.8,188.4 740.7,188.0 741.7,185.2 742.6,185.4 743.5,185.0 744.4,183.5 745.4,185.5 746.4,183.8 747.4,182.7 748.4,184.4 749.1,182.5 749.9,180.6 750.6,180.7 751.4,181.5 752.2,182.4 753.0,181.9 753.9,180.0 754.8,180.5 755.7,178.5 756.5,179.3 757.3,179.2 758.0,177.5 758.8,178.7 759.6,176.5 760.4,176.2 761.3,178.3 762.1,175.6 762.9,177.2 763.8,177.4 764.6,177.2 765.4,174.3 766.3,173.7 767.1,176.3 767.9,173.5 768.7,172.7 769.5,169.1 770.3,175.0 771.1,172.6 771.9,173.4 772.8,171.8 773.7,170.9 774.7,173.0 775.4,170.6 776.2,171.8 777.0,169.3 778.0,171.3 778.9,169.5 779.7,171.4 780.5,168.6 781.9,168.7 783.0,167.2 783.9,166.3 784.7,167.5 785.4,167.3 786.0,166.2 786.0,181.8 785.4,185.8 784.7,180.2 783.9,182.0 783.0,183.8 781.9,184.8 780.5,184.7 779.7,185.1 778.9,185.6 778.0,186.2 777.0,186.5 776.2,185.4 775.4,185.8 774.7,186.1 773.7,185.7 772.8,187.9 771.9,186.3 771.1,187.5 770.3,189.3 769.5,187.8 768.7,188.3 767.9,189.0 767.1,188.8 766.3,190.8 765.4,188.8 764.6,188.5 763.8,190.2 762.9,192.4 762.1,191.1 761.3,191.1 760.4,192.1 759.6,193.5 758.8,193.0 758.0,194.3 757.3,194.0 756.5,193.5 755.7,193.6 754.8,192.2 753.9,196.0 753.0,193.1 752.2,193.5 751.4,194.9 750.6,195.8 749.9,197.2 749.1,196.9 748.4,198.7 747.4,199.5 746.4,197.6 745.4,198.2 744.4,201.1 743.5,201.4 742.6,199.2 741.7,201.3 740.7,200.2 739.8,201.8 738.9,202.3 737.9,202.0 737.0,204.9 736.0,203.4 735.1,204.1 734.1,205.0 733.2,203.9 732.2,203.7 731.3,206.7 730.3,204.8 729.4,205.5 728.5,205.1 727.5,206.3 726.6,207.5 725.7,206.8 724.8,208.5 723.8,206.5 722.9,208.8 722.0,210.1 721.1,208.6 720.2,211.1 719.3,209.4 718.4,211.9 717.5,209.3 716.7,211.6 715.8,211.4 714.9,210.6 714.0,210.8 713.1,213.9 712.2,213.2 711.3,213.9 710.4,215.0 709.5,216.6 708.5,216.5 707.5,217.4 706.5,215.1 705.5,218.1 704.4,215.3 703.4,217.1 702.3,216.5 701.3,218.4 700.2,220.1 699.1,219.6 698.0,219.0 696.9,218.6 696.2,219.3 695.4,222.3 694.7,222.7 693.9,221.0 693.1,223.2 692.4,220.9 691.6,223.7 690.8,223.3 690.0,221.8 689.2,222.9 688.4,224.9 687.6,225.0 686.7,224.9 685.9,226.9 685.0,226.1 684.1,227.6 683.2,226.3 682.4,228.4 681.5,226.7 680.6,228.7 679.7,230.1 678.8,230.7 677.9,230.8 677.1,229.2 676.2,230.4 675.3,230.0 674.4,233.6 673.6,233.1 672.8,232.1 671.9,233.2 671.1,235.5 670.3,235.7 669.5,236.1 668.7,236.5 668.0,235.5 667.2,237.3 666.5,237.1 665.7,237.5 665.0,236.9 664.3,239.7 663.5,238.8 662.8,241.4 662.1,241.3 661.4,240.2 660.7,242.7 660.0,247.0 659.3,241.3 658.6,243.3 657.9,242.5 657.3,248.7 656.6,245.2 655.9,245.6 655.3,249.8 654.6,245.9 653.9,252.8 653.3,247.4 652.6,249.2 651.9,252.8 651.3,249.2 650.6,251.1 650.0,250.2 649.3,252.4 648.7,253.0 648.2,253.7 647.7,255.0 647.2,258.4 646.7,255.2 646.2,256.5 645.8,256.2 645.3,257.6 644.8,258.3 644.3,259.4 643.9,258.9 643.4,260.4 642.9,260.1 642.5,261.4 642.0,261.2 641.6,262.5 641.1,263.2 640.7,263.6 640.3,263.7 639.9,264.5 639.4,265.1 639.0,267.4 638.6,267.5 638.2,272.3 637.8,269.5 637.4,270.4 637.0,271.5 636.6,271.4 636.3,272.1 635.9,273.6 635.5,274.5 635.2,275.3 634.8,274.6 634.5,276.1 634.1,277.0 633.8,278.5 633.4,278.2 633.1,279.2 632.7,279.9 632.4,280.9 632.1,281.9 631.8,282.5 631.5,284.2 631.1,284.0 630.8,285.4 630.5,287.0 630.2,286.5 629.9,288.9 629.6,289.0 629.3,289.8 629.0,290.5 628.7,290.8 628.4,292.5 628.2,292.4 627.9,293.2 627.6,294.5 627.3,295.2 626.9,295.9 626.6,297.1 626.2,298.3 625.8,299.3 625.5,300.2 625.1,300.3 624.8,300.9 624.5,301.7 624.1,303.1 623.8,303.4 623.5,304.7 623.1,305.5 622.8,305.7 622.5,306.7 622.2,307.3 621.9,308.5 621.7,309.5 621.4,309.2 621.1,310.1 620.9,311.4 620.6,311.5 620.4,312.6 620.1,313.8 619.9,314.5 619.6,315.3 619.3,317.2 619.0,318.2 618.8,319.1 618.6,320.0 618.3,320.5 618.2,321.3 618.0,322.4 617.8,324.4 617.6,325.3 617.5,330.4 617.4,327.0 617.3,328.0 617.2,328.9 617.1,329.3 617.0,330.3 616.9,330.4 616.9,331.5 616.8,333.2 616.7,333.1 616.6,334.6 616.6,334.8 616.5,336.8 616.4,336.9 616.4,338.2 616.4,339.4 616.4,340.5 616.3,341.2 616.3,341.8 616.3,342.2 616.3,344.1 616.3,345.1 616.2,344.7 616.2,345.7 616.2,346.7 616.2,347.9 616.2,348.9 616.2,352.6 616.1,350.4 616.1,351.6 616.1,351.7 616.1,352.8 616.1,353.8 616.0,354.3 616.0,355.4 616.0,356.4 616.0,357.1 615.9,358.2 615.9,359.0 615.8,360.1 615.8,360.7 615.7,361.9 615.7,362.2 615.6,363.3 615.5,364.6 615.4,364.5 615.3,365.5 615.3,366.6 615.1,368.2 614.9,368.0 614.8,369.7 614.6,370.2 614.3,371.1 614.0,372.5 613.7,373.0 613.3,373.9 612.8,375.0 612.4,376.0 611.8,375.8 611.1,377.5 610.3,378.0 609.6,378.3 608.8,378.8 608.0,379.8 607.3,379.9 606.5,380.3 605.9,382.0 605.2,382.3 604.6,383.0 604.0,383.9 603.0,385.2 602.1,385.6 601.2,385.9 600.4,387.2 599.7,388.0 599.0,388.6 598.7,390.7 598.3,390.9 598.1,392.0 597.9,393.5 597.7,393.9 597.6,395.2 597.5,395.7 597.3,397.4 597.2,398.2 597.1,399.3 597.0,399.9 596.9,400.1 596.8,401.1 596.8,402.1 596.7,402.7 596.6,404.4 596.5,405.5 596.4,405.9 596.4,406.1 596.3,407.1 596.2,408.4 596.2,408.9 596.1,410.6 596.0,411.5 596.0,412.3 595.9,412.5 595.8,413.6 595.8,414.2 595.7,414.9 595.7,415.6 595.6,416.4 595.6,417.9 595.5,418.7 595.5,418.6 595.4,420.2 595.4,420.7 595.3,421.2 595.3,422.3 595.2,427.5 595.2,424.5 595.1,424.7 595.1,424.9 595.0,426.8 595.0,427.2 594.9,428.1 594.9,428.5 594.8,430.0 594.8,430.6 594.7,434.6 594.7,431.5 594.6,432.8 594.5,433.2 594.5,435.2 594.4,436.2 594.4,436.3 594.3,437.3 594.3,438.6 594.2,439.4 594.1,440.1 594.1,441.2 594.0,442.1" fill="#00ff00" stroke="#00ff00" stroke-width="1.4"/>
<line x1="778.3" y1="180.0" x2="778.3" y2="498.0" stroke="#00ff00" stroke-width="1.6"/>
<line x1="784.7" y1="185.0" x2="784.7" y2="432.0" stroke="#00ff00" stroke-width="1.3"/>
<polygon points="589.5,497.5 589.6,496.5 589.6,496.4 589.7,489.7 589.7,494.6 589.8,493.8 589.8,492.5 589.9,492.1 589.9,491.4 590.0,490.0 590.1,489.1 590.1,488.3 590.2,487.7 590.2,487.3 590.3,485.6 590.3,485.3 590.4,483.1 590.4,483.2 590.5,483.1 590.6,482.2 590.6,480.8 590.7,480.5 590.7,478.8 590.8,478.0 590.8,477.2 590.9,476.6 590.9,476.0 591.0,475.0 591.1,474.3 591.1,473.2 591.2,472.3 591.2,471.6 591.3,470.5 591.3,470.2 591.4,469.3 591.4,468.2 591.5,464.4 591.6,466.2 591.6,466.0 591.7,465.3 591.7,464.4 591.8,462.9 591.8,462.4 591.9,461.7 591.9,458.7 592.0,460.0 592.1,459.1 592.1,458.6 592.2,457.3 592.2,456.5 592.3,455.9 592.3,454.9 592.4,454.3 592.4,453.9 592.5,452.9 592.6,451.7 592.6,450.9 592.7,450.6 592.7,449.2 592.8,448.2 592.9,447.3 592.9,446.8 593.0,446.3 593.1,445.6 593.1,444.3 593.2,443.6 593.2,442.6 593.3,441.4 593.4,440.6 593.4,439.7 593.5,439.3 593.6,438.7 593.6,437.9 593.7,436.5 593.8,436.5 593.8,434.8 593.9,434.8 594.0,433.9 594.1,427.4 594.1,432.3 594.2,430.9 594.3,426.0 594.4,429.6 594.4,428.3 594.5,427.4 594.6,426.7 594.7,426.2 594.8,422.8 594.9,423.7 594.9,423.6 595.0,422.5 595.1,421.4 595.2,420.8 595.3,420.1 595.4,418.7 595.5,417.4 595.6,416.6 595.7,415.9 595.8,414.9 595.9,414.2 596.0,413.1 596.1,412.6 596.2,411.9 596.3,411.4 596.5,409.7 596.6,409.2 596.7,408.0 596.8,407.4 597.0,406.9 597.1,406.2 597.2,404.8 597.3,403.7 597.5,403.3 597.6,402.5 597.8,402.1 597.9,400.3 598.1,399.5 598.3,397.7 598.4,398.4 598.6,397.7 598.8,396.1 599.0,395.6 599.3,395.0 599.5,393.6 599.8,392.5 600.1,392.0 600.4,391.4 600.7,389.7 601.2,389.1 601.6,387.8 602.1,387.6 602.6,386.1 603.2,385.9 603.7,384.9 604.8,383.7 605.8,383.6 606.9,382.3 608.0,377.2 609.1,381.7 610.3,381.5 611.5,382.5 612.7,383.3 613.9,383.5 615.0,383.3 615.9,382.6 616.2,381.1 616.4,380.3 616.7,380.0 616.8,378.5 616.9,378.3 617.0,377.4 617.2,375.8 617.3,375.0 617.3,374.7 617.4,373.4 617.4,373.2 617.5,371.6 617.6,371.2 617.6,369.7 617.7,368.9 617.7,368.5 617.7,367.2 617.8,366.2 617.8,364.9 617.8,364.4 617.9,364.3 617.9,363.5 617.9,362.2 617.9,361.6 618.0,360.6 618.0,359.3 618.0,358.4 618.0,357.6 618.0,356.7 618.1,356.6 618.1,355.8 618.1,354.4 618.1,353.3 618.1,352.5 618.1,352.2 618.2,351.0 618.2,349.4 618.2,349.4 618.2,348.5 618.2,347.9 618.2,346.8 618.2,340.2 618.3,340.5 618.3,344.1 618.3,343.7 618.3,342.9 618.3,341.5 618.3,340.7 618.3,339.9 618.4,339.4 618.4,338.1 618.4,338.1 618.4,336.4 618.5,336.2 618.5,335.5 618.5,334.5 618.5,333.1 618.6,332.6 618.6,331.9 618.7,330.7 618.7,329.2 618.8,328.9 618.9,328.1 619.0,326.9 619.1,325.9 619.3,325.2 619.5,324.7 619.7,325.0 620.0,325.4 620.5,325.8 621.1,325.0 621.6,324.2 622.0,322.6 622.3,322.2 622.6,321.4 622.9,320.0 623.1,319.8 623.4,318.7 623.7,317.5 624.0,316.8 624.2,316.0 624.5,314.6 624.8,314.1 625.0,312.8 625.3,312.2 625.6,311.6 625.8,310.3 626.1,309.5 626.4,309.6 626.6,308.2 626.9,307.7 627.2,306.9 627.5,305.8 627.8,304.3 628.0,303.1 628.3,303.5 628.5,302.6 628.8,301.4 629.0,300.8 629.3,299.6 629.5,298.5 629.8,297.7 630.1,297.5 630.3,296.2 630.6,296.2 630.9,295.4 631.1,294.7 631.4,293.0 631.7,292.8 632.0,291.7 632.3,291.4 632.6,289.7 632.9,289.5 633.2,288.4 633.6,287.6 633.9,286.4 634.3,284.8 634.6,285.3 635.0,283.5 635.4,282.2 635.7,282.0 636.1,280.6 636.4,280.1 636.8,279.9 637.1,279.0 637.5,275.9 637.9,276.8 638.2,277.4 638.6,272.0 639.1,274.6 639.5,274.8 640.0,272.6 640.5,272.2 641.0,271.0 641.4,271.1 641.9,269.7 642.4,269.4 642.9,268.9 643.3,268.1 643.8,267.2 644.3,265.9 644.8,265.8 645.2,264.5 645.7,263.3 646.2,262.0 646.7,261.5 647.2,261.9 647.6,255.2 648.1,259.7 648.6,259.7 649.1,258.6 649.5,256.8 650.0,257.5 650.5,256.3 650.9,254.9 651.4,254.3 651.9,253.5 652.3,253.0 652.8,252.7 653.3,250.8 653.8,250.1 654.2,249.3 654.7,249.4 655.2,247.8 655.6,248.8 656.2,246.2 656.9,246.7 657.5,245.9 658.1,244.0 658.8,244.6 659.4,243.1 660.0,241.3 660.6,242.3 661.2,241.4 661.9,238.8 662.5,238.3 663.1,237.7 663.8,236.3 664.4,235.9 665.0,236.5 665.6,234.3 666.2,233.7 666.9,232.6 667.5,233.2 668.1,232.4 668.8,232.0 669.4,230.6 670.0,230.6 670.6,229.1 671.2,227.4 671.9,228.2 672.5,225.7 673.1,225.9 673.8,226.6 674.4,218.7 675.0,223.1 675.6,224.6 676.2,224.0 676.9,223.0 677.5,221.7 678.1,221.1 678.8,219.7 679.4,219.5 680.0,220.2 680.6,217.9 681.3,216.9 681.9,216.9 682.5,215.9 683.2,217.1 683.8,215.7 684.5,214.6 685.1,214.3 685.8,213.5 686.5,208.7 687.1,212.8 687.8,211.8 688.4,212.4 689.0,211.6 689.7,211.0 690.3,209.0 690.9,209.1 691.5,207.1 692.4,208.0 693.3,207.5 694.2,205.5 695.0,204.1 695.8,203.9 696.5,202.5 697.2,202.1 697.8,200.9 698.5,194.6 699.1,199.8 699.7,198.7 700.2,199.0 700.9,197.1 701.5,195.8 702.1,190.1 702.8,196.2 703.5,195.3 704.3,195.2 705.1,194.0 706.0,192.2 707.0,193.4 708.0,191.8 708.8,190.8 709.6,189.0 710.4,190.2 711.2,189.5 712.0,188.7 712.8,190.5 713.7,188.9 714.6,188.8 715.4,189.1 716.3,181.0 717.2,187.1 718.0,185.7 718.9,183.1 719.7,187.4 720.6,185.7 721.3,184.3 722.1,184.5 722.9,177.9 724.0,185.7 725.0,183.7 725.9,182.4 726.8,182.7 727.6,183.4 728.5,183.4 729.2,181.2 730.0,180.5 730.7,182.3 731.4,181.5 732.7,179.2 734.1,178.9 735.5,177.9 736.2,176.8 737.0,178.9 737.8,176.1 738.5,175.9 739.3,177.6 740.0,176.8 741.5,174.9 742.3,175.3 743.1,174.0 743.9,176.1 744.6,175.7 745.5,173.3 746.3,176.0 747.2,173.7 748.1,172.5 749.0,174.3 750.0,172.8 751.0,172.1 752.1,173.9 753.2,171.4 754.4,172.2 755.2,170.5 755.9,170.9 756.7,170.4 757.6,172.0 758.4,163.5 759.2,169.1 760.0,171.8 760.9,168.9 761.7,171.2 762.5,168.9 763.4,170.9 764.2,168.9 765.0,169.3 765.8,167.8 766.6,169.3 767.4,167.2 768.2,167.3 769.0,168.3 769.8,167.0 770.6,162.6 771.4,165.6 772.3,165.8 773.1,160.7 774.0,165.0 774.8,165.6 775.7,162.5 776.5,165.4 777.4,166.8 778.2,165.4 779.1,164.4 779.9,164.1 780.7,165.9 781.5,163.3 782.6,164.9 783.6,165.2 784.5,164.2 785.4,163.4 786.8,164.3 786.8,175.7 785.4,180.9 784.5,176.3 783.6,177.4 782.6,177.6 781.5,177.7 780.7,179.3 779.9,179.1 779.1,180.5 778.2,179.2 777.4,180.0 776.5,178.5 775.7,180.6 774.8,179.0 774.0,181.5 773.1,180.5 772.3,181.3 771.4,182.0 770.6,182.3 769.8,183.1 769.0,182.2 768.2,181.1 767.4,181.4 766.6,183.0 765.8,183.8 765.0,182.6 764.2,182.9 763.4,188.6 762.5,185.2 761.7,184.2 760.9,185.8 760.0,184.3 759.2,186.1 758.4,187.0 757.6,186.0 756.7,185.9 755.9,186.8 755.2,187.6 754.4,185.8 753.2,187.1 752.1,186.7 751.0,188.5 750.0,187.7 749.0,188.4 748.1,188.0 747.2,188.3 746.3,188.5 745.5,189.3 744.6,191.9 743.9,194.6 743.1,191.4 742.3,191.1 741.5,191.0 740.0,190.8 739.3,193.9 738.5,192.6 737.8,191.6 737.0,194.3 736.2,193.9 735.5,192.4 734.1,195.5 732.7,194.2 731.4,198.0 730.7,196.6 730.0,197.7 729.2,196.7 728.5,199.5 727.6,197.0 726.8,198.5 725.9,197.9 725.0,200.9 724.0,200.7 722.9,201.9 722.1,199.5 721.3,202.9 720.6,202.6 719.7,202.4 718.9,202.3 718.0,204.1 717.2,201.8 716.3,204.5 715.4,204.7 714.6,202.9 713.7,203.0 712.8,204.3 712.0,205.1 711.2,203.9 710.4,203.7 709.6,205.9 708.8,206.9 708.0,207.8 707.0,206.4 706.0,207.8 705.1,206.9 704.3,207.1 703.5,210.4 702.8,210.5 702.1,211.7 701.5,212.0 700.9,212.1 700.2,212.4 699.7,213.1 699.1,214.3 698.5,213.7 697.8,215.4 697.2,217.1 696.5,218.3 695.8,218.5 695.0,218.7 694.2,221.7 693.3,219.6 692.4,219.9 691.5,221.6 690.9,221.0 690.3,222.7 689.7,222.9 689.0,224.6 688.4,223.3 687.8,225.0 687.1,226.5 686.5,226.5 685.8,227.4 685.1,226.2 684.5,226.5 683.8,227.8 683.2,227.3 682.5,227.6 681.9,228.4 681.3,232.9 680.6,229.2 680.0,230.9 679.4,231.6 678.8,231.5 678.1,233.3 677.5,232.6 676.9,235.1 676.2,235.2 675.6,236.0 675.0,235.0 674.4,235.2 673.8,236.6 673.1,237.4 672.5,238.5 671.9,239.2 671.2,240.3 670.6,240.8 670.0,239.6 669.4,240.4 668.8,243.2 668.1,242.6 667.5,242.7 666.9,244.2 666.2,244.2 665.6,244.6 665.0,246.3 664.4,246.2 663.8,246.8 663.1,249.0 662.5,248.7 661.9,250.1 661.2,250.9 660.6,250.9 660.0,253.0 659.4,252.2 658.8,253.8 658.1,254.6 657.5,254.5 656.9,258.3 656.2,256.0 655.6,258.5 655.2,259.2 654.7,258.4 654.2,260.1 653.8,259.4 653.3,260.1 652.8,261.6 652.3,261.6 651.9,262.9 651.4,264.3 650.9,263.9 650.5,264.1 650.0,265.7 649.5,265.3 649.1,267.6 648.6,267.8 648.1,267.6 647.6,268.2 647.2,268.8 646.7,270.5 646.2,271.7 645.7,271.3 645.2,272.4 644.8,273.3 644.3,274.4 643.8,275.0 643.3,275.0 642.9,276.7 642.4,277.2 641.9,277.0 641.4,278.4 641.0,279.7 640.5,279.9 640.0,280.8 639.5,281.0 639.1,282.3 638.6,283.6 638.2,283.2 637.9,285.8 637.5,285.6 637.1,286.4 636.8,287.1 636.4,287.1 636.1,287.7 635.7,289.5 635.4,289.2 635.0,290.0 634.6,290.5 634.3,291.7 633.9,292.2 633.6,293.5 633.2,294.4 632.9,296.0 632.6,296.7 632.3,297.0 632.0,297.5 631.7,298.2 631.4,299.4 631.1,299.6 630.9,300.7 630.6,301.6 630.3,302.2 630.1,302.9 629.8,303.8 629.5,304.5 629.3,305.7 629.0,306.0 628.8,307.0 628.5,307.6 628.3,308.7 628.0,309.2 627.8,309.9 627.5,314.2 627.2,312.3 626.9,312.1 626.6,313.3 626.4,314.5 626.1,315.3 625.8,315.5 625.6,320.0 625.3,317.1 625.0,318.8 624.8,319.5 624.5,319.9 624.2,321.1 624.0,321.6 623.7,322.5 623.4,323.3 623.1,325.2 622.9,324.7 622.6,326.2 622.3,326.7 622.0,327.8 621.6,328.1 621.1,329.6 620.5,329.6 620.0,329.8 619.7,329.3 619.5,328.8 619.3,329.6 619.1,330.8 619.0,331.9 618.9,332.0 618.8,332.8 618.7,333.9 618.7,335.9 618.6,335.7 618.6,336.7 618.5,337.5 618.5,338.4 618.5,339.4 618.5,340.5 618.4,341.7 618.4,342.0 618.4,343.0 618.4,344.5 618.3,344.5 618.3,346.0 618.3,346.3 618.3,349.1 618.3,348.4 618.3,348.6 618.3,349.6 618.2,350.7 618.2,350.9 618.2,352.5 618.2,353.1 618.2,354.3 618.2,354.6 618.2,355.4 618.1,356.0 618.1,357.0 618.1,357.9 618.1,359.4 618.1,359.9 618.1,360.7 618.0,361.8 618.0,362.9 618.0,363.0 618.0,363.9 618.0,365.1 617.9,366.0 617.9,366.7 617.9,367.8 617.9,369.1 617.8,369.3 617.8,370.7 617.8,371.7 617.7,372.3 617.7,372.9 617.7,374.2 617.6,375.0 617.6,375.7 617.5,378.2 617.4,377.4 617.4,378.1 617.3,378.9 617.3,380.0 617.2,380.4 617.0,381.4 616.9,382.6 616.8,383.7 616.7,384.4 616.4,387.9 616.2,385.7 615.9,386.7 615.0,388.4 613.9,388.7 612.7,387.7 611.5,387.2 610.3,386.6 609.1,385.8 608.0,386.2 606.9,387.3 605.8,388.0 604.8,388.8 603.7,390.0 603.2,389.9 602.6,391.1 602.1,392.3 601.6,392.8 601.2,393.7 600.7,394.8 600.4,395.2 600.1,396.6 599.8,397.2 599.5,398.2 599.3,399.6 599.0,400.5 598.8,400.9 598.6,402.1 598.4,402.9 598.3,403.8 598.1,404.7 597.9,405.8 597.8,406.7 597.6,407.2 597.5,407.6 597.3,408.9 597.2,409.1 597.1,409.9 597.0,411.4 596.8,411.9 596.7,412.5 596.6,413.5 596.5,415.2 596.3,415.1 596.2,416.3 596.1,417.5 596.0,417.7 595.9,418.9 595.8,420.0 595.7,420.2 595.6,421.2 595.5,422.4 595.4,423.5 595.3,424.1 595.2,425.2 595.1,426.1 595.0,426.8 594.9,427.9 594.9,428.7 594.8,429.8 594.7,431.0 594.6,431.1 594.5,432.5 594.4,433.4 594.4,434.2 594.3,434.8 594.2,435.5 594.1,436.6 594.1,437.2 594.0,438.6 593.9,438.7 593.8,439.9 593.8,441.0 593.7,441.8 593.6,442.8 593.6,443.1 593.5,443.6 593.4,445.3 593.4,445.4 593.3,446.1 593.2,446.8 593.2,448.5 593.1,450.7 593.1,450.0 593.0,450.8 592.9,451.6 592.9,452.3 592.8,453.1 592.7,454.0 592.7,454.4 592.6,455.5 592.6,456.6 592.5,457.5 592.4,458.3 592.4,459.6 592.3,460.2 592.3,460.5 592.2,461.1 592.2,462.7 592.1,462.7 592.1,463.8 592.0,464.9 591.9,465.7 591.9,466.7 591.8,467.2 591.8,468.1 591.7,468.6 591.7,469.1 591.6,470.5 591.6,471.0 591.5,472.4 591.4,472.6 591.4,473.8 591.3,474.2 591.3,475.7 591.2,476.3 591.2,476.7 591.1,477.9 591.1,479.2 591.0,479.2 590.9,480.4 590.9,481.5 590.8,481.8 590.8,483.0 590.7,483.5 590.7,484.4 590.6,485.6 590.6,486.4 590.5,486.8 590.4,488.3 590.4,489.2 590.3,490.1 590.3,490.5 590.2,491.7 590.2,492.5 590.1,493.0 590.1,494.3 590.0,494.6 589.9,495.8 589.9,497.1 589.8,497.6 589.8,497.9 589.7,498.9 589.7,499.9 589.6,500.5 589.6,501.6 589.5,502.0" fill="#ffffff" stroke="#ffffff" stroke-width="1.4"/>
<polyline points="786.8,170.0 787.0,152.0" fill="none" stroke="#ffffff" stroke-width="1.8" stroke-linejoin="miter" />
<line x1="772.0" y1="165.0" x2="772.0" y2="300.0" stroke="#ffffff" stroke-width="1.4"/>
<line x1="776.3" y1="165.0" x2="776.3" y2="416.0" stroke="#ffffff" stroke-width="1.4"/>
<line x1="782.5" y1="165.0" x2="782.5" y2="498.0" stroke="#ffffff" stroke-width="1.4"/>
<line x1="786.8" y1="165.0" x2="786.8" y2="498.0" stroke="#ffffff" stroke-width="1.4"/>
<polygon points="789.0,384.1 789.2,384.2 789.4,382.4 789.7,382.1 790.0,380.9 790.2,378.7 790.4,377.8 790.6,378.6 790.9,376.3 791.1,375.1 791.4,374.2 791.6,373.5 791.9,372.5 792.2,372.2 792.5,370.3 792.8,369.2 793.1,369.7 793.5,367.4 793.8,367.2 794.2,366.2 794.7,365.4 795.3,364.2 796.0,363.4 796.7,363.8 797.5,362.0 798.3,361.2 799.2,360.9 800.2,360.9 801.1,359.7 802.0,360.1 803.0,359.5 803.9,359.1 804.7,358.9 805.6,358.3 807.0,359.4 808.0,358.6 808.0,365.5 807.0,365.4 805.6,366.2 804.7,365.7 803.9,366.1 803.0,366.3 802.0,367.0 801.1,367.2 800.2,367.3 799.2,368.7 798.3,368.4 797.5,370.3 796.7,369.5 796.0,370.0 795.3,370.9 794.7,372.8 794.2,374.0 793.8,374.7 793.5,374.7 793.1,375.9 792.8,376.9 792.5,378.6 792.2,379.3 791.9,380.3 791.6,381.8 791.4,382.5 791.1,383.8 790.9,384.7 790.6,384.1 790.4,386.0 790.2,386.6 790.0,387.9 789.7,388.5 789.4,389.3 789.2,391.0 789.0,391.3" fill="#00ff00" stroke="#00ff00" stroke-width="1.4"/>
<polygon points="806.8,359.8 806.8,358.9 806.8,357.3 806.8,356.3 806.7,355.3 806.7,354.6 806.7,354.2 806.7,352.8 806.6,352.3 806.6,350.8 806.6,350.3 806.5,348.6 806.5,348.3 806.5,347.3 806.5,346.1 806.4,345.3 806.4,338.6 806.4,344.3 806.4,343.3 806.3,341.8 806.3,340.0 806.3,339.9 806.3,339.3 806.3,338.5 806.2,337.1 806.2,337.2 806.2,335.5 806.2,334.7 806.2,335.0 806.2,333.5 806.2,333.2 806.2,331.5 806.2,331.0 806.2,329.8 806.2,329.4 806.2,328.7 806.2,327.7 806.2,326.2 806.2,326.3 806.3,324.5 806.3,324.8 806.3,322.9 806.3,322.5 806.4,322.1 806.4,320.2 806.5,320.2 806.5,318.7 806.6,318.5 806.7,316.8 806.7,316.5 806.8,315.6 806.9,315.3 807.1,313.3 807.2,313.5 807.3,311.4 807.5,310.8 807.6,310.0 807.8,308.8 808.0,308.9 808.2,308.3 808.3,307.4 808.5,305.8 808.7,305.9 809.0,305.0 809.2,303.1 809.4,303.2 809.7,301.5 809.9,301.5 810.2,300.1 810.5,292.8 810.8,297.4 811.1,297.4 811.4,296.9 811.7,296.0 812.1,295.0 812.4,294.0 812.7,293.0 813.0,291.4 813.3,291.2 813.6,288.3 813.9,287.8 814.2,288.3 814.5,287.7 814.7,287.3 815.0,285.6 815.3,284.6 815.6,284.2 815.8,283.7 816.1,282.2 816.3,282.0 816.7,280.5 817.0,279.8 817.3,278.5 817.6,278.1 818.0,277.6 818.3,275.6 818.6,274.9 818.9,273.7 819.3,272.9 819.6,272.9 819.9,272.3 820.3,271.2 820.6,269.8 821.0,267.7 821.3,268.9 821.7,267.9 822.1,265.9 822.5,265.3 822.9,263.8 823.3,263.3 823.7,263.3 824.0,262.4 824.4,261.2 824.7,259.6 825.0,259.5 825.4,259.2 825.7,257.8 826.1,252.8 826.4,256.0 826.8,255.5 827.2,253.8 827.5,253.3 827.9,252.0 828.3,252.8 828.7,250.6 829.1,249.8 829.4,248.8 829.8,248.5 830.2,247.6 830.6,246.2 831.0,247.0 831.4,244.6 831.8,244.3 832.2,242.8 832.6,242.8 833.1,241.7 833.5,241.6 833.9,240.4 834.3,239.7 834.7,233.5 835.2,235.2 835.6,238.4 836.0,235.9 836.6,235.3 837.1,235.1 837.7,233.4 838.3,233.0 838.9,231.8 839.5,230.6 840.1,231.7 840.7,225.2 841.3,229.3 841.9,227.9 842.5,227.4 843.1,226.7 843.7,227.1 844.3,225.9 845.0,224.5 845.6,225.2 846.3,224.5 846.9,222.7 847.6,223.0 848.2,214.6 848.9,220.6 849.6,219.1 850.3,218.4 851.0,219.8 851.7,218.0 852.5,217.1 853.2,217.9 853.8,217.2 854.4,216.5 855.0,215.0 855.6,214.4 856.2,210.5 856.9,212.3 857.5,213.6 858.1,212.4 858.7,212.3 859.4,210.6 860.0,211.1 860.6,211.0 861.3,211.0 861.9,209.1 862.5,202.8 863.1,207.9 864.0,207.4 864.8,200.8 865.6,203.7 866.3,204.8 867.1,204.3 867.9,205.7 868.6,203.0 869.3,203.6 870.0,204.0 870.6,201.6 871.3,201.9 871.9,200.4 872.8,199.4 873.7,200.5 874.5,199.5 875.4,199.9 876.1,194.5 876.9,198.1 877.7,196.1 878.5,197.5 879.2,195.3 880.0,196.0 880.7,195.7 881.5,192.4 882.2,193.9 883.0,192.6 883.7,194.2 884.5,191.9 885.8,193.3 887.0,191.4 888.2,191.4 889.6,189.3 890.4,190.7 891.1,190.0 892.0,188.1 892.9,187.6 893.6,187.9 894.3,188.1 895.0,187.7 895.8,185.8 896.7,186.7 897.5,185.8 898.2,183.6 898.9,184.8 899.6,183.3 900.3,183.0 901.0,181.8 901.6,180.9 902.2,181.2 902.8,180.6 903.4,180.6 904.1,178.9 904.7,178.2 905.4,177.8 906.0,178.9 906.7,170.5 907.4,175.4 908.0,177.1 908.7,174.5 909.4,175.4 910.1,173.6 910.7,172.9 911.4,167.8 912.1,173.9 912.8,172.7 913.4,171.9 914.1,170.6 914.8,171.6 915.4,169.1 916.1,169.4 916.8,168.2 917.4,167.9 918.1,167.0 918.7,167.1 919.4,167.8 920.0,167.9 920.8,165.1 921.6,166.0 922.4,163.8 923.2,158.0 924.0,164.9 924.8,163.3 925.6,161.8 926.4,163.5 927.2,161.0 928.0,161.8 928.9,162.0 929.7,161.4 930.5,153.5 931.3,159.9 932.1,159.4 932.9,157.0 933.7,158.2 934.5,155.5 935.3,155.7 936.1,154.9 936.9,156.7 937.7,156.3 938.5,155.2 939.2,153.3 940.0,154.2 940.7,153.3 941.5,154.1 942.2,152.7 942.9,153.1 943.6,152.7 944.3,150.7 945.0,151.0 945.9,151.2 946.8,149.8 947.7,148.5 948.6,147.6 949.5,147.6 950.4,147.4 951.3,146.6 952.2,147.0 953.1,146.2 953.9,146.7 954.7,144.2 955.6,145.8 956.3,144.6 957.1,142.8 957.9,143.5 958.9,143.9 959.9,142.7 960.8,142.3 961.7,140.4 963.0,140.3 963.0,150.4 961.7,152.2 960.8,151.9 959.9,154.1 958.9,153.3 957.9,152.8 957.1,154.6 956.3,156.0 955.6,156.3 954.7,156.2 953.9,156.7 953.1,155.6 952.2,156.3 951.3,158.5 950.4,158.5 949.5,159.4 948.6,158.8 947.7,158.6 946.8,160.8 945.9,159.6 945.0,161.1 944.3,161.8 943.6,161.3 942.9,162.6 942.2,162.5 941.5,163.7 940.7,164.6 940.0,164.3 939.2,165.2 938.5,165.4 937.7,166.2 936.9,166.6 936.1,165.9 935.3,168.3 934.5,167.1 933.7,168.8 932.9,168.0 932.1,170.4 931.3,170.3 930.5,169.8 929.7,170.8 928.9,170.7 928.0,171.8 927.2,172.2 926.4,173.7 925.6,172.6 924.8,172.8 924.0,173.2 923.2,175.7 922.4,176.4 921.6,176.6 920.8,176.8 920.0,176.5 919.4,176.5 918.7,177.9 918.1,179.7 917.4,179.3 916.8,179.8 916.1,180.3 915.4,181.0 914.8,179.9 914.1,181.0 913.4,182.3 912.8,183.3 912.1,182.3 911.4,183.6 910.7,185.3 910.1,185.2 909.4,185.8 908.7,186.7 908.0,185.8 907.4,186.3 906.7,188.6 906.0,189.5 905.4,188.9 904.7,190.3 904.1,190.7 903.4,190.8 902.8,189.8 902.2,191.2 901.6,191.5 901.0,192.3 900.3,193.9 899.6,194.2 898.9,194.9 898.2,193.5 897.5,195.6 896.7,196.3 895.8,197.5 895.0,196.9 894.3,197.8 893.6,197.5 892.9,198.8 892.0,198.2 891.1,198.9 890.4,199.7 889.6,200.0 888.2,202.2 887.0,202.7 885.8,202.1 884.5,203.3 883.7,202.9 883.0,204.1 882.2,204.5 881.5,204.6 880.7,205.2 880.0,205.5 879.2,205.4 878.5,206.3 877.7,206.8 876.9,208.5 876.1,209.2 875.4,210.1 874.5,208.6 873.7,209.3 872.8,210.7 871.9,211.7 871.3,212.2 870.6,213.5 870.0,213.8 869.3,213.8 868.6,214.8 867.9,214.3 867.1,215.3 866.3,217.0 865.6,216.8 864.8,216.8 864.0,217.1 863.1,219.8 862.5,220.2 861.9,221.0 861.3,220.8 860.6,220.8 860.0,222.3 859.4,221.1 858.7,222.3 858.1,222.5 857.5,224.2 856.9,224.3 856.2,225.3 855.6,224.6 855.0,226.5 854.4,225.8 853.8,225.4 853.2,226.5 852.5,227.6 851.7,228.3 851.0,229.0 850.3,229.3 849.6,231.2 848.9,232.2 848.2,232.6 847.6,232.3 846.9,232.8 846.3,234.1 845.6,235.2 845.0,233.9 844.3,234.3 843.7,235.7 843.1,237.1 842.5,238.4 841.9,238.2 841.3,239.5 840.7,239.0 840.1,240.7 839.5,240.5 838.9,241.7 838.3,242.6 837.7,243.1 837.1,243.2 836.6,245.0 836.0,244.3 835.6,246.2 835.2,246.1 834.7,248.1 834.3,248.2 833.9,248.8 833.5,249.9 833.1,250.8 832.6,251.3 832.2,252.2 831.8,252.7 831.4,253.4 831.0,253.3 830.6,254.7 830.2,255.4 829.8,255.9 829.4,257.6 829.1,258.3 828.7,259.0 828.3,258.5 827.9,260.3 827.5,260.4 827.2,262.4 826.8,262.3 826.4,264.2 826.1,264.9 825.7,265.5 825.4,265.1 825.0,266.7 824.7,267.0 824.4,268.7 824.0,269.2 823.7,268.7 823.3,270.9 822.9,271.5 822.5,271.5 822.1,272.7 821.7,274.3 821.3,275.3 821.0,276.0 820.6,276.8 820.3,277.1 819.9,278.3 819.6,278.7 819.3,280.1 818.9,280.1 818.6,281.5 818.3,282.1 818.0,283.0 817.6,283.4 817.3,285.5 817.0,286.1 816.7,287.0 816.3,287.5 816.1,288.0 815.8,288.6 815.6,290.2 815.3,290.4 815.0,292.2 814.7,293.1 814.5,293.5 814.2,293.9 813.9,294.8 813.6,295.9 813.3,296.7 813.0,297.2 812.7,298.7 812.4,299.9 812.1,299.9 811.7,301.6 811.4,302.5 811.1,302.7 810.8,303.2 810.5,304.0 810.2,305.3 809.9,306.7 809.7,306.9 809.4,307.9 809.2,309.7 809.0,310.4 808.7,310.5 808.5,311.8 808.3,312.5 808.2,313.0 808.0,314.0 807.8,314.6 807.6,315.3 807.5,317.0 807.3,317.8 807.2,318.8 807.1,320.1 806.9,319.8 806.8,321.6 806.7,321.5 806.7,323.4 806.6,323.7 806.5,325.1 806.5,325.0 806.4,326.4 806.4,327.0 806.3,328.5 806.3,328.3 806.3,330.2 806.3,330.3 806.2,330.8 806.2,332.2 806.2,332.7 806.2,333.5 806.2,334.2 806.2,335.3 806.2,336.5 806.2,337.6 806.2,338.1 806.2,339.4 806.2,340.6 806.2,341.4 806.2,341.4 806.2,342.2 806.2,343.4 806.3,343.6 806.3,344.7 806.3,346.3 806.3,347.2 806.3,348.0 806.4,348.1 806.4,349.3 806.4,350.1 806.4,351.5 806.5,351.8 806.5,353.1 806.5,354.4 806.5,354.7 806.6,356.3 806.6,357.0 806.6,357.1 806.7,359.1 806.7,359.8 806.7,360.0 806.7,360.7 806.8,362.3 806.8,362.7 806.8,363.7 806.8,365.3" fill="#00ff00" stroke="#00ff00" stroke-width="1.4"/>
<polyline points="786.8,498.0 788.0,498.0 791.0,480.0 794.2,423.4 797.4,398.0 801.6,381.0" fill="none" stroke="#ffffff" stroke-width="1.8" stroke-linejoin="miter" />
<polygon points="801.6,378.0 802.2,373.9 802.8,376.4 803.6,375.4 804.6,374.5 805.6,374.0 806.9,373.4 808.3,373.2 809.2,374.3 810.0,373.1 811.0,373.8 812.1,372.6 812.9,373.2 813.8,373.4 814.7,373.5 815.6,368.8 816.6,373.2 817.5,373.1 818.5,372.6 819.5,373.3 820.5,374.9 821.5,374.8 822.5,374.9 823.5,374.9 824.3,374.4 825.2,375.0 826.1,374.6 827.3,374.7 828.4,374.3 829.2,375.6 830.0,376.2 830.0,382.8 829.2,383.3 828.4,383.5 827.3,381.6 826.1,381.7 825.2,382.1 824.3,382.4 823.5,382.3 822.5,381.1 821.5,381.5 820.5,381.1 819.5,381.1 818.5,381.4 817.5,381.8 816.6,381.6 815.6,380.3 814.7,380.3 813.8,381.5 812.9,380.1 812.1,380.3 811.0,381.7 810.0,381.6 809.2,379.9 808.3,381.8 806.9,382.1 805.6,382.9 804.6,383.5 803.6,382.6 802.8,383.1 802.2,384.4 801.6,384.6" fill="#ffffff" stroke="#ffffff" stroke-width="1.4"/>
<polygon points="831.0,377.0 831.0,375.9 831.0,375.2 831.0,373.8 831.0,373.4 830.9,371.9 830.9,371.2 830.9,370.2 830.9,369.5 830.9,368.2 830.9,367.6 830.8,366.1 830.8,366.1 830.8,365.0 830.8,364.0 830.8,362.5 830.8,361.7 830.8,361.8 830.7,360.9 830.7,359.4 830.7,356.7 830.7,355.0 830.7,357.0 830.7,355.4 830.7,355.4 830.7,353.8 830.7,353.8 830.7,353.0 830.6,352.1 830.6,351.2 830.6,349.1 830.6,349.9 830.6,348.2 830.6,347.1 830.6,347.0 830.6,345.3 830.6,345.6 830.6,344.2 830.7,339.2 830.7,342.8 830.7,340.9 830.7,340.0 830.7,340.4 830.7,338.3 830.8,337.9 830.8,337.5 830.8,336.1 830.9,336.0 830.9,334.8 831.0,333.8 831.0,332.5 831.1,331.7 831.1,330.7 831.2,330.1 831.3,329.0 831.3,328.2 831.4,328.4 831.5,326.4 831.5,326.4 831.6,321.4 831.7,325.0 831.8,324.1 831.9,323.0 832.0,322.5 832.1,321.4 832.2,320.4 832.3,319.7 832.5,318.2 832.6,317.8 832.7,316.3 832.9,314.8 833.0,314.3 833.1,313.7 833.3,313.0 833.4,311.7 833.5,311.2 833.7,310.2 833.8,309.1 834.0,308.4 834.1,308.0 834.3,306.1 834.4,306.5 834.6,300.9 834.7,303.7 834.9,303.4 835.1,301.8 835.3,301.0 835.5,300.4 835.6,295.5 835.8,299.0 836.0,297.8 836.2,296.3 836.5,295.9 836.7,294.2 836.9,293.9 837.1,293.7 837.4,291.7 837.7,290.6 838.0,290.3 838.4,289.6 838.8,288.8 839.1,287.6 839.5,286.6 839.9,286.2 840.3,284.1 840.7,283.3 841.1,279.6 841.4,281.0 841.7,280.1 842.0,279.6 842.2,279.5 842.5,277.9 842.7,277.7 843.0,276.2 843.2,275.4 843.5,274.0 843.8,274.1 844.0,272.2 844.3,271.4 844.5,270.4 844.7,270.8 844.9,269.5 845.2,268.1 845.4,268.1 845.6,266.4 845.8,265.9 846.1,265.5 846.3,264.4 846.5,263.6 846.8,263.0 847.0,261.9 847.3,261.0 847.5,261.2 847.8,259.8 848.1,259.0 848.4,256.9 848.7,257.3 849.0,255.5 849.3,254.9 849.6,253.9 849.9,252.2 850.1,252.3 850.4,251.3 850.7,250.0 851.0,250.8 851.4,248.9 851.7,247.5 852.1,246.5 852.5,245.8 852.9,246.3 853.2,244.1 853.8,243.2 854.3,241.6 854.9,241.4 855.4,240.7 856.0,239.4 856.6,240.1 857.1,237.5 857.7,238.4 858.3,236.5 858.8,236.3 859.4,234.1 860.0,235.0 860.6,233.6 861.2,228.2 861.8,232.3 862.5,230.5 863.1,229.4 863.8,228.2 864.4,228.5 865.1,227.7 865.7,226.4 866.4,225.5 867.0,224.9 867.6,224.3 868.2,222.6 868.8,223.7 869.4,221.7 870.0,220.5 871.0,219.7 871.9,218.7 872.7,217.6 873.4,217.9 874.3,218.0 875.3,216.9 875.9,216.2 876.5,213.8 877.2,212.7 878.0,213.9 878.6,212.2 879.2,210.5 879.8,211.0 880.5,211.7 881.1,209.5 881.8,207.4 882.5,207.6 883.2,207.4 884.0,206.6 884.6,205.1 885.1,206.9 885.7,204.8 886.3,204.2 886.9,204.0 887.6,203.7 888.2,204.0 888.8,200.2 889.5,201.3 890.1,199.7 890.8,200.2 891.4,198.0 892.1,198.2 892.8,197.5 893.5,196.3 894.2,196.9 894.9,195.0 895.6,194.9 896.3,196.0 897.0,193.2 897.6,194.1 898.2,191.4 898.9,186.0 899.5,189.5 900.1,192.2 900.8,190.2 901.5,189.2 902.2,188.2 902.9,186.7 903.5,188.2 904.1,185.2 904.8,186.2 905.4,187.4 906.0,182.2 906.6,186.4 907.2,183.1 907.8,183.6 908.4,178.7 909.1,182.3 909.7,182.1 910.3,181.7 910.9,181.0 911.6,180.0 912.2,179.1 912.8,181.6 913.4,178.2 914.0,177.6 914.6,177.3 915.3,178.6 916.0,175.5 916.7,178.0 917.4,177.2 918.1,174.6 918.8,173.8 919.4,176.0 920.0,174.2 920.7,172.7 921.3,171.7 922.0,172.9 922.6,172.2 923.3,169.5 924.0,171.5 924.7,170.6 925.4,169.8 926.1,168.5 927.0,166.9 927.8,165.9 929.1,167.8 930.2,168.0 931.4,166.0 932.6,163.7 933.3,165.9 934.1,164.7 935.0,163.2 936.0,164.0 936.8,163.8 937.6,162.5 938.5,163.8 939.2,161.5 939.9,163.0 940.6,162.1 941.4,159.2 942.2,160.2 943.0,156.6 943.8,157.8 944.6,158.6 945.4,159.0 946.2,155.8 947.0,156.7 947.9,155.7 948.7,157.2 949.5,156.4 950.3,156.5 951.1,154.1 951.9,151.2 952.7,154.5 953.4,154.6 954.2,150.9 955.1,151.4 956.0,150.7 956.9,149.7 957.6,149.4 958.3,148.8 959.0,151.1 959.8,148.4 960.6,149.8 961.7,147.1 962.6,145.1 963.2,144.3 963.6,146.0 964.0,146.0 964.5,143.3 965.0,144.6 965.6,144.7 966.2,145.2 966.7,143.8 967.2,145.4 967.7,143.7 968.2,142.0 968.6,145.2 969.0,143.2 969.4,143.5 969.7,148.0 970.0,148.6 970.2,150.6 970.5,150.1 970.7,149.7 970.9,154.2 971.0,155.2 971.0,164.9 970.9,166.8 970.7,163.0 970.5,163.3 970.2,160.8 970.0,162.9 969.7,158.1 969.4,159.0 969.0,155.9 968.6,156.7 968.2,157.3 967.7,156.3 967.2,163.5 966.7,156.1 966.2,156.9 965.6,157.7 965.0,156.9 964.5,170.8 964.0,156.5 963.6,158.7 963.2,160.8 962.6,158.9 961.7,161.8 960.6,161.2 959.8,163.6 959.0,161.7 958.3,163.4 957.6,165.2 956.9,164.2 956.0,163.5 955.1,166.3 954.2,165.2 953.4,177.3 952.7,177.9 951.9,168.4 951.1,167.4 950.3,166.5 949.5,170.2 948.7,171.0 947.9,171.9 947.0,168.1 946.2,170.0 945.4,169.9 944.6,169.8 943.8,179.8 943.0,172.1 942.2,173.2 941.4,171.8 940.6,174.8 939.9,174.8 939.2,172.9 938.5,175.8 937.6,177.5 936.8,175.5 936.0,176.5 935.0,175.6 934.1,178.2 933.3,176.8 932.6,179.5 931.4,180.6 930.2,181.8 929.1,181.8 927.8,180.9 927.0,181.9 926.1,182.5 925.4,186.5 924.7,182.0 924.0,183.5 923.3,184.8 922.6,184.5 922.0,187.4 921.3,184.3 920.7,186.9 920.0,188.6 919.4,188.6 918.8,187.3 918.1,189.9 917.4,190.1 916.7,189.5 916.0,188.2 915.3,189.9 914.6,189.5 914.0,193.0 913.4,193.7 912.8,192.3 912.2,194.7 911.6,192.4 910.9,193.4 910.3,194.4 909.7,200.7 909.1,195.0 908.4,194.7 907.8,196.7 907.2,197.2 906.6,199.5 906.0,198.6 905.4,197.8 904.8,198.2 904.1,201.1 903.5,198.9 902.9,200.5 902.2,202.4 901.5,202.4 900.8,205.0 900.1,204.3 899.5,202.9 898.9,203.1 898.2,204.2 897.6,217.6 897.0,213.0 896.3,207.2 895.6,206.9 894.9,206.4 894.2,207.6 893.5,209.6 892.8,216.9 892.1,217.3 891.4,209.4 890.8,213.2 890.1,216.2 889.5,213.5 888.8,214.9 888.2,212.5 887.6,219.3 886.9,219.4 886.3,215.3 885.7,215.6 885.1,217.0 884.6,215.7 884.0,216.9 883.2,219.7 882.5,218.0 881.8,221.0 881.1,220.1 880.5,222.0 879.8,223.0 879.2,221.5 878.6,223.4 878.0,223.2 877.2,222.4 876.5,225.1 875.9,224.6 875.3,226.8 874.3,226.6 873.4,228.3 872.7,227.0 871.9,227.5 871.0,230.1 870.0,230.0 869.4,230.5 868.8,231.6 868.2,231.7 867.6,233.1 867.0,234.3 866.4,233.5 865.7,234.3 865.1,235.0 864.4,236.8 863.8,236.7 863.1,236.9 862.5,239.1 861.8,239.5 861.2,240.6 860.6,240.2 860.0,241.4 859.4,242.6 858.8,242.5 858.3,243.8 857.7,244.7 857.1,244.9 856.6,245.8 856.0,246.8 855.4,255.0 854.9,248.1 854.3,249.1 853.8,254.3 853.2,251.2 852.9,253.0 852.5,260.1 852.1,253.5 851.7,257.5 851.4,255.7 851.0,255.3 850.7,257.3 850.4,257.7 850.1,257.7 849.9,258.7 849.6,259.0 849.3,260.8 849.0,272.2 848.7,261.9 848.4,265.4 848.1,263.5 847.8,265.7 847.5,265.3 847.3,267.7 847.0,273.1 846.8,268.0 846.5,268.9 846.3,270.2 846.1,270.1 845.8,271.1 845.6,272.6 845.4,273.7 845.2,274.0 844.9,274.7 844.7,274.9 844.5,276.1 844.3,276.9 844.0,277.5 843.8,278.1 843.5,279.0 843.2,280.4 843.0,281.6 842.7,284.0 842.5,288.6 842.2,288.5 842.0,284.1 841.7,285.1 841.4,286.6 841.1,287.2 840.7,288.3 840.3,289.3 839.9,290.5 839.5,298.0 839.1,291.8 838.8,293.3 838.4,294.2 838.0,294.3 837.7,296.1 837.4,296.7 837.1,306.0 836.9,298.8 836.7,298.8 836.5,299.9 836.2,301.5 836.0,301.7 835.8,303.9 835.6,304.1 835.5,305.0 835.3,306.1 835.1,307.4 834.9,308.1 834.7,308.7 834.6,310.1 834.4,311.2 834.3,311.1 834.1,314.0 834.0,315.0 833.8,313.4 833.7,315.0 833.5,315.3 833.4,317.1 833.3,317.8 833.1,318.6 833.0,319.0 832.9,320.0 832.7,331.6 832.6,322.1 832.5,322.7 832.3,323.3 832.2,325.3 832.1,325.2 832.0,326.8 831.9,327.7 831.8,328.9 831.7,336.4 831.6,330.6 831.5,330.4 831.5,332.1 831.4,344.0 831.3,333.1 831.3,333.4 831.2,335.3 831.1,335.8 831.1,336.5 831.0,336.9 831.0,348.6 830.9,348.0 830.9,339.6 830.8,340.5 830.8,341.5 830.8,342.5 830.7,343.3 830.7,344.0 830.7,353.9 830.7,345.8 830.7,347.0 830.7,347.4 830.6,348.5 830.6,349.0 830.6,350.0 830.6,352.0 830.6,351.7 830.6,355.7 830.6,354.6 830.6,355.0 830.6,356.1 830.6,356.1 830.7,358.1 830.7,358.3 830.7,359.7 830.7,359.4 830.7,360.0 830.7,360.9 830.7,362.1 830.7,363.8 830.7,364.0 830.7,365.4 830.8,366.4 830.8,366.1 830.8,367.6 830.8,371.8 830.8,369.4 830.8,381.1 830.8,371.5 830.9,372.6 830.9,373.1 830.9,373.7 830.9,375.7 830.9,376.4 830.9,377.0 831.0,377.2 831.0,378.5 831.0,378.9 831.0,380.1 831.0,381.2" fill="#ffffff" stroke="#ffffff" stroke-width="1.4"/>
<line x1="975.9" y1="190.4" x2="975.9" y2="228.0" stroke="#ffffff" stroke-width="1.6"/>
<line x1="979.4" y1="207.9" x2="979.4" y2="228.0" stroke="#ffffff" stroke-width="1.6"/>
<line x1="969.3" y1="153.6" x2="969.3" y2="196.6" stroke="#ffffff" stroke-width="1.6"/>
<line x1="976.1" y1="194.2" x2="976.1" y2="208.2" stroke="#ffffff" stroke-width="1.6"/>
<line x1="974.2" y1="174.5" x2="974.2" y2="203.5" stroke="#ffffff" stroke-width="1.6"/>
<line x1="975.3" y1="176.8" x2="975.3" y2="194.3" stroke="#ffffff" stroke-width="1.6"/>
<line x1="972.1" y1="174.1" x2="972.1" y2="210.9" stroke="#ffffff" stroke-width="1.6"/>
<line x1="970.8" y1="165.7" x2="970.8" y2="180.6" stroke="#ffffff" stroke-width="1.6"/>
<line x1="975.8" y1="180.9" x2="975.8" y2="190.9" stroke="#ffffff" stroke-width="1.6"/>
<line x1="978.6" y1="196.1" x2="978.6" y2="213.6" stroke="#ffffff" stroke-width="1.6"/>
<line x1="979.8" y1="212.1" x2="979.8" y2="228.0" stroke="#ffffff" stroke-width="1.6"/>
<line x1="979.6" y1="206.0" x2="979.6" y2="228.0" stroke="#ffffff" stroke-width="1.6"/>
<line x1="971.3" y1="170.4" x2="971.3" y2="204.5" stroke="#ffffff" stroke-width="1.6"/>
<line x1="979.6" y1="211.6" x2="979.6" y2="228.0" stroke="#ffffff" stroke-width="1.6"/>
<line x1="973.0" y1="167.4" x2="973.0" y2="182.5" stroke="#ffffff" stroke-width="1.6"/>
<line x1="969.7" y1="153.1" x2="969.7" y2="184.2" stroke="#ffffff" stroke-width="1.6"/>
<line x1="969.0" y1="155.4" x2="969.0" y2="177.2" stroke="#ffffff" stroke-width="1.6"/>
<line x1="972.4" y1="174.3" x2="972.4" y2="201.2" stroke="#ffffff" stroke-width="1.6"/>
<line x1="972.5" y1="169.6" x2="972.5" y2="204.3" stroke="#ffffff" stroke-width="1.6"/>
<line x1="969.6" y1="162.8" x2="969.6" y2="173.6" stroke="#ffffff" stroke-width="1.6"/>
<line x1="977.2" y1="198.9" x2="977.2" y2="209.5" stroke="#ffffff" stroke-width="1.6"/>
<line x1="977.7" y1="193.8" x2="977.7" y2="224.1" stroke="#ffffff" stroke-width="1.6"/>
<line x1="969.1" y1="146.2" x2="969.1" y2="162.5" stroke="#ffffff" stroke-width="1.6"/>
<line x1="979.5" y1="200.5" x2="979.5" y2="228.0" stroke="#ffffff" stroke-width="1.6"/>
<line x1="979.2" y1="210.3" x2="979.2" y2="228.0" stroke="#ffffff" stroke-width="1.6"/>
<line x1="972.9" y1="172.4" x2="972.9" y2="209.5" stroke="#ffffff" stroke-width="1.6"/>
<line x1="970.2" y1="162.2" x2="970.2" y2="200.1" stroke="#ffffff" stroke-width="1.6"/>
<line x1="978.5" y1="192.8" x2="978.5" y2="228.0" stroke="#ffffff" stroke-width="1.6"/>
<line x1="980.2" y1="221.0" x2="980.2" y2="498.0" stroke="#ffffff" stroke-width="1.7"/>
<polyline points="888.0,498.0 896.0,498.0 900.0,437.0 902.0,387.0" fill="none" stroke="#ff4040" stroke-width="1.6" stroke-linejoin="miter" />
<polygon points="902.0,383.6 902.6,382.5 903.0,382.4 903.5,380.5 903.8,379.6 904.1,379.0 904.5,378.4 904.8,378.0 905.2,377.5 905.6,376.7 905.9,375.6 906.3,374.5 906.7,373.8 907.1,372.6 907.5,372.4 907.9,371.0 908.4,370.0 909.0,368.9 909.5,369.5 910.0,368.2 911.0,366.9 912.0,366.4 913.0,367.1 914.0,366.6 914.9,367.3 915.8,368.0 916.5,368.1 917.0,368.4 917.0,373.9 916.5,373.3 915.8,374.1 914.9,373.2 914.0,373.0 913.0,372.3 912.0,372.9 911.0,373.1 910.0,373.7 909.5,374.6 909.0,375.2 908.4,376.3 907.9,376.9 907.5,378.1 907.1,378.1 906.7,378.7 906.3,380.4 905.9,380.4 905.6,381.9 905.2,382.1 904.8,382.9 904.5,383.7 904.1,385.6 903.8,385.6 903.5,386.1 903.0,387.7 902.6,388.7 902.0,389.5" fill="#ff4040" stroke="#ff4040" stroke-width="1.4"/>
<polygon points="917.5,369.2 917.5,368.1 917.5,367.5 917.5,366.3 917.5,365.2 917.5,364.3 917.4,363.7 917.4,362.4 917.4,362.1 917.4,361.0 917.4,359.9 917.4,359.4 917.4,357.9 917.3,357.0 917.3,356.5 917.3,354.8 917.3,355.2 917.3,353.9 917.3,353.0 917.3,352.2 917.3,351.3 917.3,350.4 917.3,349.4 917.3,348.7 917.2,347.5 917.2,346.8 917.2,345.5 917.2,344.7 917.2,343.9 917.3,342.9 917.3,342.3 917.3,341.6 917.3,340.6 917.3,339.5 917.3,339.0 917.3,337.9 917.3,336.6 917.4,336.3 917.4,334.8 917.5,333.9 917.5,332.7 917.6,332.4 917.7,330.5 917.8,330.5 917.9,329.4 918.0,328.4 918.1,327.8 918.3,326.8 918.5,325.0 918.8,324.0 919.0,323.0 919.2,322.9 919.5,321.6 919.8,320.5 920.0,320.2 920.3,318.4 920.5,317.8 920.8,317.2 921.0,315.4 921.2,315.2 921.5,313.4 921.7,311.9 921.9,310.9 922.1,309.8 922.3,308.7 922.6,308.3 922.8,306.3 923.0,305.3 923.3,304.5 923.5,302.9 923.8,301.5 924.1,300.2 924.4,299.3 924.7,297.9 925.0,297.5 925.4,295.6 925.7,295.5 926.1,293.9 926.5,292.7 926.9,291.9 927.4,290.1 927.8,289.7 928.2,287.6 928.7,287.2 929.2,285.9 929.6,284.6 930.1,283.0 930.6,282.7 931.1,280.8 931.5,281.1 932.0,280.3 932.5,278.7 933.0,276.5 933.4,277.2 933.9,274.6 934.4,273.8 934.9,272.7 935.4,272.5 936.0,270.7 936.5,269.6 937.0,269.6 937.5,269.1 938.0,266.6 938.5,267.2 939.0,265.1 939.5,265.4 940.0,262.9 940.4,262.3 940.9,262.8 941.3,260.6 941.7,261.2 942.4,257.9 943.1,256.8 944.0,256.7 944.5,255.9 945.0,254.1 945.6,252.7 946.2,252.4 946.7,252.7 947.2,252.5 947.7,249.9 948.3,251.3 948.9,249.4 949.5,247.9 950.2,247.7 950.9,247.7 951.6,246.8 952.2,244.4 952.8,244.6 953.3,244.4 953.9,244.0 954.5,243.8 955.2,241.4 955.8,242.9 956.4,241.3 957.0,241.1 957.7,240.5 958.3,238.4 959.0,237.6 959.6,238.7 960.3,236.7 961.0,235.3 961.6,235.9 962.3,235.8 963.0,232.2 963.7,234.8 964.3,234.3 965.0,233.3 965.7,232.7 966.3,231.8 967.0,230.7 967.7,230.3 968.4,229.6 969.1,229.9 969.9,227.3 970.5,226.5 971.1,226.4 971.8,226.4 972.4,226.6 973.0,224.5 973.7,225.5 974.4,224.5 975.0,224.6 975.7,222.7 976.4,223.6 977.0,221.4 977.7,216.9 978.4,220.8 979.0,221.7 979.7,220.1 980.3,220.6 981.0,218.3 981.6,217.6 982.3,217.5 982.9,216.8 983.6,216.2 984.3,217.0 985.1,215.7 985.8,216.4 986.6,214.1 987.4,212.9 988.2,212.4 989.1,212.7 990.0,212.4 990.0,222.3 989.1,223.6 988.2,224.1 987.4,228.7 986.6,224.4 985.8,226.3 985.1,225.6 984.3,226.9 983.6,227.8 982.9,228.8 982.3,227.4 981.6,229.6 981.0,230.4 980.3,231.2 979.7,231.2 979.0,230.7 978.4,231.6 977.7,233.1 977.0,232.6 976.4,232.7 975.7,234.3 975.0,234.2 974.4,235.2 973.7,236.0 973.0,235.6 972.4,235.5 971.8,236.6 971.1,238.1 970.5,237.6 969.9,237.5 969.1,239.1 968.4,238.9 967.7,241.6 967.0,240.3 966.3,242.1 965.7,242.6 965.0,244.1 964.3,245.0 963.7,243.4 963.0,244.2 962.3,245.5 961.6,245.5 961.0,246.9 960.3,247.0 959.6,247.2 959.0,248.7 958.3,249.2 957.7,249.2 957.0,249.8 956.4,252.3 955.8,251.1 955.2,251.7 954.5,253.1 953.9,253.1 953.3,255.3 952.8,255.3 952.2,255.2 951.6,257.8 950.9,256.5 950.2,258.9 949.5,258.2 948.9,264.8 948.3,260.2 947.7,262.1 947.2,262.5 946.7,262.9 946.2,261.9 945.6,264.2 945.0,263.9 944.5,266.6 944.0,265.4 943.1,266.2 942.4,269.1 941.7,269.5 941.3,270.6 940.9,270.9 940.4,272.2 940.0,271.9 939.5,273.8 939.0,274.2 938.5,274.2 938.0,275.4 937.5,277.2 937.0,276.9 936.5,278.8 936.0,279.2 935.4,280.7 934.9,280.4 934.4,281.0 933.9,284.4 933.4,284.1 933.0,283.9 932.5,285.9 932.0,285.9 931.5,287.2 931.1,287.6 930.6,288.9 930.1,290.7 929.6,291.5 929.2,292.6 928.7,293.1 928.2,294.7 927.8,294.9 927.4,295.9 926.9,297.0 926.5,298.6 926.1,299.9 925.7,300.8 925.4,301.6 925.0,302.3 924.7,303.6 924.4,304.3 924.1,305.4 923.8,306.9 923.5,307.7 923.3,309.4 923.0,310.4 922.8,311.6 922.6,312.2 922.3,313.9 922.1,314.3 921.9,315.5 921.7,317.0 921.5,321.3 921.2,319.4 921.0,319.7 920.8,320.7 920.5,321.8 920.3,323.4 920.0,327.0 919.8,324.5 919.5,325.6 919.2,326.6 919.0,327.4 918.8,328.0 918.5,328.8 918.3,330.1 918.1,331.1 918.0,332.6 917.9,332.8 917.8,333.5 917.7,334.9 917.6,335.8 917.5,337.3 917.5,337.9 917.4,338.4 917.4,339.8 917.3,341.2 917.3,341.7 917.3,343.0 917.3,343.5 917.3,344.9 917.3,345.9 917.3,346.2 917.3,346.8 917.2,348.1 917.2,349.3 917.2,349.5 917.2,350.4 917.2,351.8 917.3,352.6 917.3,353.0 917.3,354.7 917.3,355.0 917.3,355.7 917.3,357.1 917.3,358.1 917.3,359.2 917.3,359.8 917.3,360.3 917.3,361.7 917.4,362.1 917.4,362.7 917.4,364.3 917.4,364.8 917.4,365.6 917.4,366.4 917.4,367.4 917.5,369.0 917.5,369.1 917.5,369.8 917.5,371.4 917.5,372.4 917.5,373.1" fill="#ff4040" stroke="#ff4040" stroke-width="1.4"/>
<line x1="989.5" y1="205.0" x2="989.5" y2="498.0" stroke="#ff4040" stroke-width="1.6"/>
<polyline points="989.6,498.0 993.0,498.0 995.0,448.0 999.0,403.0 1004.0,381.0" fill="none" stroke="#ff4040" stroke-width="1.8" stroke-linejoin="miter" />
<polygon points="1004.0,378.3 1004.5,377.7 1005.1,375.9 1005.9,374.0 1006.7,373.4 1007.1,372.5 1007.6,371.9 1008.4,370.8 1009.3,370.2 1010.0,369.1 1010.7,368.5 1011.4,368.4 1012.2,367.2 1012.9,366.8 1013.5,367.7 1014.1,366.9 1014.6,366.4 1015.0,367.4 1015.0,372.9 1014.6,373.7 1014.1,373.3 1013.5,373.2 1012.9,373.2 1012.2,374.4 1011.4,373.5 1010.7,373.9 1010.0,375.3 1009.3,375.7 1008.4,377.4 1007.6,379.1 1007.1,378.7 1006.7,379.7 1005.9,380.4 1005.1,381.8 1004.5,383.1 1004.0,383.6" fill="#ff4040" stroke="#ff4040" stroke-width="1.4"/>
<polygon points="1015.0,367.6 1015.0,366.3 1015.0,366.0 1014.9,366.0 1014.9,364.6 1014.9,363.8 1014.8,362.1 1014.8,361.4 1014.8,362.1 1014.8,361.5 1014.8,356.4 1014.8,360.1 1014.8,358.5 1014.8,358.3 1014.8,358.2 1014.8,356.5 1014.8,355.1 1014.9,354.4 1014.9,353.8 1015.0,348.6 1015.0,351.9 1015.1,347.1 1015.1,351.2 1015.2,351.1 1015.3,349.9 1015.4,349.9 1015.4,348.0 1015.5,347.9 1015.6,346.5 1015.7,347.2 1015.8,345.6 1015.9,344.5 1016.0,345.3 1016.1,343.8 1016.2,342.4 1016.2,341.6 1016.4,342.1 1016.5,340.4 1016.6,341.0 1016.7,339.5 1016.8,338.4 1016.9,339.2 1017.0,338.7 1017.1,336.0 1017.2,337.1 1017.3,336.7 1017.4,333.8 1017.6,333.8 1017.7,332.9 1017.8,326.3 1017.9,331.3 1018.0,331.4 1018.1,331.7 1018.3,330.1 1018.4,327.7 1018.5,327.2 1018.7,328.1 1018.8,328.1 1018.9,324.7 1019.0,324.3 1019.2,325.1 1019.3,323.3 1019.4,323.2 1019.6,318.6 1019.7,320.6 1019.9,318.2 1020.0,319.3 1020.2,317.9 1020.3,317.2 1020.4,317.6 1020.6,316.0 1020.7,315.0 1020.9,308.4 1021.0,314.2 1021.2,315.8 1021.4,311.4 1021.6,305.2 1021.8,309.3 1022.0,311.6 1022.2,307.9 1022.4,306.4 1022.6,308.6 1022.8,306.0 1023.0,306.6 1023.1,305.5 1023.3,302.9 1023.5,299.6 1023.7,303.2 1023.9,305.9 1024.1,301.0 1024.3,301.1 1024.5,303.2 1024.7,301.1 1024.9,297.1 1025.1,296.5 1025.3,298.2 1025.5,295.8 1025.7,295.3 1025.9,298.4 1026.1,296.2 1026.2,295.0 1026.4,290.4 1026.6,291.6 1026.9,290.1 1027.1,294.5 1027.3,287.0 1027.5,292.0 1027.8,286.8 1028.0,285.5 1028.2,287.2 1028.4,283.8 1028.7,278.6 1028.9,286.3 1029.1,286.2 1029.4,281.0 1029.6,285.7 1029.8,282.7 1030.0,279.5 1030.3,282.3 1030.5,278.6 1030.7,280.2 1031.0,274.3 1031.2,277.4 1031.5,278.7 1031.7,278.5 1032.0,274.0 1032.3,276.6 1032.6,275.7 1032.9,273.4 1033.3,275.6 1033.6,268.0 1033.9,276.7 1034.2,271.4 1034.5,270.8 1035.0,273.9 1035.4,264.2 1035.8,265.4 1036.3,266.8 1036.7,267.4 1037.1,263.4 1037.5,265.3 1038.0,266.3 1038.4,266.1 1038.8,268.9 1039.2,268.2 1039.6,265.5 1040.0,262.5 1040.4,258.2 1040.8,263.1 1041.2,264.2 1041.6,257.5 1042.0,253.5 1042.4,253.8 1042.8,261.7 1043.1,256.7 1043.5,260.9 1043.9,255.2 1044.3,252.2 1044.6,252.7 1045.0,254.5 1045.4,251.7 1045.7,240.6 1046.1,255.8 1046.4,241.1 1046.8,246.4 1047.1,249.4 1047.5,252.5 1047.8,245.7 1048.1,252.2 1048.4,251.9 1048.7,243.9 1049.0,241.5 1049.3,241.7 1049.6,239.7 1050.0,241.4 1050.3,241.3 1050.6,244.7 1051.1,246.5 1051.5,240.3 1051.9,243.1 1052.2,242.4 1052.4,244.1 1052.7,239.8 1053.0,244.4 1053.1,241.3 1053.3,242.5 1053.4,240.5 1053.5,230.4 1053.7,238.5 1053.8,240.1 1053.9,233.2 1054.0,237.6 1054.1,238.6 1054.2,234.6 1054.3,230.1 1054.4,237.2 1054.5,233.4 1054.5,232.5 1054.6,232.2 1054.7,232.3 1054.8,232.7 1054.9,233.2 1055.0,229.5 1055.1,232.0 1055.2,228.0 1055.3,228.5 1055.3,228.0 1055.4,225.1 1055.5,227.9 1055.6,226.3 1055.7,221.7 1055.8,225.2 1055.8,224.4 1055.9,222.7 1056.0,224.1 1056.0,224.1 1056.1,221.4 1056.2,220.3 1056.3,220.3 1056.3,222.0 1056.4,218.2 1056.5,219.1 1056.6,218.6 1056.6,218.2 1056.7,218.4 1056.8,217.6 1056.8,215.5 1056.9,214.5 1057.0,216.4 1057.1,216.2 1057.1,213.2 1057.2,212.4 1057.3,212.9 1057.4,211.2 1057.4,211.1 1057.5,209.9 1057.6,211.1 1057.7,209.8 1057.8,208.1 1057.8,207.6 1057.9,208.1 1058.0,206.5 1058.0,211.7 1057.9,214.1 1057.8,215.3 1057.8,214.0 1057.7,217.1 1057.6,217.9 1057.5,217.0 1057.4,218.5 1057.4,220.4 1057.3,219.9 1057.2,220.1 1057.1,221.5 1057.1,223.4 1057.0,224.6 1056.9,222.5 1056.8,224.0 1056.8,223.1 1056.7,224.9 1056.6,238.4 1056.6,228.2 1056.5,228.3 1056.4,228.2 1056.3,229.9 1056.3,230.0 1056.2,228.9 1056.1,230.9 1056.0,230.0 1056.0,232.6 1055.9,234.4 1055.8,235.1 1055.8,232.6 1055.7,235.6 1055.6,235.5 1055.5,237.1 1055.4,236.4 1055.3,238.5 1055.3,240.4 1055.2,241.6 1055.1,240.9 1055.0,243.9 1054.9,240.8 1054.8,241.1 1054.7,246.2 1054.6,246.4 1054.5,258.3 1054.5,246.6 1054.4,258.7 1054.3,247.6 1054.2,254.0 1054.1,253.0 1054.0,254.4 1053.9,252.8 1053.8,252.1 1053.7,254.4 1053.5,258.3 1053.4,256.9 1053.3,256.3 1053.1,255.3 1053.0,256.2 1052.7,262.7 1052.4,263.0 1052.2,264.6 1051.9,262.1 1051.5,262.2 1051.1,261.6 1050.6,281.6 1050.3,278.5 1050.0,272.5 1049.6,276.5 1049.3,268.5 1049.0,285.2 1048.7,268.1 1048.4,276.1 1048.1,274.5 1047.8,275.6 1047.5,278.3 1047.1,280.7 1046.8,279.6 1046.4,277.2 1046.1,281.3 1045.7,278.1 1045.4,279.6 1045.0,282.5 1044.6,279.1 1044.3,282.8 1043.9,286.8 1043.5,282.1 1043.1,281.4 1042.8,288.7 1042.4,281.1 1042.0,281.0 1041.6,287.7 1041.2,286.2 1040.8,285.7 1040.4,288.2 1040.0,284.8 1039.6,292.2 1039.2,291.2 1038.8,303.0 1038.4,292.6 1038.0,295.3 1037.5,293.0 1037.1,287.3 1036.7,288.2 1036.3,291.2 1035.8,294.7 1035.4,294.6 1035.0,296.7 1034.5,296.9 1034.2,298.1 1033.9,291.5 1033.6,295.6 1033.3,299.5 1032.9,292.2 1032.6,292.8 1032.3,299.8 1032.0,301.1 1031.7,293.9 1031.5,305.6 1031.2,302.2 1031.0,301.8 1030.7,296.5 1030.5,297.5 1030.3,297.4 1030.0,299.9 1029.8,303.2 1029.6,300.6 1029.4,301.2 1029.1,306.5 1028.9,304.6 1028.7,303.0 1028.4,308.8 1028.2,309.5 1028.0,306.7 1027.8,316.4 1027.5,303.8 1027.3,309.4 1027.1,318.9 1026.9,307.3 1026.6,312.3 1026.4,313.2 1026.2,313.0 1026.1,308.8 1025.9,313.0 1025.7,312.4 1025.5,314.0 1025.3,311.0 1025.1,314.3 1024.9,311.0 1024.7,316.1 1024.5,311.9 1024.3,312.5 1024.1,316.3 1023.9,316.4 1023.7,318.5 1023.5,314.7 1023.3,316.2 1023.1,321.2 1023.0,320.1 1022.8,318.6 1022.6,320.1 1022.4,318.7 1022.2,322.8 1022.0,319.8 1021.8,322.6 1021.6,320.7 1021.4,325.6 1021.2,326.4 1021.0,333.0 1020.9,325.9 1020.7,324.1 1020.6,327.1 1020.4,333.6 1020.3,325.8 1020.2,340.0 1020.0,327.8 1019.9,330.4 1019.7,329.4 1019.6,331.8 1019.4,331.7 1019.3,330.0 1019.2,331.5 1019.0,334.4 1018.9,332.1 1018.8,335.5 1018.7,333.7 1018.5,335.1 1018.4,335.7 1018.3,338.1 1018.1,337.0 1018.0,338.7 1017.9,339.7 1017.8,339.2 1017.7,341.0 1017.6,340.3 1017.4,340.2 1017.3,342.7 1017.2,341.3 1017.1,343.5 1017.0,343.5 1016.9,344.9 1016.8,344.5 1016.7,344.7 1016.6,347.2 1016.5,347.1 1016.4,347.4 1016.2,347.3 1016.2,349.5 1016.1,349.0 1016.0,348.9 1015.9,351.3 1015.8,351.2 1015.7,351.5 1015.6,352.1 1015.5,353.1 1015.4,353.5 1015.4,353.8 1015.3,355.1 1015.2,357.3 1015.1,356.3 1015.1,355.6 1015.0,357.7 1015.0,357.9 1014.9,359.0 1014.9,360.2 1014.8,359.9 1014.8,360.8 1014.8,362.4 1014.8,362.9 1014.8,362.8 1014.8,364.5 1014.8,363.6 1014.8,365.8 1014.8,368.6 1014.8,366.8 1014.8,367.5 1014.9,374.0 1014.9,368.3 1014.9,369.6 1015.0,370.9 1015.0,370.6 1015.0,383.8" fill="#ff4040" stroke="#ff4040" stroke-width="1.4"/>
<polyline points="960.9,136.0 960.9,497.6 973.7,497.6" fill="none" stroke="#00ff00" stroke-width="1.6" stroke-linejoin="miter" />
<line x1="998.8" y1="300.0" x2="998.8" y2="498.0" stroke="#ff4040" stroke-width="1.3"/>
</g>
<text transform="translate(688.5 164.0) scale(1.04 1)" font-family="Liberation Serif" font-weight="bold" font-size="23" fill="#ffffff">200K</text>
<text transform="translate(639.0 205.5) scale(1.04 1)" font-family="Liberation Serif" font-weight="bold" font-size="23" fill="#30b060">50K</text>
<text transform="translate(723.5 214.0) scale(1.04 1)" font-family="Liberation Serif" font-weight="bold" font-size="23" fill="#2098e0">150K</text>
<text transform="translate(824.5 175.0) scale(1.04 1)" font-family="Liberation Serif" font-weight="bold" font-size="23" fill="#f02828">260K</text>
<text transform="translate(802.6 197.5) scale(1.04 1)" font-family="Liberation Serif" font-weight="bold" font-size="23" fill="#a050d0">150K</text>
<text transform="translate(983.0 146.0) scale(1.04 1)" font-family="Liberation Serif" font-weight="bold" font-size="23" fill="#ffffff">100K</text>
<text transform="translate(1050.8 204.4) scale(1.04 1)" font-family="Liberation Serif" font-weight="bold" font-size="23" fill="#f03838">50K</text>
<text transform="translate(902.7 242.4) scale(1.04 1)" font-family="Liberation Serif" font-weight="bold" font-size="23" fill="#e02828">40K</text>
<text transform="translate(799.4 273.5) scale(1.04 1)" font-family="Liberation Serif" font-weight="bold" font-size="23" fill="#30b060">50K</text>
<text transform="translate(703.6 292.5) scale(1.04 1)" font-family="Liberation Serif" font-weight="bold" font-size="23" fill="#f8f000">300K</text>
<text transform="translate(677.4 339.3) scale(1.04 1)" font-family="Liberation Serif" font-weight="bold" font-size="23" fill="#f07830">300K</text>
<text transform="translate(805.8 429.6) scale(1.04 1)" font-family="Liberation Serif" font-weight="bold" font-size="23" fill="#f8a8b0">2x 50K</text>
<text transform="translate(658.0 452.4) scale(1.04 1)" font-family="Liberation Serif" font-weight="bold" font-size="23" fill="#4050d8">2x 50K</text>
<text transform="translate(554.8 517.7) scale(1.04 1)" font-family="Liberation Serif" font-weight="bold" font-size="23" fill="#4050d8">3x 24K</text>
<text transform="translate(577.50 509.70) scale(0.86 1)" font-family="Liberation Sans" font-size="15.6" font-weight="normal" text-anchor="end" fill="#1a1a1a">0</text>
<line x1="580.00" y1="503.50" x2="587.00" y2="503.50" stroke="#141414" stroke-width="1.6" />
<text transform="translate(577.50 465.37) scale(0.86 1)" font-family="Liberation Sans" font-size="15.6" font-weight="normal" text-anchor="end" fill="#1a1a1a">1000</text>
<line x1="580.00" y1="459.17" x2="587.00" y2="459.17" stroke="#141414" stroke-width="1.6" />
<text transform="translate(577.50 421.03) scale(0.86 1)" font-family="Liberation Sans" font-size="15.6" font-weight="normal" text-anchor="end" fill="#1a1a1a">2000</text>
<line x1="580.00" y1="414.83" x2="587.00" y2="414.83" stroke="#141414" stroke-width="1.6" />
<text transform="translate(577.50 376.70) scale(0.86 1)" font-family="Liberation Sans" font-size="15.6" font-weight="normal" text-anchor="end" fill="#1a1a1a">3000</text>
<line x1="580.00" y1="370.50" x2="587.00" y2="370.50" stroke="#141414" stroke-width="1.6" />
<text transform="translate(577.50 332.37) scale(0.86 1)" font-family="Liberation Sans" font-size="15.6" font-weight="normal" text-anchor="end" fill="#1a1a1a">4000</text>
<line x1="580.00" y1="326.17" x2="587.00" y2="326.17" stroke="#141414" stroke-width="1.6" />
<text transform="translate(577.50 288.03) scale(0.86 1)" font-family="Liberation Sans" font-size="15.6" font-weight="normal" text-anchor="end" fill="#1a1a1a">5000</text>
<line x1="580.00" y1="281.83" x2="587.00" y2="281.83" stroke="#141414" stroke-width="1.6" />
<text transform="translate(577.50 243.70) scale(0.86 1)" font-family="Liberation Sans" font-size="15.6" font-weight="normal" text-anchor="end" fill="#1a1a1a">6000</text>
<line x1="580.00" y1="237.50" x2="587.00" y2="237.50" stroke="#141414" stroke-width="1.6" />
<text transform="translate(577.50 199.37) scale(0.86 1)" font-family="Liberation Sans" font-size="15.6" font-weight="normal" text-anchor="end" fill="#1a1a1a">7000</text>
<line x1="580.00" y1="193.17" x2="587.00" y2="193.17" stroke="#141414" stroke-width="1.6" />
<text transform="translate(577.50 155.03) scale(0.86 1)" font-family="Liberation Sans" font-size="15.6" font-weight="normal" text-anchor="end" fill="#1a1a1a">8000</text>
<line x1="580.00" y1="148.83" x2="587.00" y2="148.83" stroke="#141414" stroke-width="1.6" />
<text transform="translate(577.50 110.70) scale(0.86 1)" font-family="Liberation Sans" font-size="15.6" font-weight="normal" text-anchor="end" fill="#1a1a1a">9000</text>
<line x1="580.00" y1="104.50" x2="587.00" y2="104.50" stroke="#141414" stroke-width="1.6" />
<line x1="590.00" y1="507.00" x2="590.00" y2="513.00" stroke="#141414" stroke-width="1.6" />
<text transform="translate(590.00 528.00) scale(0.86 1)" font-family="Liberation Sans" font-size="15.6" font-weight="normal" text-anchor="middle" fill="#1a1a1a">0</text>
<line x1="641.82" y1="507.00" x2="641.82" y2="513.00" stroke="#141414" stroke-width="1.6" />
<text transform="translate(641.82 528.00) scale(0.86 1)" font-family="Liberation Sans" font-size="15.6" font-weight="normal" text-anchor="middle" fill="#1a1a1a">1000</text>
<line x1="693.64" y1="507.00" x2="693.64" y2="513.00" stroke="#141414" stroke-width="1.6" />
<text transform="translate(693.64 528.00) scale(0.86 1)" font-family="Liberation Sans" font-size="15.6" font-weight="normal" text-anchor="middle" fill="#1a1a1a">2000</text>
<line x1="745.46" y1="507.00" x2="745.46" y2="513.00" stroke="#141414" stroke-width="1.6" />
<text transform="translate(745.46 528.00) scale(0.86 1)" font-family="Liberation Sans" font-size="15.6" font-weight="normal" text-anchor="middle" fill="#1a1a1a">3000</text>
<line x1="797.28" y1="507.00" x2="797.28" y2="513.00" stroke="#141414" stroke-width="1.6" />
<text transform="translate(797.28 528.00) scale(0.86 1)" font-family="Liberation Sans" font-size="15.6" font-weight="normal" text-anchor="middle" fill="#1a1a1a">4000</text>
<line x1="849.10" y1="507.00" x2="849.10" y2="513.00" stroke="#141414" stroke-width="1.6" />
<text transform="translate(849.10 528.00) scale(0.86 1)" font-family="Liberation Sans" font-size="15.6" font-weight="normal" text-anchor="middle" fill="#1a1a1a">5000</text>
<line x1="900.92" y1="507.00" x2="900.92" y2="513.00" stroke="#141414" stroke-width="1.6" />
<text transform="translate(900.92 528.00) scale(0.86 1)" font-family="Liberation Sans" font-size="15.6" font-weight="normal" text-anchor="middle" fill="#1a1a1a">6000</text>
<line x1="952.74" y1="507.00" x2="952.74" y2="513.00" stroke="#141414" stroke-width="1.6" />
<text transform="translate(952.74 528.00) scale(0.86 1)" font-family="Liberation Sans" font-size="15.6" font-weight="normal" text-anchor="middle" fill="#1a1a1a">7000</text>
<line x1="1004.56" y1="507.00" x2="1004.56" y2="513.00" stroke="#141414" stroke-width="1.6" />
<text transform="translate(1004.56 528.00) scale(0.86 1)" font-family="Liberation Sans" font-size="15.6" font-weight="normal" text-anchor="middle" fill="#1a1a1a">8000</text>
<line x1="1056.38" y1="507.00" x2="1056.38" y2="513.00" stroke="#141414" stroke-width="1.6" />
<text transform="translate(1056.38 528.00) scale(0.86 1)" font-family="Liberation Sans" font-size="15.6" font-weight="normal" text-anchor="middle" fill="#1a1a1a">9000</text>
<line x1="1108.20" y1="507.00" x2="1108.20" y2="513.00" stroke="#141414" stroke-width="1.6" />
<text transform="translate(1108.20 528.00) scale(0.86 1)" font-family="Liberation Sans" font-size="15.6" font-weight="normal" text-anchor="middle" fill="#1a1a1a">10000</text>
<text transform="translate(848.00 549.00) scale(1.0 1)" font-family="Liberation Sans" font-size="15" font-weight="normal" text-anchor="middle" fill="#1a1a1a">Time</text>
<text x="540.50" y="304.00" font-family="Liberation Sans" font-size="15.5" font-weight="normal" text-anchor="middle" fill="#1a1a1a" transform="rotate(-90 540.5 304)">Amplitude</text>
<text transform="translate(1170.50 84.50) scale(1.0 1)" font-family="Liberation Sans" font-size="15" font-weight="normal" text-anchor="start" fill="#202020">pressure</text>
<rect x="1162.50" y="93.80" width="658.50" height="462.70" fill="#c3c3c3" />
<rect x="1162.50" y="93.80" width="15.00" height="462.70" fill="url(#gl)" />
<rect x="1162.50" y="93.80" width="658.50" height="1.00" fill="#cccccc" />
<rect x="1165.50" y="554.00" width="655.50" height="2.50" fill="#9d9d9d" />
<polygon points="1805,93.8 1811,93.8 1817,92.39999999999999 1820,91.8 1821,91.8 1821,556.5 1805,556.5" fill="url(#gr)"/>
<rect x="1819.40" y="92.00" width="1.60" height="464.50" fill="#505050" />
<rect x="1165.50" y="554.00" width="653.90" height="2.50" fill="#9d9d9d" opacity="0.6"/>
<rect x="1273.50" y="103.00" width="518.00" height="1.00" fill="#6a6a6a" />
<rect x="1273.50" y="103.00" width="1.00" height="401.00" fill="#6a6a6a" />
<rect x="1273.50" y="504.00" width="519.00" height="1.30" fill="#dadada" />
<rect x="1791.50" y="103.00" width="1.30" height="402.00" fill="#dadada" />
<rect x="1274.50" y="104.00" width="517.00" height="400.00" fill="#000" />
<line x1="1286.10" y1="104.00" x2="1286.10" y2="504.00" stroke="#585800" stroke-width="1.6" />
<line x1="1296.40" y1="104.00" x2="1296.40" y2="504.00" stroke="#585800" stroke-width="1.6" />
<line x1="1306.71" y1="104.00" x2="1306.71" y2="504.00" stroke="#585800" stroke-width="1.6" />
<line x1="1317.01" y1="104.00" x2="1317.01" y2="504.00" stroke="#585800" stroke-width="1.6" />
<line x1="1337.61" y1="104.00" x2="1337.61" y2="504.00" stroke="#585800" stroke-width="1.6" />
<line x1="1347.91" y1="104.00" x2="1347.91" y2="504.00" stroke="#585800" stroke-width="1.6" />
<line x1="1358.22" y1="104.00" x2="1358.22" y2="504.00" stroke="#585800" stroke-width="1.6" />
<line x1="1368.52" y1="104.00" x2="1368.52" y2="504.00" stroke="#585800" stroke-width="1.6" />
<line x1="1389.12" y1="104.00" x2="1389.12" y2="504.00" stroke="#585800" stroke-width="1.6" />
<line x1="1399.42" y1="104.00" x2="1399.42" y2="504.00" stroke="#585800" stroke-width="1.6" />
<line x1="1409.73" y1="104.00" x2="1409.73" y2="504.00" stroke="#585800" stroke-width="1.6" />
<line x1="1420.03" y1="104.00" x2="1420.03" y2="504.00" stroke="#585800" stroke-width="1.6" />
<line x1="1440.63" y1="104.00" x2="1440.63" y2="504.00" stroke="#585800" stroke-width="1.6" />
<line x1="1450.93" y1="104.00" x2="1450.93" y2="504.00" stroke="#585800" stroke-width="1.6" />
<line x1="1461.24" y1="104.00" x2="1461.24" y2="504.00" stroke="#585800" stroke-width="1.6" />
<line x1="1471.54" y1="104.00" x2="1471.54" y2="504.00" stroke="#585800" stroke-width="1.6" />
<line x1="1492.14" y1="104.00" x2="1492.14" y2="504.00" stroke="#585800" stroke-width="1.6" />
<line x1="1502.44" y1="104.00" x2="1502.44" y2="504.00" stroke="#585800" stroke-width="1.6" />
<line x1="1512.75" y1="104.00" x2="1512.75" y2="504.00" stroke="#585800" stroke-width="1.6" />
<line x1="1523.05" y1="104.00" x2="1523.05" y2="504.00" stroke="#585800" stroke-width="1.6" />
<line x1="1543.65" y1="104.00" x2="1543.65" y2="504.00" stroke="#585800" stroke-width="1.6" />
<line x1="1553.95" y1="104.00" x2="1553.95" y2="504.00" stroke="#585800" stroke-width="1.6" />
<line x1="1564.26" y1="104.00" x2="1564.26" y2="504.00" stroke="#585800" stroke-width="1.6" />
<line x1="1574.56" y1="104.00" x2="1574.56" y2="504.00" stroke="#585800" stroke-width="1.6" />
<line x1="1595.16" y1="104.00" x2="1595.16" y2="504.00" stroke="#585800" stroke-width="1.6" />
<line x1="1605.46" y1="104.00" x2="1605.46" y2="504.00" stroke="#585800" stroke-width="1.6" />
<line x1="1615.77" y1="104.00" x2="1615.77" y2="504.00" stroke="#585800" stroke-width="1.6" />
<line x1="1626.07" y1="104.00" x2="1626.07" y2="504.00" stroke="#585800" stroke-width="1.6" />
<line x1="1646.67" y1="104.00" x2="1646.67" y2="504.00" stroke="#585800" stroke-width="1.6" />
<line x1="1656.97" y1="104.00" x2="1656.97" y2="504.00" stroke="#585800" stroke-width="1.6" />
<line x1="1667.28" y1="104.00" x2="1667.28" y2="504.00" stroke="#585800" stroke-width="1.6" />
<line x1="1677.58" y1="104.00" x2="1677.58" y2="504.00" stroke="#585800" stroke-width="1.6" />
<line x1="1698.18" y1="104.00" x2="1698.18" y2="504.00" stroke="#585800" stroke-width="1.6" />
<line x1="1708.48" y1="104.00" x2="1708.48" y2="504.00" stroke="#585800" stroke-width="1.6" />
<line x1="1718.79" y1="104.00" x2="1718.79" y2="504.00" stroke="#585800" stroke-width="1.6" />
<line x1="1729.09" y1="104.00" x2="1729.09" y2="504.00" stroke="#585800" stroke-width="1.6" />
<line x1="1749.69" y1="104.00" x2="1749.69" y2="504.00" stroke="#585800" stroke-width="1.6" />
<line x1="1759.99" y1="104.00" x2="1759.99" y2="504.00" stroke="#585800" stroke-width="1.6" />
<line x1="1770.30" y1="104.00" x2="1770.30" y2="504.00" stroke="#585800" stroke-width="1.6" />
<line x1="1780.60" y1="104.00" x2="1780.60" y2="504.00" stroke="#585800" stroke-width="1.6" />
<line x1="1274.50" y1="490.15" x2="1791.50" y2="490.15" stroke="#585800" stroke-width="1.6" />
<line x1="1274.50" y1="476.81" x2="1791.50" y2="476.81" stroke="#585800" stroke-width="1.6" />
<line x1="1274.50" y1="469.00" x2="1791.50" y2="469.00" stroke="#585800" stroke-width="1.6" />
<line x1="1274.50" y1="463.46" x2="1791.50" y2="463.46" stroke="#585800" stroke-width="1.6" />
<line x1="1274.50" y1="445.82" x2="1791.50" y2="445.82" stroke="#585800" stroke-width="1.6" />
<line x1="1274.50" y1="432.48" x2="1791.50" y2="432.48" stroke="#585800" stroke-width="1.6" />
<line x1="1274.50" y1="424.67" x2="1791.50" y2="424.67" stroke="#585800" stroke-width="1.6" />
<line x1="1274.50" y1="419.13" x2="1791.50" y2="419.13" stroke="#585800" stroke-width="1.6" />
<line x1="1274.50" y1="401.49" x2="1791.50" y2="401.49" stroke="#585800" stroke-width="1.6" />
<line x1="1274.50" y1="388.14" x2="1791.50" y2="388.14" stroke="#585800" stroke-width="1.6" />
<line x1="1274.50" y1="380.34" x2="1791.50" y2="380.34" stroke="#585800" stroke-width="1.6" />
<line x1="1274.50" y1="374.80" x2="1791.50" y2="374.80" stroke="#585800" stroke-width="1.6" />
<line x1="1274.50" y1="357.15" x2="1791.50" y2="357.15" stroke="#585800" stroke-width="1.6" />
<line x1="1274.50" y1="343.81" x2="1791.50" y2="343.81" stroke="#585800" stroke-width="1.6" />
<line x1="1274.50" y1="336.00" x2="1791.50" y2="336.00" stroke="#585800" stroke-width="1.6" />
<line x1="1274.50" y1="330.46" x2="1791.50" y2="330.46" stroke="#585800" stroke-width="1.6" />
<line x1="1274.50" y1="312.82" x2="1791.50" y2="312.82" stroke="#585800" stroke-width="1.6" />
<line x1="1274.50" y1="299.48" x2="1791.50" y2="299.48" stroke="#585800" stroke-width="1.6" />
<line x1="1274.50" y1="291.67" x2="1791.50" y2="291.67" stroke="#585800" stroke-width="1.6" />
<line x1="1274.50" y1="286.13" x2="1791.50" y2="286.13" stroke="#585800" stroke-width="1.6" />
<line x1="1274.50" y1="268.49" x2="1791.50" y2="268.49" stroke="#585800" stroke-width="1.6" />
<line x1="1274.50" y1="255.14" x2="1791.50" y2="255.14" stroke="#585800" stroke-width="1.6" />
<line x1="1274.50" y1="247.34" x2="1791.50" y2="247.34" stroke="#585800" stroke-width="1.6" />
<line x1="1274.50" y1="241.80" x2="1791.50" y2="241.80" stroke="#585800" stroke-width="1.6" />
<line x1="1274.50" y1="224.15" x2="1791.50" y2="224.15" stroke="#585800" stroke-width="1.6" />
<line x1="1274.50" y1="210.81" x2="1791.50" y2="210.81" stroke="#585800" stroke-width="1.6" />
<line x1="1274.50" y1="203.00" x2="1791.50" y2="203.00" stroke="#585800" stroke-width="1.6" />
<line x1="1274.50" y1="197.46" x2="1791.50" y2="197.46" stroke="#585800" stroke-width="1.6" />
<line x1="1274.50" y1="179.82" x2="1791.50" y2="179.82" stroke="#585800" stroke-width="1.6" />
<line x1="1274.50" y1="166.48" x2="1791.50" y2="166.48" stroke="#585800" stroke-width="1.6" />
<line x1="1274.50" y1="158.67" x2="1791.50" y2="158.67" stroke="#585800" stroke-width="1.6" />
<line x1="1274.50" y1="153.13" x2="1791.50" y2="153.13" stroke="#585800" stroke-width="1.6" />
<line x1="1274.50" y1="135.49" x2="1791.50" y2="135.49" stroke="#585800" stroke-width="1.6" />
<line x1="1274.50" y1="122.14" x2="1791.50" y2="122.14" stroke="#585800" stroke-width="1.6" />
<line x1="1274.50" y1="114.34" x2="1791.50" y2="114.34" stroke="#585800" stroke-width="1.6" />
<line x1="1274.50" y1="108.80" x2="1791.50" y2="108.80" stroke="#585800" stroke-width="1.6" />
<line x1="1327.31" y1="104.00" x2="1327.31" y2="504.00" stroke="#8e8e00" stroke-width="1.7" />
<line x1="1378.82" y1="104.00" x2="1378.82" y2="504.00" stroke="#8e8e00" stroke-width="1.7" />
<line x1="1430.33" y1="104.00" x2="1430.33" y2="504.00" stroke="#8e8e00" stroke-width="1.7" />
<line x1="1481.84" y1="104.00" x2="1481.84" y2="504.00" stroke="#8e8e00" stroke-width="1.7" />
<line x1="1533.35" y1="104.00" x2="1533.35" y2="504.00" stroke="#8e8e00" stroke-width="1.7" />
<line x1="1584.86" y1="104.00" x2="1584.86" y2="504.00" stroke="#8e8e00" stroke-width="1.7" />
<line x1="1636.37" y1="104.00" x2="1636.37" y2="504.00" stroke="#8e8e00" stroke-width="1.7" />
<line x1="1687.88" y1="104.00" x2="1687.88" y2="504.00" stroke="#8e8e00" stroke-width="1.7" />
<line x1="1739.39" y1="104.00" x2="1739.39" y2="504.00" stroke="#8e8e00" stroke-width="1.7" />
<line x1="1274.50" y1="459.17" x2="1791.50" y2="459.17" stroke="#8e8e00" stroke-width="1.7" />
<line x1="1274.50" y1="414.83" x2="1791.50" y2="414.83" stroke="#8e8e00" stroke-width="1.7" />
<line x1="1274.50" y1="370.50" x2="1791.50" y2="370.50" stroke="#8e8e00" stroke-width="1.7" />
<line x1="1274.50" y1="326.17" x2="1791.50" y2="326.17" stroke="#8e8e00" stroke-width="1.7" />
<line x1="1274.50" y1="281.83" x2="1791.50" y2="281.83" stroke="#8e8e00" stroke-width="1.7" />
<line x1="1274.50" y1="237.50" x2="1791.50" y2="237.50" stroke="#8e8e00" stroke-width="1.7" />
<line x1="1274.50" y1="193.17" x2="1791.50" y2="193.17" stroke="#8e8e00" stroke-width="1.7" />
<line x1="1274.50" y1="148.83" x2="1791.50" y2="148.83" stroke="#8e8e00" stroke-width="1.7" />
<g clip-path="url(#clipP)">
<polyline points="1276.7,430.4 1282.7,430.4 1288.7,430.4 1288.7,428.8 1294.7,428.8 1300.7,428.8 1300.7,427.2 1306.7,427.2 1312.7,427.2 1318.7,427.2 1324.7,427.2 1324.7,425.6 1330.7,425.6 1336.7,425.6 1342.7,425.6 1348.7,425.6 1348.7,424.0 1354.7,424.0 1360.7,424.0 1366.7,424.0 1372.7,424.0 1378.7,424.0 1378.7,422.4 1384.7,422.4 1390.7,422.4 1396.7,422.4 1402.7,422.4 1408.7,422.4 1414.7,422.4 1420.7,422.4 1426.7,422.4 1432.7,422.4 1438.7,422.4 1438.7,424.0 1444.7,424.0 1450.7,424.0 1450.7,425.6 1456.7,425.6 1462.7,425.6 1468.7,425.6 1468.7,424.0 1474.7,424.0 1480.7,424.0 1486.7,424.0 1492.7,424.0 1498.7,424.0 1504.7,424.0 1510.7,424.0 1516.7,424.0 1522.7,424.0 1528.7,424.0 1534.7,424.0 1534.7,422.4 1540.7,422.4 1546.7,422.4 1546.7,420.8 1552.7,420.8 1558.7,420.8 1558.7,419.2 1564.7,419.2 1564.7,417.6 1570.7,417.6 1576.7,417.6 1576.7,416.0 1582.7,416.0 1588.7,416.0 1594.7,416.0 1594.7,414.4 1600.7,414.4 1606.7,414.4 1612.7,414.4 1618.7,414.4 1624.7,414.4 1624.7,419.2 1630.7,419.2 1630.7,422.4 1636.7,422.4 1636.7,425.6 1642.7,425.6 1642.7,428.8 1648.7,428.8 1654.7,428.8 1654.7,430.4 1660.7,430.4 1660.7,432.0 1666.7,432.0 1666.7,433.6 1672.7,433.6 1672.7,435.2 1678.7,435.2 1678.7,436.8 1684.7,436.8 1690.7,436.8 1690.7,438.4 1696.7,438.4 1702.7,438.4 1708.7,438.4 1708.7,440.0 1714.7,440.0 1720.7,440.0 1726.7,440.0 1732.7,440.0 1732.7,441.6 1738.7,441.6 1744.7,441.6" fill="none" stroke="#ffa000" stroke-width="1.5" stroke-linejoin="miter" />
<rect x="1275" y="490" width="497" height="14" fill="#4848ff"/>
<rect x="1275" y="490" width="26.5" height="14" fill="#000"/>
<rect x="1301.5" y="490" width="102" height="14" fill="#ff40c0"/>
<line x1="1283.0" y1="490.0" x2="1283.0" y2="504.0" stroke="#ff40c0" stroke-width="1.4"/>
<line x1="1286.5" y1="490.0" x2="1286.5" y2="504.0" stroke="#ff40c0" stroke-width="1.4"/>
<line x1="1290.6" y1="490.0" x2="1290.6" y2="504.0" stroke="#ff40c0" stroke-width="1.4"/>
<line x1="1296.0" y1="490.0" x2="1296.0" y2="504.0" stroke="#ff40c0" stroke-width="1.4"/>
<rect x="1275" y="502.6" width="130" height="1.6" fill="#ff40c0"/>
<rect x="1308.5" y="490" width="4" height="14" fill="#000"/>
<rect x="1327.7" y="490" width="1.4" height="14" fill="#000"/>
<rect x="1344" y="490" width="1.2" height="14" fill="#000"/>
<rect x="1353.8" y="490" width="1.2" height="14" fill="#000"/>
<rect x="1380" y="490" width="1" height="14" fill="#000"/>
<rect x="1392" y="490" width="1" height="14" fill="#000"/>
<line x1="1405.0" y1="490.0" x2="1405.0" y2="504.0" stroke="#ff40c0" stroke-width="1.2"/>
<line x1="1408.0" y1="490.0" x2="1408.0" y2="504.0" stroke="#ff40c0" stroke-width="1.2"/>
<line x1="1411.0" y1="490.0" x2="1411.0" y2="504.0" stroke="#ff40c0" stroke-width="1.2"/>
<line x1="1414.5" y1="490.0" x2="1414.5" y2="504.0" stroke="#ff40c0" stroke-width="1.2"/>
<line x1="1422.9" y1="490.0" x2="1422.9" y2="504.0" stroke="#ff40c0" stroke-width="1.2"/>
<line x1="1372.0" y1="490.0" x2="1372.0" y2="504.0" stroke="#101030" stroke-width="1.0"/>
<line x1="1431.8" y1="490.0" x2="1431.8" y2="504.0" stroke="#101030" stroke-width="1.0"/>
<line x1="1630.0" y1="490.0" x2="1630.0" y2="504.0" stroke="#101030" stroke-width="1.0"/>
<line x1="1634.0" y1="490.0" x2="1634.0" y2="504.0" stroke="#101030" stroke-width="1.0"/>
<line x1="1642.0" y1="490.0" x2="1642.0" y2="504.0" stroke="#101030" stroke-width="1.0"/>
<line x1="1650.0" y1="490.0" x2="1650.0" y2="504.0" stroke="#101030" stroke-width="1.0"/>
<line x1="1655.0" y1="490.0" x2="1655.0" y2="504.0" stroke="#101030" stroke-width="1.0"/>
<line x1="1660.0" y1="490.0" x2="1660.0" y2="504.0" stroke="#101030" stroke-width="1.0"/>
<line x1="1668.0" y1="490.0" x2="1668.0" y2="504.0" stroke="#101030" stroke-width="1.0"/>
<line x1="1678.0" y1="490.0" x2="1678.0" y2="504.0" stroke="#101030" stroke-width="1.0"/>
<line x1="1700.0" y1="490.0" x2="1700.0" y2="504.0" stroke="#101030" stroke-width="1.0"/>
<line x1="1703.0" y1="490.0" x2="1703.0" y2="504.0" stroke="#101030" stroke-width="1.0"/>
<line x1="1712.0" y1="490.0" x2="1712.0" y2="504.0" stroke="#101030" stroke-width="1.0"/>
<line x1="1722.0" y1="490.0" x2="1722.0" y2="504.0" stroke="#101030" stroke-width="1.0"/>
<line x1="1726.0" y1="490.0" x2="1726.0" y2="504.0" stroke="#101030" stroke-width="1.0"/>
<line x1="1740.0" y1="490.0" x2="1740.0" y2="504.0" stroke="#101030" stroke-width="1.0"/>
<line x1="1748.0" y1="490.0" x2="1748.0" y2="504.0" stroke="#101030" stroke-width="1.0"/>
<line x1="1763.0" y1="490.0" x2="1763.0" y2="504.0" stroke="#101030" stroke-width="1.0"/>
<line x1="1766.0" y1="490.0" x2="1766.0" y2="504.0" stroke="#101030" stroke-width="1.0"/>
<rect x="1301.5" y="484.0" width="2.5" height="6" fill="#ff40c0"/>
<rect x="1304.0" y="452.0" width="2.5" height="38" fill="#ff40c0"/>
<rect x="1306.5" y="460.0" width="1.2" height="30" fill="#ff40c0"/>
<rect x="1307.7" y="482.0" width="3" height="8" fill="#ff40c0"/>
<rect x="1310.7" y="455.0" width="1.5" height="35" fill="#ff40c0"/>
<rect x="1312.2" y="455.0" width="1.2" height="35" fill="#ff40c0"/>
<rect x="1315.4" y="484.0" width="1.5" height="6" fill="#ff40c0"/>
<rect x="1316.9" y="468.0" width="4" height="22" fill="#ff40c0"/>
<rect x="1321.9" y="468.0" width="2.5" height="22" fill="#ff40c0"/>
<rect x="1324.4" y="464.0" width="1.2" height="26" fill="#ff40c0"/>
<rect x="1325.6" y="484.0" width="2.5" height="6" fill="#ff40c0"/>
<rect x="1328.6" y="478.0" width="1.5" height="12" fill="#ff40c0"/>
<rect x="1330.6" y="472.0" width="2" height="18" fill="#ff40c0"/>
<rect x="1334.1" y="478.0" width="1.5" height="12" fill="#ff40c0"/>
<rect x="1337.6" y="478.0" width="2.5" height="12" fill="#ff40c0"/>
<rect x="1341.6" y="460.0" width="3" height="30" fill="#ff40c0"/>
<rect x="1344.6" y="484.0" width="1.5" height="6" fill="#ff40c0"/>
<rect x="1346.6" y="480.0" width="1.5" height="10" fill="#ff40c0"/>
<rect x="1348.1" y="452.0" width="2.5" height="38" fill="#ff40c0"/>
<rect x="1350.6" y="482.0" width="4" height="8" fill="#ff40c0"/>
<rect x="1356.1" y="470.0" width="4" height="20" fill="#ff40c0"/>
<rect x="1363.1" y="478.0" width="1.5" height="12" fill="#ff40c0"/>
<rect x="1367.6" y="472.0" width="4" height="18" fill="#ff40c0"/>
<rect x="1372.1" y="478.0" width="2" height="12" fill="#ff40c0"/>
<rect x="1376.1" y="478.0" width="2.5" height="12" fill="#ff40c0"/>
<rect x="1378.6" y="476.0" width="2" height="14" fill="#ff40c0"/>
<rect x="1381.1" y="474.0" width="3" height="16" fill="#ff40c0"/>
<rect x="1385.1" y="470.0" width="4" height="20" fill="#ff40c0"/>
<rect x="1391.1" y="474.0" width="1.5" height="16" fill="#ff40c0"/>
<rect x="1394.6" y="482.0" width="2" height="8" fill="#ff40c0"/>
<rect x="1396.6" y="468.0" width="3" height="22" fill="#ff40c0"/>
<rect x="1401.1" y="460.0" width="2" height="30" fill="#ff40c0"/>
<rect x="1403.1" y="480.0" width="1.5" height="10" fill="#ff40c0"/>
<rect x="1404.6" y="452.0" width="3" height="38" fill="#ff40c0"/>
<rect x="1408.1" y="455.0" width="1.2" height="35" fill="#ff40c0"/>
<rect x="1411.3" y="472.0" width="2" height="18" fill="#ff40c0"/>
<rect x="1413.8" y="460.0" width="1.5" height="30" fill="#ff40c0"/>
<rect x="1415.3" y="470.0" width="1.5" height="20" fill="#ff40c0"/>
<rect x="1419.8" y="474.0" width="2.5" height="16" fill="#ff40c0"/>
<rect x="1440" y="480" width="2" height="10" fill="#ff40c0"/>
<rect x="1442.5" y="476" width="2" height="14" fill="#ff40c0"/>
<rect x="1445.5" y="472" width="2" height="18" fill="#ff40c0"/>
<rect x="1448" y="480" width="2" height="10" fill="#ff40c0"/>
<polyline points="1274.5,490.0 1772.0,490.0" fill="none" stroke="#4848ff" stroke-width="2.0" stroke-linejoin="miter" />
<polygon points="1276.9,458.8 1325,458.8 1325,462.3 1381,462.3 1381,465 1409.8,465 1409.8,471.2 1381,471.2 1381,469.8 1325,469.8 1325,467.1 1276.9,467.1" fill="#ff4848"/>
<rect x="1403" y="454.7" width="6.5" height="9.6" fill="#ff4848"/>
<polyline points="1276.6,153.0 1276.6,252.0" fill="none" stroke="#00e000" stroke-width="1.4" stroke-linejoin="miter" />
<line x1="1278.0" y1="265.0" x2="1278.0" y2="470.0" stroke="#00ff00" stroke-width="1.4"/>
<polyline points="1283.2,482.0 1283.2,257.8 1290.0,257.8" fill="none" stroke="#40c0ff" stroke-width="1.5" stroke-linejoin="miter" />
<polyline points="1307.0,253.2 1311.0,253.2 1311.0,292.8 1313.0,295.0" fill="none" stroke="#40c0ff" stroke-width="1.5" stroke-linejoin="miter" />
<polyline points="1311.0,254.5 1331.0,254.5 1334.7,258.0 1334.7,295.5" fill="none" stroke="#c050ff" stroke-width="1.5" stroke-linejoin="miter" />
<line x1="1306.3" y1="307.0" x2="1306.3" y2="472.0" stroke="#c050ff" stroke-width="1.5"/>
<polyline points="1278.0,469.8 1290.6,469.8 1290.6,472.0 1306.4,472.0" fill="none" stroke="#c050ff" stroke-width="1.5" stroke-linejoin="miter" />
<line x1="1307.6" y1="266.0" x2="1307.6" y2="290.0" stroke="#d0ff70" stroke-width="1.3"/>
<polyline points="1278.0,266.0 1278.0,254.8 1303.7,254.8 1303.7,292.0 1306.0,299.0" fill="none" stroke="#ffffff" stroke-width="6.0" stroke-linejoin="miter" stroke-linejoin="round"/>
<path d="M1300.5,291 L1306,291 Q1310,296 1318,295 Q1326,293 1328,298 L1328,307 Q1322,312 1314,311 Q1304,310 1301,306 Z" fill="#fff"/>
<ellipse cx="1403" cy="302" rx="7" ry="5.5" fill="#fff"/>
<polygon points="1325.0,296.5 1325.8,296.4 1326.6,296.7 1327.4,296.6 1328.2,296.7 1329.0,296.1 1329.8,296.7 1330.6,294.1 1331.5,297.3 1332.3,297.0 1333.1,296.6 1333.9,297.0 1334.7,297.0 1335.5,296.4 1336.3,297.1 1337.1,296.8 1337.9,296.1 1338.7,297.1 1339.5,296.8 1340.3,296.2 1341.1,297.4 1341.9,297.1 1342.7,297.1 1343.5,296.9 1344.4,296.7 1345.2,297.1 1346.0,296.2 1346.8,296.4 1347.6,295.2 1348.4,296.4 1349.2,296.3 1350.0,297.2 1350.8,295.4 1351.6,296.4 1352.4,296.5 1353.2,296.6 1354.0,296.4 1354.8,296.4 1355.6,296.6 1356.5,297.0 1357.3,296.7 1358.1,296.9 1358.9,296.7 1359.7,296.7 1360.5,297.2 1361.3,296.3 1362.1,297.1 1362.9,296.3 1363.7,296.8 1364.5,297.4 1365.3,296.4 1366.1,296.3 1366.9,297.3 1367.7,296.3 1368.5,297.3 1369.4,296.3 1370.2,296.6 1371.0,297.5 1371.8,296.4 1372.6,297.1 1373.4,297.3 1374.2,297.1 1375.0,296.9 1375.8,297.4 1376.6,297.2 1377.4,296.4 1378.2,294.5 1379.0,296.5 1379.8,296.8 1380.6,297.0 1381.5,296.7 1382.3,297.1 1383.1,297.6 1383.9,297.1 1384.7,296.6 1385.5,296.4 1386.3,297.4 1387.1,296.7 1387.9,296.7 1388.7,297.3 1389.5,297.5 1390.3,296.5 1391.1,296.9 1391.9,297.0 1392.7,296.8 1393.5,297.4 1394.4,297.2 1395.2,297.3 1396.0,296.5 1396.8,297.3 1397.6,296.5 1398.4,297.2 1399.2,297.5 1400.0,296.5 1400.8,297.5 1401.6,297.3 1402.4,296.8 1403.2,297.0 1404.0,297.6 1404.8,297.2 1405.6,297.8 1406.4,296.8 1407.2,297.5 1408.0,297.0 1408.9,296.7 1409.7,297.6 1410.5,295.3 1411.3,297.8 1412.1,295.5 1412.9,297.3 1413.7,296.9 1414.5,297.6 1415.3,297.7 1416.1,296.7 1416.9,298.0 1417.7,297.4 1418.5,297.9 1419.3,297.0 1420.1,297.6 1420.9,297.0 1421.7,296.8 1422.5,297.6 1423.3,298.1 1424.1,296.9 1424.9,297.7 1425.7,297.7 1426.6,297.1 1427.4,298.0 1428.2,297.9 1429.0,295.8 1429.8,297.0 1430.6,297.6 1431.4,297.9 1432.2,298.1 1433.0,297.2 1433.8,297.2 1434.6,295.2 1435.4,297.2 1436.2,297.8 1437.0,297.9 1437.8,297.5 1438.6,298.2 1439.4,298.1 1440.2,297.8 1441.0,298.3 1441.8,297.2 1442.6,297.8 1443.4,297.9 1444.3,298.1 1445.1,297.8 1445.9,297.5 1446.7,297.5 1447.5,297.9 1448.3,297.3 1449.1,297.6 1449.9,298.4 1450.7,298.2 1451.5,297.5 1452.3,298.3 1453.1,297.6 1453.9,298.3 1454.7,297.6 1455.5,297.8 1456.3,297.5 1457.1,298.1 1457.9,298.4 1458.7,298.2 1459.5,297.8 1460.3,298.6 1461.1,297.8 1462.0,297.6 1462.8,297.8 1463.6,296.6 1464.4,298.5 1465.2,297.4 1466.0,297.9 1466.8,298.0 1467.6,298.6 1468.4,297.5 1469.2,298.2 1470.0,298.1 1470.0,307.0 1469.2,306.7 1468.4,306.5 1467.6,306.3 1466.8,307.2 1466.0,307.0 1465.2,306.7 1464.4,307.2 1463.6,307.1 1462.8,306.7 1462.0,307.3 1461.1,306.6 1460.3,306.8 1459.5,307.3 1458.7,306.9 1457.9,306.8 1457.1,306.5 1456.3,306.9 1455.5,307.2 1454.7,307.5 1453.9,307.3 1453.1,306.2 1452.3,309.1 1451.5,307.1 1450.7,306.2 1449.9,307.1 1449.1,306.6 1448.3,306.6 1447.5,306.6 1446.7,306.0 1445.9,306.7 1445.1,306.2 1444.3,306.3 1443.4,306.6 1442.6,306.1 1441.8,306.8 1441.0,306.2 1440.2,306.1 1439.4,306.8 1438.6,306.3 1437.8,306.8 1437.0,306.4 1436.2,305.8 1435.4,306.2 1434.6,306.8 1433.8,306.4 1433.0,306.6 1432.2,306.5 1431.4,307.7 1430.6,306.3 1429.8,305.7 1429.0,306.7 1428.2,306.6 1427.4,308.7 1426.6,306.6 1425.7,306.0 1424.9,306.6 1424.1,306.7 1423.3,306.4 1422.5,306.1 1421.7,306.4 1420.9,306.7 1420.1,305.8 1419.3,306.7 1418.5,306.4 1417.7,305.7 1416.9,306.5 1416.1,305.8 1415.3,306.6 1414.5,306.0 1413.7,305.7 1412.9,306.3 1412.1,306.3 1411.3,306.2 1410.5,306.5 1409.7,306.4 1408.9,306.1 1408.0,306.1 1407.2,305.6 1406.4,306.1 1405.6,305.7 1404.8,305.9 1404.0,305.8 1403.2,305.7 1402.4,306.0 1401.6,306.1 1400.8,306.1 1400.0,305.8 1399.2,306.2 1398.4,306.2 1397.6,306.0 1396.8,306.2 1396.0,305.3 1395.2,305.8 1394.4,305.7 1393.5,305.2 1392.7,305.7 1391.9,306.3 1391.1,305.9 1390.3,305.3 1389.5,305.3 1388.7,305.7 1387.9,306.0 1387.1,306.1 1386.3,305.7 1385.5,306.2 1384.7,305.5 1383.9,305.2 1383.1,305.2 1382.3,306.1 1381.5,305.4 1380.6,306.3 1379.8,306.1 1379.0,306.1 1378.2,305.6 1377.4,306.0 1376.6,306.3 1375.8,305.9 1375.0,306.3 1374.2,305.4 1373.4,306.1 1372.6,305.8 1371.8,305.7 1371.0,306.0 1370.2,305.6 1369.4,306.2 1368.5,305.9 1367.7,306.1 1366.9,306.0 1366.1,306.0 1365.3,305.9 1364.5,305.4 1363.7,306.0 1362.9,305.5 1362.1,305.5 1361.3,305.8 1360.5,305.6 1359.7,305.7 1358.9,307.6 1358.1,305.4 1357.3,305.8 1356.5,305.2 1355.6,305.5 1354.8,305.1 1354.0,305.4 1353.2,306.1 1352.4,305.7 1351.6,305.3 1350.8,305.1 1350.0,305.0 1349.2,305.5 1348.4,305.4 1347.6,305.5 1346.8,305.9 1346.0,305.9 1345.2,305.3 1344.4,304.9 1343.5,305.7 1342.7,305.5 1341.9,305.7 1341.1,305.0 1340.3,305.2 1339.5,305.9 1338.7,305.9 1337.9,305.9 1337.1,305.4 1336.3,305.4 1335.5,305.0 1334.7,305.0 1333.9,305.8 1333.1,304.9 1332.3,305.8 1331.5,307.8 1330.6,305.6 1329.8,305.8 1329.0,304.8 1328.2,305.6 1327.4,305.3 1326.6,305.8 1325.8,305.5 1325.0,306.0" fill="#ffffff" stroke="#ffffff" stroke-width="1.4"/>
<line x1="1335.0" y1="293.0" x2="1335.0" y2="297.0" stroke="#40c0ff" stroke-width="1.2"/>
<line x1="1342.0" y1="293.0" x2="1342.0" y2="297.0" stroke="#40c0ff" stroke-width="1.2"/>
<line x1="1351.0" y1="293.0" x2="1351.0" y2="297.0" stroke="#40c0ff" stroke-width="1.2"/>
<line x1="1358.0" y1="293.0" x2="1358.0" y2="297.0" stroke="#40c0ff" stroke-width="1.2"/>
<line x1="1367.0" y1="293.0" x2="1367.0" y2="297.0" stroke="#40c0ff" stroke-width="1.2"/>
<line x1="1378.0" y1="293.0" x2="1378.0" y2="297.0" stroke="#40c0ff" stroke-width="1.2"/>
<line x1="1391.0" y1="293.0" x2="1391.0" y2="297.0" stroke="#40c0ff" stroke-width="1.2"/>
<polyline points="1472.0,256.0 1472.0,252.2 1514.8,252.2 1514.8,298.0 1518.0,303.0" fill="none" stroke="#ffffff" stroke-width="6.0" stroke-linejoin="miter" stroke-linejoin="round"/>
<polygon points="1470.0,299.4 1470.8,299.6 1471.6,300.0 1472.4,299.7 1473.2,300.3 1474.0,300.0 1474.8,299.7 1475.6,300.2 1476.5,300.2 1477.3,299.5 1478.1,299.7 1478.9,299.8 1479.7,300.3 1480.5,300.0 1481.3,299.8 1482.1,300.3 1482.9,300.4 1483.7,300.0 1484.5,300.1 1485.3,299.8 1486.1,300.3 1486.9,299.5 1487.8,299.8 1488.6,299.9 1489.4,300.4 1490.2,300.1 1491.0,300.0 1491.8,299.6 1492.6,300.1 1493.4,300.1 1494.2,300.3 1495.0,299.8 1495.8,300.3 1496.6,300.4 1497.4,299.6 1498.2,299.7 1499.1,300.2 1499.9,300.4 1500.7,300.4 1501.5,299.5 1502.3,300.4 1503.1,299.7 1503.9,299.5 1504.7,300.2 1505.5,299.9 1506.3,299.8 1507.1,299.8 1507.9,299.9 1508.7,299.5 1509.5,300.0 1510.4,300.5 1511.2,299.7 1512.0,300.2 1512.8,300.0 1513.6,300.2 1514.4,299.9 1515.2,300.4 1516.0,300.3 1516.0,305.9 1515.2,305.7 1514.4,305.7 1513.6,306.3 1512.8,305.8 1512.0,306.1 1511.2,306.2 1510.4,305.5 1509.5,306.5 1508.7,305.9 1507.9,306.1 1507.1,306.2 1506.3,305.9 1505.5,305.5 1504.7,306.2 1503.9,306.5 1503.1,306.5 1502.3,305.9 1501.5,306.0 1500.7,306.1 1499.9,305.8 1499.1,305.8 1498.2,305.7 1497.4,306.0 1496.6,306.6 1495.8,305.6 1495.0,305.7 1494.2,306.3 1493.4,306.4 1492.6,305.5 1491.8,306.6 1491.0,305.9 1490.2,306.4 1489.4,305.9 1488.6,305.8 1487.8,305.9 1486.9,306.6 1486.1,305.6 1485.3,306.3 1484.5,306.3 1483.7,306.1 1482.9,305.8 1482.1,306.1 1481.3,306.5 1480.5,305.9 1479.7,305.9 1478.9,305.6 1478.1,305.8 1477.3,306.3 1476.5,306.0 1475.6,306.1 1474.8,306.5 1474.0,306.3 1473.2,306.2 1472.4,306.2 1471.6,306.6 1470.8,305.6 1470.0,306.4" fill="#ff4848" stroke="#ff4848" stroke-width="1.4"/>
<polygon points="1516.0,298.7 1516.8,299.6 1517.6,298.8 1518.4,299.6 1519.2,299.6 1520.0,298.7 1520.8,299.8 1521.6,299.4 1522.4,299.1 1523.2,299.7 1524.0,299.7 1524.8,299.4 1525.6,299.5 1526.4,299.2 1527.2,299.7 1528.0,298.9 1528.8,299.3 1529.6,299.8 1530.4,299.9 1531.2,299.0 1532.0,299.6 1532.8,299.6 1533.6,299.6 1534.4,299.8 1535.2,299.8 1536.0,299.9 1536.8,299.5 1537.6,299.1 1538.4,298.7 1539.2,299.0 1540.0,299.0 1540.8,299.0 1541.6,299.9 1542.4,299.6 1543.2,298.9 1544.0,299.8 1544.8,298.8 1545.6,298.8 1546.4,299.9 1547.2,298.8 1548.0,299.2 1548.8,299.7 1549.6,299.8 1550.4,298.9 1551.2,298.9 1552.0,299.5 1552.8,299.6 1553.6,299.4 1554.4,299.2 1555.2,299.7 1556.0,299.6 1556.8,298.8 1557.6,299.2 1558.4,298.9 1559.2,299.7 1560.0,299.8 1560.8,299.2 1561.6,299.6 1562.4,298.8 1563.2,299.4 1564.0,299.2 1564.8,298.8 1565.6,299.2 1566.4,299.1 1567.2,299.1 1568.0,298.7 1568.8,298.7 1569.6,298.9 1570.4,298.8 1571.2,299.7 1572.0,299.6 1572.8,298.7 1573.6,298.8 1574.4,299.9 1575.2,299.4 1576.0,298.8 1576.8,298.8 1577.6,299.0 1578.4,299.2 1579.2,299.3 1580.0,299.7 1580.8,299.0 1581.6,298.8 1582.4,299.6 1583.2,299.6 1584.0,299.5 1584.8,299.5 1585.6,299.5 1586.4,298.7 1587.2,299.8 1588.0,299.0 1588.8,299.7 1589.6,298.8 1590.4,299.2 1591.2,299.1 1592.0,299.7 1592.8,299.0 1593.6,299.8 1594.4,299.9 1595.2,299.7 1596.0,299.0 1596.8,299.0 1597.6,299.7 1598.4,299.6 1599.2,299.0 1600.0,299.0 1600.8,298.7 1601.6,299.1 1602.4,299.1 1603.2,298.9 1604.0,299.7 1604.8,299.1 1605.6,299.4 1606.5,299.6 1607.3,299.5 1608.1,299.6 1608.9,298.7 1609.7,299.7 1610.5,298.9 1611.3,298.9 1612.1,299.6 1612.9,299.1 1613.7,299.2 1614.5,299.6 1615.3,298.8 1616.1,299.8 1616.9,298.9 1617.7,299.9 1618.5,299.3 1619.3,299.8 1620.2,299.1 1621.0,298.7 1621.8,299.1 1622.6,299.1 1623.4,299.7 1624.2,298.9 1625.0,299.5 1625.8,299.8 1626.6,299.2 1627.4,299.5 1628.2,299.8 1629.0,299.2 1629.8,299.2 1630.6,299.7 1631.4,299.5 1632.2,299.2 1633.1,298.9 1633.9,299.0 1634.7,299.4 1635.5,298.8 1636.3,299.5 1637.1,299.9 1637.9,299.7 1638.7,299.3 1639.5,298.9 1640.3,299.9 1641.1,299.5 1641.9,298.9 1642.7,299.8 1643.5,299.0 1644.3,299.7 1645.2,299.5 1646.0,299.7 1646.8,299.4 1647.6,299.9 1648.4,298.9 1649.2,299.4 1650.0,298.9 1650.8,298.8 1651.6,298.7 1652.4,298.9 1653.2,299.2 1654.0,299.0 1654.8,299.3 1655.6,299.0 1656.4,298.8 1657.2,299.6 1658.0,298.9 1658.9,299.5 1659.7,299.6 1660.5,299.8 1661.3,299.4 1662.1,299.2 1662.9,298.9 1663.7,298.8 1664.5,298.9 1664.5,307.5 1663.7,307.6 1662.9,307.7 1662.1,308.3 1661.3,307.6 1660.5,307.6 1659.7,308.1 1658.9,307.7 1658.0,307.8 1657.2,307.3 1656.4,307.2 1655.6,308.1 1654.8,307.2 1654.0,307.9 1653.2,308.0 1652.4,308.0 1651.6,307.7 1650.8,307.1 1650.0,307.6 1649.2,307.4 1648.4,307.7 1647.6,307.6 1646.8,307.4 1646.0,308.0 1645.2,308.2 1644.3,307.2 1643.5,307.4 1642.7,308.0 1641.9,307.6 1641.1,307.1 1640.3,308.2 1639.5,307.4 1638.7,307.2 1637.9,307.4 1637.1,307.3 1636.3,308.2 1635.5,307.5 1634.7,307.5 1633.9,307.6 1633.1,307.7 1632.2,307.3 1631.4,307.9 1630.6,308.2 1629.8,308.2 1629.0,307.8 1628.2,308.3 1627.4,307.6 1626.6,308.2 1625.8,307.8 1625.0,307.6 1624.2,307.3 1623.4,307.7 1622.6,307.7 1621.8,308.1 1621.0,307.5 1620.2,308.2 1619.3,307.6 1618.5,307.9 1617.7,307.4 1616.9,307.3 1616.1,307.3 1615.3,307.2 1614.5,307.2 1613.7,307.1 1612.9,308.1 1612.1,307.9 1611.3,307.3 1610.5,307.9 1609.7,307.7 1608.9,307.5 1608.1,307.7 1607.3,307.9 1606.5,307.8 1605.6,307.2 1604.8,308.0 1604.0,307.4 1603.2,308.1 1602.4,307.6 1601.6,308.0 1600.8,307.7 1600.0,307.4 1599.2,308.2 1598.4,307.5 1597.6,307.5 1596.8,308.1 1596.0,308.0 1595.2,307.3 1594.4,308.2 1593.6,307.8 1592.8,307.4 1592.0,307.3 1591.2,308.0 1590.4,307.8 1589.6,307.2 1588.8,308.1 1588.0,307.7 1587.2,307.7 1586.4,307.8 1585.6,308.2 1584.8,307.4 1584.0,308.0 1583.2,308.3 1582.4,308.2 1581.6,308.2 1580.8,308.2 1580.0,307.3 1579.2,307.4 1578.4,307.8 1577.6,307.5 1576.8,308.0 1576.0,307.3 1575.2,307.4 1574.4,307.4 1573.6,307.3 1572.8,307.3 1572.0,307.2 1571.2,307.2 1570.4,307.6 1569.6,307.7 1568.8,307.3 1568.0,307.7 1567.2,307.5 1566.4,308.2 1565.6,307.6 1564.8,307.9 1564.0,308.0 1563.2,308.2 1562.4,308.2 1561.6,308.3 1560.8,307.4 1560.0,308.3 1559.2,308.0 1558.4,307.9 1557.6,307.9 1556.8,307.9 1556.0,307.5 1555.2,307.3 1554.4,307.5 1553.6,307.5 1552.8,307.5 1552.0,307.3 1551.2,307.7 1550.4,308.2 1549.6,307.2 1548.8,307.6 1548.0,307.5 1547.2,307.6 1546.4,307.2 1545.6,307.9 1544.8,307.4 1544.0,307.2 1543.2,307.9 1542.4,308.1 1541.6,308.3 1540.8,307.5 1540.0,307.3 1539.2,308.2 1538.4,307.9 1537.6,308.0 1536.8,308.3 1536.0,307.6 1535.2,307.8 1534.4,307.8 1533.6,307.3 1532.8,307.1 1532.0,307.2 1531.2,307.2 1530.4,307.9 1529.6,307.2 1528.8,308.1 1528.0,307.2 1527.2,307.2 1526.4,307.2 1525.6,308.1 1524.8,308.1 1524.0,307.6 1523.2,307.9 1522.4,307.6 1521.6,308.2 1520.8,307.7 1520.0,307.5 1519.2,307.8 1518.4,307.1 1517.6,307.6 1516.8,308.0 1516.0,307.9" fill="#ffffff" stroke="#ffffff" stroke-width="1.4"/>
<polyline points="1407.0,265.1 1407.0,255.2 1434.7,255.2 1434.7,285.6 1436.0,297.0" fill="none" stroke="#ff4848" stroke-width="6.6" stroke-linejoin="miter" stroke-linejoin="round"/>
<polyline points="1580.5,262.0 1580.5,254.2 1602.6,254.2 1602.6,285.0 1604.0,299.7" fill="none" stroke="#ff4848" stroke-width="6.6" stroke-linejoin="miter" stroke-linejoin="round"/>
<polyline points="1677.3,262.0 1677.3,254.2 1701.2,254.2 1701.2,290.0 1706.0,303.5 1742.0,303.5" fill="none" stroke="#ff4848" stroke-width="6.6" stroke-linejoin="miter" stroke-linejoin="round"/>
<polyline points="1664.5,303.0 1670.0,303.0" fill="none" stroke="#ff4848" stroke-width="6" stroke-linejoin="miter" />
<rect x="1433.2" y="262" width="3" height="1.4" fill="#601010"/>
<rect x="1601" y="262" width="3" height="1.4" fill="#601010"/>
<rect x="1700" y="262" width="3" height="1.4" fill="#601010"/>
<rect x="1433.2" y="267" width="3" height="1.4" fill="#601010"/>
<rect x="1601" y="267" width="3" height="1.4" fill="#601010"/>
<rect x="1700" y="267" width="3" height="1.4" fill="#601010"/>
<rect x="1433.2" y="272" width="3" height="1.4" fill="#601010"/>
<rect x="1601" y="272" width="3" height="1.4" fill="#601010"/>
<rect x="1700" y="272" width="3" height="1.4" fill="#601010"/>
<rect x="1433.2" y="277" width="3" height="1.4" fill="#601010"/>
<rect x="1601" y="277" width="3" height="1.4" fill="#601010"/>
<rect x="1700" y="277" width="3" height="1.4" fill="#601010"/>
<rect x="1433.2" y="282" width="3" height="1.4" fill="#601010"/>
<rect x="1601" y="282" width="3" height="1.4" fill="#601010"/>
<rect x="1700" y="282" width="3" height="1.4" fill="#601010"/>
<rect x="1433.2" y="287" width="3" height="1.4" fill="#601010"/>
<rect x="1601" y="287" width="3" height="1.4" fill="#601010"/>
<rect x="1700" y="287" width="3" height="1.4" fill="#601010"/>
<rect x="1433.2" y="292" width="3" height="1.4" fill="#601010"/>
<rect x="1601" y="292" width="3" height="1.4" fill="#601010"/>
<rect x="1700" y="292" width="3" height="1.4" fill="#601010"/>
<rect x="1302" y="261" width="3.2" height="1.4" fill="#303030"/>
<rect x="1302" y="266" width="3.2" height="1.4" fill="#303030"/>
<rect x="1302" y="275" width="3.2" height="1.4" fill="#303030"/>
<rect x="1302" y="283" width="3.2" height="1.4" fill="#303030"/>
<polyline points="1463.4,168.0 1463.4,469.0 1466.7,469.0 1466.7,260.0 1471.0,252.0" fill="none" stroke="#00ff00" stroke-width="1.5" stroke-linejoin="miter" />
<line x1="1493.0" y1="256.0" x2="1493.0" y2="300.0" stroke="#00ff00" stroke-width="1.3"/>
<line x1="1498.5" y1="306.0" x2="1498.5" y2="477.0" stroke="#c050ff" stroke-width="1.5"/>
<line x1="1519.2" y1="306.0" x2="1519.2" y2="477.0" stroke="#d0ff70" stroke-width="1.5"/>
<polyline points="1643.8,133.0 1643.8,476.8 1655.7,476.8" fill="none" stroke="#00ff00" stroke-width="1.6" stroke-linejoin="miter" />
<line x1="1471.8" y1="199.7" x2="1471.8" y2="477.0" stroke="#ffffff" stroke-width="1.6"/>
<line x1="1475.0" y1="300.0" x2="1475.0" y2="477.0" stroke="#ffffff" stroke-width="1.6"/>
<rect x="1469.0" y="199.0" width="5.6" height="5.6" fill="none" stroke="#ffffff" stroke-width="1.3"/>
<rect x="1469.0" y="225.8" width="5.6" height="5.6" fill="none" stroke="#ffffff" stroke-width="1.3"/>
<rect x="1467.2" y="308.9" width="5.6" height="5.6" fill="none" stroke="#ffffff" stroke-width="1.3"/>
<rect x="1472.9" y="318.9" width="5.6" height="5.6" fill="none" stroke="#ffffff" stroke-width="1.3"/>
<rect x="1467.2" y="324.0" width="5.6" height="5.6" fill="none" stroke="#ffffff" stroke-width="1.3"/>
<rect x="1471.6" y="364.2" width="5.6" height="5.6" fill="none" stroke="#ffffff" stroke-width="1.3"/>
<rect x="1467.2" y="369.2" width="5.6" height="5.6" fill="none" stroke="#ffffff" stroke-width="1.3"/>
<rect x="1471.6" y="397.2" width="5.6" height="5.6" fill="none" stroke="#ffffff" stroke-width="1.3"/>
<rect x="1470.6" y="474.5" width="5.6" height="5.6" fill="none" stroke="#ffffff" stroke-width="1.3"/>
<rect x="1467" y="403" width="6" height="8" fill="#fff"/>
<line x1="1663.5" y1="184.0" x2="1663.5" y2="414.0" stroke="#ffffff" stroke-width="1.8"/>
<rect x="1660.7" y="181.2" width="5.6" height="5.6" fill="none" stroke="#ffffff" stroke-width="1.3"/>
<rect x="1660.7" y="185.7" width="5.6" height="5.6" fill="none" stroke="#ffffff" stroke-width="1.3"/>
<rect x="1660.7" y="195.2" width="5.6" height="5.6" fill="none" stroke="#ffffff" stroke-width="1.3"/>
<rect x="1660.7" y="200.2" width="5.6" height="5.6" fill="none" stroke="#ffffff" stroke-width="1.3"/>
<rect x="1660.7" y="310.2" width="5.6" height="5.6" fill="none" stroke="#ffffff" stroke-width="1.3"/>
<rect x="1660.7" y="319.2" width="5.6" height="5.6" fill="none" stroke="#ffffff" stroke-width="1.3"/>
<rect x="1660.7" y="347.2" width="5.6" height="5.6" fill="none" stroke="#ffffff" stroke-width="1.3"/>
<rect x="1660.7" y="369.2" width="5.6" height="5.6" fill="none" stroke="#ffffff" stroke-width="1.3"/>
<rect x="1660.7" y="401.2" width="5.6" height="5.6" fill="none" stroke="#ffffff" stroke-width="1.3"/>
<rect x="1660" y="406" width="7" height="9" fill="#fff"/>
<rect x="1403.7" y="318.9" width="5.6" height="5.6" fill="none" stroke="#ff4848" stroke-width="1.3"/>
<rect x="1403.7" y="364.1" width="5.6" height="5.6" fill="none" stroke="#ff4848" stroke-width="1.3"/>
<rect x="1403.7" y="369.1" width="5.6" height="5.6" fill="none" stroke="#ff4848" stroke-width="1.3"/>
<rect x="1574.6" y="129.2" width="5.6" height="5.6" fill="none" stroke="#ff4848" stroke-width="1.3"/>
<rect x="1573.2" y="155.6" width="5.6" height="5.6" fill="none" stroke="#ff4848" stroke-width="1.3"/>
<rect x="1670.2" y="130.4" width="5.6" height="5.6" fill="none" stroke="#ff4848" stroke-width="1.3"/>
<rect x="1574.2" y="319.2" width="5.6" height="5.6" fill="none" stroke="#ff4848" stroke-width="1.3"/>
<rect x="1574.2" y="325.2" width="5.6" height="5.6" fill="none" stroke="#ff4848" stroke-width="1.3"/>
<rect x="1574.2" y="366.2" width="5.6" height="5.6" fill="none" stroke="#ff4848" stroke-width="1.3"/>
<rect x="1574.2" y="369.2" width="5.6" height="5.6" fill="none" stroke="#ff4848" stroke-width="1.3"/>
<rect x="1574.2" y="399.2" width="5.6" height="5.6" fill="none" stroke="#ff4848" stroke-width="1.3"/>
<rect x="1574.2" y="404.2" width="5.6" height="5.6" fill="none" stroke="#ff4848" stroke-width="1.3"/>
<rect x="1574.2" y="457.2" width="5.6" height="5.6" fill="none" stroke="#ff4848" stroke-width="1.3"/>
<rect x="1577.2" y="457.2" width="5.6" height="5.6" fill="none" stroke="#ff4848" stroke-width="1.3"/>
<rect x="1671.2" y="310.2" width="5.6" height="5.6" fill="none" stroke="#ff4848" stroke-width="1.3"/>
<rect x="1671.2" y="319.2" width="5.6" height="5.6" fill="none" stroke="#ff4848" stroke-width="1.3"/>
<rect x="1671.2" y="325.2" width="5.6" height="5.6" fill="none" stroke="#ff4848" stroke-width="1.3"/>
<rect x="1671.2" y="365.2" width="5.6" height="5.6" fill="none" stroke="#ff4848" stroke-width="1.3"/>
<rect x="1671.2" y="368.2" width="5.6" height="5.6" fill="none" stroke="#ff4848" stroke-width="1.3"/>
<rect x="1671.2" y="402.2" width="5.6" height="5.6" fill="none" stroke="#ff4848" stroke-width="1.3"/>
<rect x="1671.2" y="458.2" width="5.6" height="5.6" fill="none" stroke="#ff4848" stroke-width="1.3"/>
<rect x="1674.2" y="458.2" width="5.6" height="5.6" fill="none" stroke="#ff4848" stroke-width="1.3"/>
<rect x="1736.2" y="308.2" width="5.6" height="5.6" fill="none" stroke="#ff4848" stroke-width="1.3"/>
<rect x="1736.2" y="325.2" width="5.6" height="5.6" fill="none" stroke="#ff4848" stroke-width="1.3"/>
<rect x="1736.2" y="369.2" width="5.6" height="5.6" fill="none" stroke="#ff4848" stroke-width="1.3"/>
<rect x="1736.2" y="397.2" width="5.6" height="5.6" fill="none" stroke="#ff4848" stroke-width="1.3"/>
<rect x="1736.2" y="469.2" width="5.6" height="5.6" fill="none" stroke="#ff4848" stroke-width="1.3"/>
<rect x="1584.2" y="325.2" width="5.6" height="5.6" fill="none" stroke="#ff4848" stroke-width="1.3"/>
<rect x="1675.2" y="319.2" width="5.6" height="5.6" fill="none" stroke="#ff4848" stroke-width="1.3"/>
<rect x="1677.2" y="367.2" width="5.6" height="5.6" fill="none" stroke="#ff4848" stroke-width="1.3"/>
<rect x="1675.2" y="405.2" width="5.6" height="5.6" fill="none" stroke="#ff4848" stroke-width="1.3"/>
</g>
<text transform="translate(1263.00 509.70) scale(0.86 1)" font-family="Liberation Sans" font-size="15.6" font-weight="normal" text-anchor="end" fill="#1a1a1a">1E-9</text>
<line x1="1266.00" y1="503.50" x2="1273.00" y2="503.50" stroke="#141414" stroke-width="1.6" />
<text transform="translate(1263.00 465.37) scale(0.86 1)" font-family="Liberation Sans" font-size="15.6" font-weight="normal" text-anchor="end" fill="#1a1a1a">1E-8</text>
<line x1="1266.00" y1="459.17" x2="1273.00" y2="459.17" stroke="#141414" stroke-width="1.6" />
<text transform="translate(1263.00 421.03) scale(0.86 1)" font-family="Liberation Sans" font-size="15.6" font-weight="normal" text-anchor="end" fill="#1a1a1a">1E-7</text>
<line x1="1266.00" y1="414.83" x2="1273.00" y2="414.83" stroke="#141414" stroke-width="1.6" />
<text transform="translate(1263.00 376.70) scale(0.86 1)" font-family="Liberation Sans" font-size="15.6" font-weight="normal" text-anchor="end" fill="#1a1a1a">1E-6</text>
<line x1="1266.00" y1="370.50" x2="1273.00" y2="370.50" stroke="#141414" stroke-width="1.6" />
<text transform="translate(1263.00 332.37) scale(0.86 1)" font-family="Liberation Sans" font-size="15.6" font-weight="normal" text-anchor="end" fill="#1a1a1a">1E-5</text>
<line x1="1266.00" y1="326.17" x2="1273.00" y2="326.17" stroke="#141414" stroke-width="1.6" />
<text transform="translate(1263.00 288.03) scale(0.86 1)" font-family="Liberation Sans" font-size="15.6" font-weight="normal" text-anchor="end" fill="#1a1a1a">0.0001</text>
<line x1="1266.00" y1="281.83" x2="1273.00" y2="281.83" stroke="#141414" stroke-width="1.6" />
<text transform="translate(1263.00 243.70) scale(0.86 1)" font-family="Liberation Sans" font-size="15.6" font-weight="normal" text-anchor="end" fill="#1a1a1a">0.001</text>
<line x1="1266.00" y1="237.50" x2="1273.00" y2="237.50" stroke="#141414" stroke-width="1.6" />
<text transform="translate(1263.00 199.37) scale(0.86 1)" font-family="Liberation Sans" font-size="15.6" font-weight="normal" text-anchor="end" fill="#1a1a1a">0.01</text>
<line x1="1266.00" y1="193.17" x2="1273.00" y2="193.17" stroke="#141414" stroke-width="1.6" />
<text transform="translate(1263.00 155.03) scale(0.86 1)" font-family="Liberation Sans" font-size="15.6" font-weight="normal" text-anchor="end" fill="#1a1a1a">0.1</text>
<line x1="1266.00" y1="148.83" x2="1273.00" y2="148.83" stroke="#141414" stroke-width="1.6" />
<text transform="translate(1263.00 110.70) scale(0.86 1)" font-family="Liberation Sans" font-size="15.6" font-weight="normal" text-anchor="end" fill="#1a1a1a">1</text>
<line x1="1266.00" y1="104.50" x2="1273.00" y2="104.50" stroke="#141414" stroke-width="1.6" />
<line x1="1275.80" y1="507.00" x2="1275.80" y2="513.00" stroke="#141414" stroke-width="1.6" />
<text transform="translate(1275.80 528.00) scale(0.86 1)" font-family="Liberation Sans" font-size="15.6" font-weight="normal" text-anchor="middle" fill="#1a1a1a">0</text>
<line x1="1327.31" y1="507.00" x2="1327.31" y2="513.00" stroke="#141414" stroke-width="1.6" />
<text transform="translate(1327.31 528.00) scale(0.86 1)" font-family="Liberation Sans" font-size="15.6" font-weight="normal" text-anchor="middle" fill="#1a1a1a">1000</text>
<line x1="1378.82" y1="507.00" x2="1378.82" y2="513.00" stroke="#141414" stroke-width="1.6" />
<text transform="translate(1378.82 528.00) scale(0.86 1)" font-family="Liberation Sans" font-size="15.6" font-weight="normal" text-anchor="middle" fill="#1a1a1a">2000</text>
<line x1="1430.33" y1="507.00" x2="1430.33" y2="513.00" stroke="#141414" stroke-width="1.6" />
<text transform="translate(1430.33 528.00) scale(0.86 1)" font-family="Liberation Sans" font-size="15.6" font-weight="normal" text-anchor="middle" fill="#1a1a1a">3000</text>
<line x1="1481.84" y1="507.00" x2="1481.84" y2="513.00" stroke="#141414" stroke-width="1.6" />
<text transform="translate(1481.84 528.00) scale(0.86 1)" font-family="Liberation Sans" font-size="15.6" font-weight="normal" text-anchor="middle" fill="#1a1a1a">4000</text>
<line x1="1533.35" y1="507.00" x2="1533.35" y2="513.00" stroke="#141414" stroke-width="1.6" />
<text transform="translate(1533.35 528.00) scale(0.86 1)" font-family="Liberation Sans" font-size="15.6" font-weight="normal" text-anchor="middle" fill="#1a1a1a">5000</text>
<line x1="1584.86" y1="507.00" x2="1584.86" y2="513.00" stroke="#141414" stroke-width="1.6" />
<text transform="translate(1584.86 528.00) scale(0.86 1)" font-family="Liberation Sans" font-size="15.6" font-weight="normal" text-anchor="middle" fill="#1a1a1a">6000</text>
<line x1="1636.37" y1="507.00" x2="1636.37" y2="513.00" stroke="#141414" stroke-width="1.6" />
<text transform="translate(1636.37 528.00) scale(0.86 1)" font-family="Liberation Sans" font-size="15.6" font-weight="normal" text-anchor="middle" fill="#1a1a1a">7000</text>
<line x1="1687.88" y1="507.00" x2="1687.88" y2="513.00" stroke="#141414" stroke-width="1.6" />
<text transform="translate(1687.88 528.00) scale(0.86 1)" font-family="Liberation Sans" font-size="15.6" font-weight="normal" text-anchor="middle" fill="#1a1a1a">8000</text>
<line x1="1739.39" y1="507.00" x2="1739.39" y2="513.00" stroke="#141414" stroke-width="1.6" />
<text transform="translate(1739.39 528.00) scale(0.86 1)" font-family="Liberation Sans" font-size="15.6" font-weight="normal" text-anchor="middle" fill="#1a1a1a">9000</text>
<line x1="1790.90" y1="507.00" x2="1790.90" y2="513.00" stroke="#141414" stroke-width="1.6" />
<text transform="translate(1790.90 528.00) scale(0.86 1)" font-family="Liberation Sans" font-size="15.6" font-weight="normal" text-anchor="middle" fill="#1a1a1a">10000</text>
<text transform="translate(1532.00 549.00) scale(1.0 1)" font-family="Liberation Sans" font-size="15" font-weight="normal" text-anchor="middle" fill="#1a1a1a">Time</text>
<text x="1212.50" y="304.00" font-family="Liberation Sans" font-size="15.5" font-weight="normal" text-anchor="middle" fill="#1a1a1a" transform="rotate(-90 1212.5 304)">Amplitude</text>
</svg></body></html>
